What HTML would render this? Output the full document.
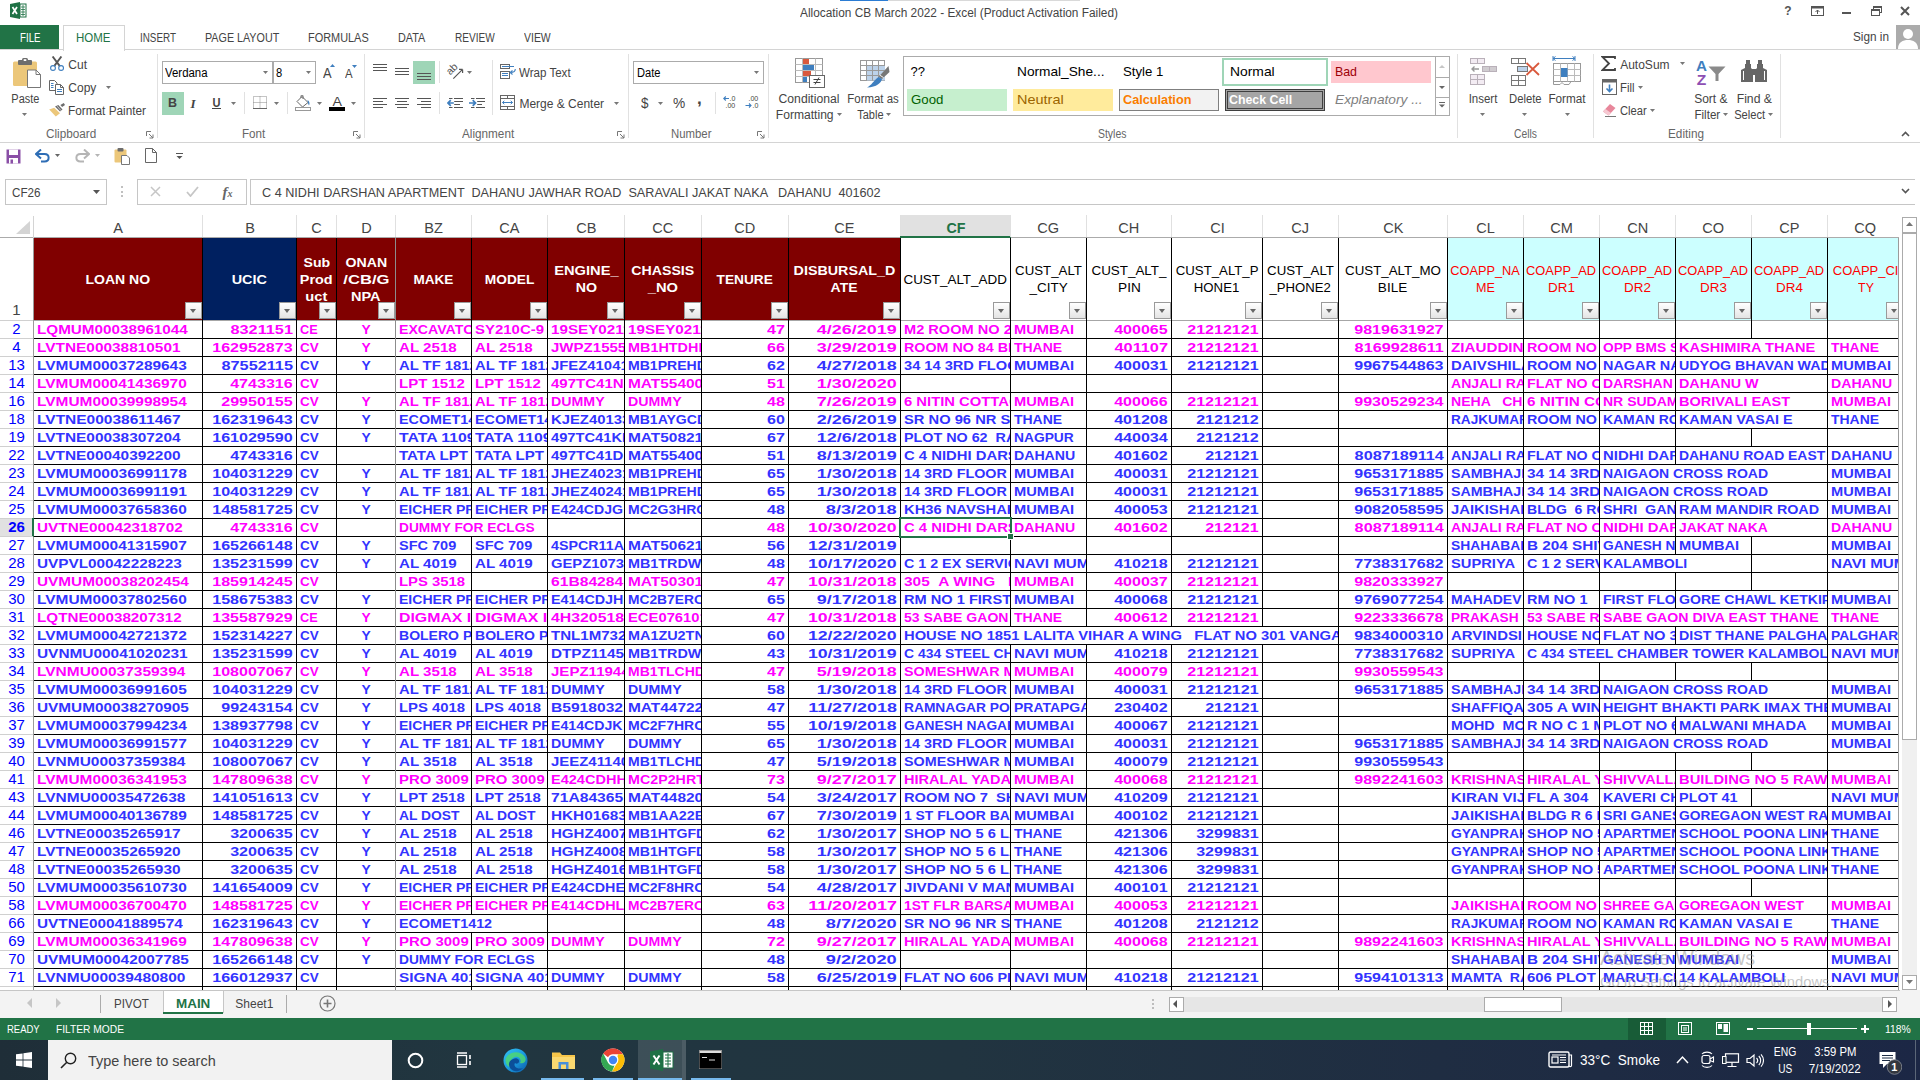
<!DOCTYPE html>
<html><head><meta charset="utf-8"><title>Allocation CB March 2022 - Excel</title>
<style>
html,body{margin:0;padding:0}
body{width:1920px;height:1080px;overflow:hidden;background:#fff;position:relative;font-family:"Liberation Sans",sans-serif}
.b{position:absolute;box-sizing:content-box}
.t{position:absolute;white-space:pre;display:inline-block}
.c{position:absolute;overflow:hidden;white-space:pre;font-size:12.5px;font-weight:bold;box-sizing:border-box}
.c.n{font-weight:normal}
.c span{display:inline-block}
.rn{position:absolute;left:0;width:33px;height:17px;text-align:center;font-size:15px;line-height:16px;color:#0000ff}
.rn.s{font-weight:bold;color:#0000ff}
.fb{position:absolute;width:15px;height:15px;border:1px solid #9a9a9a;background:linear-gradient(#ffffff,#e4e4e4)}
.fb i{position:absolute;left:4px;top:6px;width:0;height:0;border-left:3.5px solid transparent;border-right:3.5px solid transparent;border-top:4px solid #666}
</style></head>
<body>
<div class="b" style="left:840px;top:0px;width:48px;height:1px;background:#2b7cd3;"></div>
<div class="b" style="left:888px;top:0px;width:192px;height:1px;background:#d9d9d9;"></div>
<svg class="b" style="left:10px;top:2px;" width="17" height="17" viewBox="0 0 17 17"><path d="M0 2L10 0V17L0 15Z" fill="#1e7145"/><rect x="10" y="2" width="6" height="13" fill="#fff" stroke="#1e7145"/><path d="M11 5H15M11 7.5H15M11 10H15M11 12.5H15M13 3V14" stroke="#1e7145" stroke-width="0.8"/><path d="M2.5 5L7 12M7 5L2.5 12" stroke="#fff" stroke-width="1.7"/></svg>
<span class="t" style="top:4.9px;font-size:12px;line-height:17px;color:#444;left:800.0px;transform-origin:0 50%;transform:scaleX(0.987);">Allocation CB March 2022 - Excel (Product Activation Failed)</span>
<span class="t" style="top:2.5px;font-size:12px;line-height:17px;color:#555;font-weight:bold;left:1784.3px;transform-origin:50% 50%;">?</span>
<svg class="b" style="left:1811px;top:6px;" width="13" height="10" viewBox="0 0 13 10"><rect x="0.5" y="0.5" width="12" height="9" fill="none" stroke="#555"/><rect x="0.5" y="0.5" width="12" height="2" fill="#555"/><path d="M6.5 8V4M4.5 6L6.5 4L8.5 6" fill="none" stroke="#555"/></svg>
<div class="b" style="left:1842px;top:12px;width:9px;height:2px;background:#555;"></div>
<svg class="b" style="left:1871px;top:6px;" width="11" height="10" viewBox="0 0 11 10"><rect x="2.5" y="0.5" width="8" height="6" fill="none" stroke="#555"/><rect x="2.5" y="0.5" width="8" height="1.5" fill="#555"/><rect x="0.5" y="3.5" width="8" height="6" fill="#fff" stroke="#555"/><rect x="0.5" y="3.5" width="8" height="1.5" fill="#555"/></svg>
<svg class="b" style="left:1900px;top:6px;" width="10" height="10" viewBox="0 0 10 10"><path d="M1 1L9 9M9 1L1 9" stroke="#555" stroke-width="2"/></svg>
<div class="b" style="left:0px;top:25px;width:59px;height:25px;background:#217346;"></div>
<span class="t" style="top:29.8px;font-size:12px;line-height:17px;color:#fff;left:19.5px;transform-origin:0 50%;transform:scaleX(0.809);">FILE</span>
<div class="b" style="left:0px;top:49px;width:1920px;height:1px;background:#d4d4d4;"></div>
<div class="b" style="left:63px;top:25px;width:60px;height:25px;background:#fff;border:1px solid #d4d4d4;border-bottom:none"></div>
<span class="t" style="top:29.8px;font-size:12px;line-height:17px;color:#217346;left:76.3px;transform-origin:0 50%;transform:scaleX(0.958);">HOME</span>
<span class="t" style="top:29.8px;font-size:12px;line-height:17px;color:#444;left:140.3px;transform-origin:0 50%;transform:scaleX(0.822);">INSERT</span>
<span class="t" style="top:29.8px;font-size:12px;line-height:17px;color:#444;left:205.3px;transform-origin:0 50%;transform:scaleX(0.895);">PAGE LAYOUT</span>
<span class="t" style="top:29.8px;font-size:12px;line-height:17px;color:#444;left:308.3px;transform-origin:0 50%;transform:scaleX(0.910);">FORMULAS</span>
<span class="t" style="top:29.8px;font-size:12px;line-height:17px;color:#444;left:398.3px;transform-origin:0 50%;transform:scaleX(0.903);">DATA</span>
<span class="t" style="top:29.8px;font-size:12px;line-height:17px;color:#444;left:455.3px;transform-origin:0 50%;transform:scaleX(0.839);">REVIEW</span>
<span class="t" style="top:29.8px;font-size:12px;line-height:17px;color:#444;left:524.0px;transform-origin:0 50%;transform:scaleX(0.871);">VIEW</span>
<span class="t" style="top:29.1px;font-size:12px;line-height:17px;color:#444;left:1852.7px;transform-origin:0 50%;transform:scaleX(0.981);">Sign in</span>
<div class="b" style="left:1896px;top:25px;width:24px;height:24px;background:#ababab;"></div>
<svg class="b" style="left:1896px;top:25px;" width="24" height="24" viewBox="0 0 24 24"><circle cx="12" cy="9" r="5" fill="#fff"/><path d="M2 24C2 17 7 15 12 15C17 15 22 17 22 24Z" fill="#fff"/></svg>
<svg class="b" style="left:13px;top:58px;" width="28" height="30" viewBox="0 0 28 30"><rect x="0" y="3.5" width="24" height="24.5" rx="1.5" fill="#ecc77a"/><rect x="5" y="2" width="14" height="5" rx="1" fill="#6d6d6d"/><rect x="9" y="0" width="6" height="4" rx="1.5" fill="#6d6d6d"/><rect x="10.7" y="1.2" width="2.6" height="1.8" fill="#fff"/><path d="M14.5 12H23L27.5 16.5V29.5H14.5Z" fill="#fff" stroke="#777"/><path d="M23 12V16.5H27.5" fill="none" stroke="#777"/></svg>
<span class="t" style="top:90.5px;font-size:12px;line-height:17px;color:#444;left:9.9px;transform-origin:50% 50%;transform:scaleX(0.912);">Paste</span>
<svg class="b" style="left:22px;top:113px;" width="5" height="3" viewBox="0 0 5 3"><path d="M0 0H5L2.5 3Z" fill="#777"/></svg>
<svg class="b" style="left:50px;top:56px;" width="15" height="16" viewBox="0 0 15 16"><path d="M2.6 0.5L10.2 10.6M11.4 0.5L3.8 10.6" stroke="#555" stroke-width="1.9" fill="none"/><circle cx="3" cy="12" r="2.4" fill="#fff" stroke="#3f7fbf" stroke-width="1.1"/><circle cx="11.1" cy="12" r="2.4" fill="#fff" stroke="#3f7fbf" stroke-width="1.1"/></svg>
<span class="t" style="top:57.0px;font-size:12px;line-height:17px;color:#444;left:68.3px;transform-origin:0 50%;">Cut</span>
<svg class="b" style="left:49px;top:80px;" width="16" height="15" viewBox="0 0 16 15"><path d="M0.5 0.5H5.5L8 3V10.5H0.5Z" fill="#fff" stroke="#666"/><path d="M2 3.5H4.5M2 5.5H4.5M2 7.5H4.5" stroke="#3f7fbf"/><path d="M6.5 4.5H11.5L14.5 7.5V14.5H6.5Z" fill="#fff" stroke="#666"/><path d="M11.5 4.5V7.5H14.5" fill="none" stroke="#666"/><path d="M8 9.5H13M8 11.5H13" stroke="#3f7fbf"/></svg>
<span class="t" style="top:80.1px;font-size:12px;line-height:17px;color:#444;left:68.3px;transform-origin:0 50%;">Copy</span>
<svg class="b" style="left:106px;top:86px;" width="5" height="3" viewBox="0 0 5 3"><path d="M0 0H5L2.5 3Z" fill="#777"/></svg>
<svg class="b" style="left:49px;top:103px;" width="17" height="14" viewBox="0 0 17 14"><path d="M0.2 6.5L5.2 4.8L11 10.2L6.8 13.6Z" fill="#ecc77a"/><path d="M6 3.6L9.3 1.9L13.5 6.5L11 8.6Z" fill="#6d6d6d"/><path d="M11.4 1.9L14.7 0L16 1.9L13.1 4Z" fill="#6d6d6d"/><path d="M8.2 3.2L12 7.6" stroke="#fff" stroke-width="0.6"/></svg>
<span class="t" style="top:103.2px;font-size:12px;line-height:17px;color:#444;left:68.3px;transform-origin:0 50%;transform:scaleX(0.983);">Format Painter</span>
<span class="t" style="top:125.5px;font-size:12px;line-height:17px;color:#666;left:45.5px;transform-origin:0 50%;transform:scaleX(0.979);">Clipboard</span>
<svg class="b" style="left:146px;top:131px;" width="8" height="8" viewBox="0 0 8 8"><path d="M0.5 5V0.5H5" fill="none" stroke="#777"/><path d="M3 3L7 7M7 3.5V7H3.5" fill="none" stroke="#777"/></svg>
<div class="b" style="left:157px;top:54px;width:1px;height:84px;background:#e1e1e1"></div>
<div class="b" style="left:162px;top:61px;width:109px;height:21px;background:#fff;border:1px solid #ababab;"></div>
<div class="b" style="left:273px;top:61px;width:41px;height:21px;background:#fff;border:1px solid #ababab;"></div>
<span class="t" style="top:65.2px;font-size:12px;line-height:17px;color:#000;left:165.0px;transform-origin:0 50%;transform:scaleX(0.951);">Verdana</span>
<svg class="b" style="left:263px;top:71px;" width="5" height="3" viewBox="0 0 5 3"><path d="M0 0H5L2.5 3Z" fill="#777"/></svg>
<span class="t" style="top:65.2px;font-size:12px;line-height:17px;color:#000;left:275.8px;transform-origin:0 50%;transform:scaleX(0.929);">8</span>
<svg class="b" style="left:306px;top:71px;" width="5" height="3" viewBox="0 0 5 3"><path d="M0 0H5L2.5 3Z" fill="#777"/></svg>
<span class="t" style="top:63.3px;font-size:14.5px;line-height:20px;color:#444;left:322.7px;transform-origin:0 50%;transform:scaleX(0.889);">A</span>
<svg class="b" style="left:330px;top:64px;" width="5" height="3" viewBox="0 0 5 3"><path d="M0 3H5L2.5 0Z" fill="#3f7fbf"/></svg>
<span class="t" style="top:65.8px;font-size:12px;line-height:17px;color:#444;left:345.2px;transform-origin:0 50%;transform:scaleX(0.950);">A</span>
<svg class="b" style="left:352px;top:65px;" width="5" height="3" viewBox="0 0 5 3"><path d="M0 0H5L2.5 3Z" fill="#3f7fbf"/></svg>
<div class="b" style="left:162px;top:92px;width:22px;height:23px;background:#9fd5b7;"></div>
<span class="t" style="top:94.0px;font-size:12.5px;line-height:18px;color:#444;font-weight:bold;left:168.0px;transform-origin:50% 50%;">B</span>
<span class="t" style="left:190.5px;top:94.5px;font-size:13px;line-height:17px;color:#444;font-family:'Liberation Serif',serif;font-style:italic;font-weight:bold">I</span>
<span class="t" style="top:94.0px;font-size:12.5px;line-height:18px;color:#444;font-weight:bold;left:212.2px;transform-origin:50% 50%;transform:scaleX(0.886);">U</span>
<div class="b" style="left:212px;top:108px;width:9px;height:1px;background:#444;"></div>
<svg class="b" style="left:231px;top:102px;" width="5" height="3" viewBox="0 0 5 3"><path d="M0 0H5L2.5 3Z" fill="#777"/></svg>
<div class="b" style="left:244px;top:92px;width:1px;height:22px;background:#e1e1e1"></div>
<svg class="b" style="left:253px;top:96px;" width="14" height="13" viewBox="0 0 14 13"><path d="M0.5 0.5H13.5V12.5H0.5ZM7 0.5V12.5M0.5 6.5H13.5" fill="none" stroke="#8a8a8a" stroke-dasharray="1 1"/><path d="M0 12.5H14" stroke="#666"/></svg>
<svg class="b" style="left:274px;top:102px;" width="5" height="3" viewBox="0 0 5 3"><path d="M0 0H5L2.5 3Z" fill="#777"/></svg>
<div class="b" style="left:287px;top:92px;width:1px;height:22px;background:#e1e1e1"></div>
<svg class="b" style="left:295px;top:95px;" width="17" height="16" viewBox="0 0 17 16"><path d="M7 1.5L13 7.5L7.5 12L2 6.5Z" fill="#fff" stroke="#666"/><path d="M6 3V0.8C6 0 8 0 8 0.8V4" fill="none" stroke="#666"/><path d="M12.5 5C14.5 6 15 8.5 14 10.5C13 9 12.8 7 12.5 5Z" fill="#3f7fbf"/><rect x="0.5" y="12.5" width="15" height="3" fill="#fff" stroke="#999"/></svg>
<svg class="b" style="left:317px;top:102px;" width="5" height="3" viewBox="0 0 5 3"><path d="M0 0H5L2.5 3Z" fill="#777"/></svg>
<span class="t" style="top:92.5px;font-size:13px;line-height:18px;color:#444;left:332.9px;transform-origin:50% 50%;transform:scaleX(1.096);">A</span>
<div class="b" style="left:329px;top:107px;width:16px;height:4px;background:#000;"></div>
<svg class="b" style="left:351px;top:102px;" width="5" height="3" viewBox="0 0 5 3"><path d="M0 0H5L2.5 3Z" fill="#777"/></svg>
<span class="t" style="top:125.5px;font-size:12px;line-height:17px;color:#666;left:241.7px;transform-origin:0 50%;transform:scaleX(0.970);">Font</span>
<svg class="b" style="left:353px;top:131px;" width="8" height="8" viewBox="0 0 8 8"><path d="M0.5 5V0.5H5" fill="none" stroke="#777"/><path d="M3 3L7 7M7 3.5V7H3.5" fill="none" stroke="#777"/></svg>
<div class="b" style="left:364px;top:54px;width:1px;height:84px;background:#e1e1e1"></div>
<svg class="b" style="left:373px;top:63px;" width="14" height="18" viewBox="0 0 14 18"><rect x="0" y="1" width="14" height="1" fill="#555"/><rect x="0" y="4" width="14" height="1" fill="#555"/><rect x="0" y="7" width="14" height="1" fill="#555"/></svg>
<svg class="b" style="left:395px;top:63px;" width="14" height="18" viewBox="0 0 14 18"><rect x="0" y="5" width="14" height="1" fill="#555"/><rect x="0" y="8" width="14" height="1" fill="#555"/><rect x="0" y="11" width="14" height="1" fill="#555"/></svg>
<div class="b" style="left:413px;top:61px;width:22px;height:23px;background:#9fd5b7;"></div>
<svg class="b" style="left:417px;top:63px;" width="14" height="18" viewBox="0 0 14 18"><rect x="0" y="10" width="14" height="1" fill="#555"/><rect x="0" y="13" width="14" height="1" fill="#555"/><rect x="0" y="16" width="14" height="1" fill="#555"/></svg>
<div class="b" style="left:439px;top:61px;width:1px;height:22px;background:#e1e1e1"></div>
<svg class="b" style="left:446px;top:63px;" width="18" height="17" viewBox="0 0 18 17"><path d="M7.3 15.7L16.6 6.4M16.6 6.4H13M16.6 6.4V10" fill="none" stroke="#555" stroke-width="1.2"/><text x="0" y="0" transform="translate(4.2,12.6) rotate(-45)" font-size="10.5" fill="#555" font-family="Liberation Sans">ab</text></svg>
<svg class="b" style="left:467px;top:71px;" width="5" height="3" viewBox="0 0 5 3"><path d="M0 0H5L2.5 3Z" fill="#777"/></svg>
<div class="b" style="left:492px;top:60px;width:1px;height:55px;background:#e1e1e1"></div>
<svg class="b" style="left:500px;top:64px;" width="17" height="15" viewBox="0 0 17 15"><rect x="0.5" y="0.5" width="9" height="4" fill="#fff" stroke="#666"/><rect x="0.5" y="7.5" width="9" height="7" fill="#fff" stroke="#666"/><path d="M2 2.5H14M2 9.5H8M2 11.5H8" stroke="#3f7fbf"/><path d="M15.3 5C15.3 8 13 8.5 10.5 8.5M12.5 6.5L10.2 8.5L12.5 10.5" fill="none" stroke="#3f7fbf" stroke-width="1.1"/></svg>
<span class="t" style="top:65.2px;font-size:12px;line-height:17px;color:#444;left:519.4px;transform-origin:0 50%;transform:scaleX(0.963);">Wrap Text</span>
<svg class="b" style="left:373px;top:97px;" width="14" height="12" viewBox="0 0 14 12"><rect x="0" y="1" width="14" height="1" fill="#555"/><rect x="0" y="4" width="10" height="1" fill="#555"/><rect x="0" y="7" width="14" height="1" fill="#555"/><rect x="0" y="10" width="10" height="1" fill="#555"/></svg>
<svg class="b" style="left:395px;top:97px;" width="14" height="12" viewBox="0 0 14 12"><rect x="0.0" y="1" width="14" height="1" fill="#555"/><rect x="2.0" y="4" width="10" height="1" fill="#555"/><rect x="0.0" y="7" width="14" height="1" fill="#555"/><rect x="2.0" y="10" width="10" height="1" fill="#555"/></svg>
<svg class="b" style="left:417px;top:97px;" width="14" height="12" viewBox="0 0 14 12"><rect x="0" y="1" width="14" height="1" fill="#555"/><rect x="4" y="4" width="10" height="1" fill="#555"/><rect x="0" y="7" width="14" height="1" fill="#555"/><rect x="4" y="10" width="10" height="1" fill="#555"/></svg>
<div class="b" style="left:439px;top:92px;width:1px;height:22px;background:#e1e1e1"></div>
<svg class="b" style="left:447px;top:97px;" width="17" height="12" viewBox="0 0 17 12"><path d="M2 1.5H5.5M7 1.5H16M7.2 4.5H16M7.2 7.5H13M2 10.5H5.5M7 10.5H16" stroke="#555"/><path d="M6.8 6H1M3.8 3.2L1 6L3.8 8.8" fill="none" stroke="#3f7fbf" stroke-width="1.7"/></svg>
<svg class="b" style="left:469px;top:97px;" width="17" height="12" viewBox="0 0 17 12"><path d="M2 1.5H5.5M7 1.5H16M8.2 4.5H16M8.2 7.5H13M2 10.5H5.5M7 10.5H16" stroke="#555"/><path d="M0 6H6.5M3.7 3.2L6.5 6L3.7 8.8" fill="none" stroke="#3f7fbf" stroke-width="1.7"/></svg>
<svg class="b" style="left:500px;top:95px;" width="15" height="15" viewBox="0 0 15 15"><rect x="0.5" y="0.5" width="14" height="14" fill="#fff" stroke="#666"/><path d="M0.5 3.5H14.5M0.5 11.5H14.5M7.5 0.5V3.5M7.5 11.5V14.5" stroke="#666"/><path d="M2.5 7.5H12.5M4.3 5.8L2.5 7.5L4.3 9.2M10.7 5.8L12.5 7.5L10.7 9.2" fill="none" stroke="#3f7fbf"/></svg>
<span class="t" style="top:96.1px;font-size:12px;line-height:17px;color:#444;left:519.4px;transform-origin:0 50%;">Merge &amp; Center</span>
<svg class="b" style="left:614px;top:102px;" width="5" height="3" viewBox="0 0 5 3"><path d="M0 0H5L2.5 3Z" fill="#777"/></svg>
<span class="t" style="top:125.5px;font-size:12px;line-height:17px;color:#666;left:462.2px;transform-origin:0 50%;transform:scaleX(0.978);">Alignment</span>
<svg class="b" style="left:617px;top:131px;" width="8" height="8" viewBox="0 0 8 8"><path d="M0.5 5V0.5H5" fill="none" stroke="#777"/><path d="M3 3L7 7M7 3.5V7H3.5" fill="none" stroke="#777"/></svg>
<div class="b" style="left:628px;top:54px;width:1px;height:84px;background:#e1e1e1"></div>
<div class="b" style="left:633px;top:61px;width:129px;height:21px;background:#fff;border:1px solid #ababab;"></div>
<span class="t" style="top:65.2px;font-size:12px;line-height:17px;color:#000;left:636.5px;transform-origin:0 50%;transform:scaleX(0.927);">Date</span>
<svg class="b" style="left:754px;top:71px;" width="5" height="3" viewBox="0 0 5 3"><path d="M0 0H5L2.5 3Z" fill="#777"/></svg>
<span class="t" style="top:93.0px;font-size:14px;line-height:20px;color:#444;left:640.6px;transform-origin:0 50%;transform:scaleX(0.963);">$</span>
<svg class="b" style="left:658px;top:102px;" width="5" height="3" viewBox="0 0 5 3"><path d="M0 0H5L2.5 3Z" fill="#777"/></svg>
<span class="t" style="top:93.0px;font-size:14px;line-height:20px;color:#444;left:672.5px;transform-origin:0 50%;transform:scaleX(0.980);">%</span>
<span class="t" style="top:87.0px;font-size:17px;line-height:24px;color:#444;font-weight:bold;left:697.0px;transform-origin:0 50%;">,</span>
<div class="b" style="left:715px;top:92px;width:1px;height:22px;background:#e1e1e1"></div>
<svg class="b" style="left:723px;top:95px;" width="15" height="14" viewBox="0 0 15 14"><text x="6.5" y="6" font-size="7" fill="#444" font-family="Liberation Sans">.0</text><text x="2.5" y="13" font-size="7" fill="#444" font-family="Liberation Sans">.00</text><path d="M6 3.5H0.8M2.8 1.5L0.8 3.5L2.8 5.5" fill="none" stroke="#3f7fbf" stroke-width="1.1"/></svg>
<svg class="b" style="left:744.5px;top:95px;" width="15" height="14" viewBox="0 0 15 14"><text x="3.5" y="6" font-size="7" fill="#444" font-family="Liberation Sans">.00</text><text x="7.5" y="13" font-size="7" fill="#444" font-family="Liberation Sans">.0</text><path d="M0.5 10.5H6M4 8.5L6 10.5L4 12.5" fill="none" stroke="#3f7fbf" stroke-width="1.1"/></svg>
<span class="t" style="top:125.5px;font-size:12px;line-height:17px;color:#666;left:670.6px;transform-origin:0 50%;transform:scaleX(0.947);">Number</span>
<svg class="b" style="left:757px;top:131px;" width="8" height="8" viewBox="0 0 8 8"><path d="M0.5 5V0.5H5" fill="none" stroke="#777"/><path d="M3 3L7 7M7 3.5V7H3.5" fill="none" stroke="#777"/></svg>
<div class="b" style="left:768px;top:54px;width:1px;height:84px;background:#e1e1e1"></div>
<svg class="b" style="left:795px;top:58px;" width="30" height="30" viewBox="0 0 30 30"><rect x="0.5" y="0.5" width="27" height="24" fill="#fff" stroke="#999"/><path d="M0.5 6.5H27.5M0.5 12.5H27.5M0.5 18.5H27.5M7.5 0.5V24.5M20.5 0.5V24.5" stroke="#bbb"/><rect x="8" y="1" width="6" height="5" fill="#d9593d"/><rect x="8" y="7" width="11" height="5" fill="#3f7fbf"/><rect x="8" y="13" width="8" height="5" fill="#d9593d"/><rect x="8" y="19" width="4" height="5" fill="#3f7fbf"/><rect x="14.5" y="17.5" width="15" height="12" fill="#fff" stroke="#666"/><path d="M18.5 21.5H25.5M18.5 24.5H25.5M24 19.5L20 26.5" stroke="#444" fill="none"/></svg>
<span class="t" style="top:91.1px;font-size:12px;line-height:17px;color:#444;left:779.0px;transform-origin:50% 50%;transform:scaleX(1.016);">Conditional</span>
<span class="t" style="top:107.1px;font-size:12px;line-height:17px;color:#444;left:775.8px;transform-origin:50% 50%;transform:scaleX(1.008);">Formatting</span>
<svg class="b" style="left:837px;top:113px;" width="5" height="3" viewBox="0 0 5 3"><path d="M0 0H5L2.5 3Z" fill="#777"/></svg>
<svg class="b" style="left:860px;top:60px;" width="30" height="28" viewBox="0 0 30 28"><rect x="0.5" y="0.5" width="24" height="20" fill="#fff" stroke="#999"/><rect x="7" y="6" width="18" height="14.5" fill="#bcd2ea"/><path d="M0.5 5.5H24.5M0.5 10.5H24.5M0.5 15.5H24.5M6.5 0.5V20.5M12.5 0.5V20.5M18.5 0.5V20.5" stroke="#999"/><path d="M28.5 6L29.5 12L22 19L18.5 17Z" fill="#777"/><path d="M19.8 15.2L23.6 17.6" stroke="#fff" stroke-width="0.9"/><path d="M18.5 17L22 19C21 23 17 27 7 27.5C12 25 13 21 18.5 17Z" fill="#3f7fbf"/></svg>
<span class="t" style="top:91.1px;font-size:12px;line-height:17px;color:#444;left:846.0px;transform-origin:50% 50%;transform:scaleX(0.952);">Format as</span>
<span class="t" style="top:107.1px;font-size:12px;line-height:17px;color:#444;left:855.5px;transform-origin:50% 50%;transform:scaleX(0.917);">Table</span>
<svg class="b" style="left:886px;top:113px;" width="5" height="3" viewBox="0 0 5 3"><path d="M0 0H5L2.5 3Z" fill="#777"/></svg>
<div class="b" style="left:903px;top:56px;width:545px;height:58px;background:#fff;border:1px solid #ababab;"></div>
<span class="t" style="top:63.2px;font-size:13px;line-height:18px;color:#000;left:910.6px;transform-origin:0 50%;">??</span>
<span class="t" style="top:63.2px;font-size:13px;line-height:18px;color:#000;left:1017.3px;transform-origin:0 50%;transform:scaleX(1.053);">Normal_She...</span>
<span class="t" style="top:63.2px;font-size:13px;line-height:18px;color:#000;left:1123.4px;transform-origin:0 50%;transform:scaleX(1.014);">Style 1</span>
<div class="b" style="left:1222px;top:58px;width:102px;height:24px;background:#fff;border:2px solid #9fd5b7;"></div>
<span class="t" style="top:63.2px;font-size:13px;line-height:18px;color:#000;left:1229.7px;transform-origin:0 50%;transform:scaleX(1.067);">Normal</span>
<div class="b" style="left:1331px;top:61px;width:100px;height:22px;background:#ffc7ce;"></div>
<span class="t" style="top:63.2px;font-size:13px;line-height:18px;color:#9c0006;left:1335.3px;transform-origin:0 50%;transform:scaleX(0.951);">Bad</span>
<div class="b" style="left:907px;top:89px;width:100px;height:22px;background:#c6efce;"></div>
<span class="t" style="top:91.0px;font-size:13px;line-height:18px;color:#006100;left:911.0px;transform-origin:0 50%;transform:scaleX(1.019);">Good</span>
<div class="b" style="left:1013px;top:89px;width:100px;height:22px;background:#ffeb9c;"></div>
<span class="t" style="top:91.0px;font-size:13px;line-height:18px;color:#9c6500;left:1017.3px;transform-origin:0 50%;transform:scaleX(1.114);">Neutral</span>
<div class="b" style="left:1119px;top:89px;width:98px;height:20px;background:#f2f2f2;border:1px solid #7f7f7f;"></div>
<span class="t" style="top:91.0px;font-size:13px;line-height:18px;color:#fa7d00;font-weight:bold;left:1122.9px;transform-origin:0 50%;transform:scaleX(0.976);">Calculation</span>
<div class="b" style="left:1225px;top:89px;width:94px;height:16px;background:#a5a5a5;border:3px double #3f3f3f;"></div>
<span class="t" style="top:91.0px;font-size:13px;line-height:18px;color:#fff;font-weight:bold;left:1229.4px;transform-origin:0 50%;transform:scaleX(0.951);">Check Cell</span>
<span class="t" style="top:91.0px;font-size:13px;line-height:18px;color:#7f7f7f;font-style:italic;left:1335.3px;transform-origin:0 50%;transform:scaleX(1.054);">Explanatory ...</span>
<div class="b" style="left:1435px;top:56px;width:13px;height:20px;background:#fff;border:1px solid #ababab;"></div>
<div class="b" style="left:1435px;top:77px;width:13px;height:19px;background:#fff;border:1px solid #ababab;"></div>
<div class="b" style="left:1435px;top:97px;width:13px;height:17px;background:#fff;border:1px solid #ababab;"></div>
<svg class="b" style="left:1439px;top:65px;" width="6" height="3" viewBox="0 0 6 3"><path d="M0 3H6L3 0Z" fill="#c6c6c6"/></svg>
<svg class="b" style="left:1439px;top:86px;" width="6" height="3" viewBox="0 0 6 3"><path d="M0 0H6L3 3Z" fill="#666"/></svg>
<svg class="b" style="left:1439px;top:102px;" width="6" height="6" viewBox="0 0 6 6"><path d="M0 0.5H6" stroke="#666"/><path d="M0 2.5H6L3 5.5Z" fill="#666"/></svg>
<span class="t" style="top:125.5px;font-size:12px;line-height:17px;color:#666;left:1098.3px;transform-origin:0 50%;transform:scaleX(0.869);">Styles</span>
<div class="b" style="left:1457px;top:54px;width:1px;height:84px;background:#e1e1e1"></div>
<svg class="b" style="left:1469.5px;top:58px;" width="27" height="27" viewBox="0 0 27 27"><rect x="0.5" y="0.5" width="14" height="5" fill="#f3ecf3" stroke="#b9b0b9"/><path d="M7.5 0.5V5.5" stroke="#b9b0b9"/><rect x="12.5" y="8.5" width="14" height="5" fill="#d0ccd0" stroke="#b9b0b9"/><path d="M19.5 8.5V13.5" stroke="#b9b0b9"/><rect x="0.5" y="16.5" width="14" height="10" fill="#f3ecf3" stroke="#b9b0b9"/><path d="M7.5 16.5V26.5M0.5 21.5H14.5" stroke="#b9b0b9"/><path d="M9 11H2M4.5 8.5L2 11L4.5 13.5" fill="none" stroke="#999" stroke-width="1.4"/></svg>
<span class="t" style="top:91.1px;font-size:12px;line-height:17px;color:#444;left:1467.5px;transform-origin:50% 50%;transform:scaleX(0.956);">Insert</span>
<svg class="b" style="left:1480px;top:113px;" width="5" height="3" viewBox="0 0 5 3"><path d="M0 0H5L2.5 3Z" fill="#777"/></svg>
<svg class="b" style="left:1511px;top:58px;" width="30" height="28" viewBox="0 0 30 28"><rect x="0.5" y="0.5" width="14" height="5" fill="#fff" stroke="#777"/><path d="M7.5 0.5V5.5" stroke="#777"/><rect x="6.5" y="8.5" width="10" height="5" fill="#bcd2ea" stroke="#777"/><rect x="0.5" y="17.5" width="14" height="10" fill="#fff" stroke="#777"/><path d="M7.5 17.5V27.5M0.5 22.5H14.5" stroke="#777"/><path d="M15.5 5L28 17M28 5L15.5 17" stroke="#d9593d" stroke-width="1.8" fill="none"/></svg>
<span class="t" style="top:91.1px;font-size:12px;line-height:17px;color:#444;left:1507.7px;transform-origin:50% 50%;transform:scaleX(0.940);">Delete</span>
<svg class="b" style="left:1522px;top:113px;" width="5" height="3" viewBox="0 0 5 3"><path d="M0 0H5L2.5 3Z" fill="#777"/></svg>
<svg class="b" style="left:1552px;top:56px;" width="30" height="32" viewBox="0 0 30 32"><path d="M1 2.5H23M1 0V5M23 0V5M3.5 0.5L1 2.5L3.5 4.5M20.5 0.5L23 2.5L20.5 4.5" fill="none" stroke="#3f7fbf"/><rect x="1.5" y="7.5" width="27" height="18" fill="#fff" stroke="#999"/><path d="M1.5 13.5H28.5M1.5 19.5H28.5M8.5 7.5V25.5M15.5 7.5V25.5M22.5 7.5V25.5" stroke="#bbb"/><rect x="9" y="12" width="6.5" height="9" fill="#3f7fbf"/><path d="M1.5 25.5V28.5H8L10 26.5L12 28.5H17L19 25.5" fill="none" stroke="#999"/></svg>
<span class="t" style="top:91.1px;font-size:12px;line-height:17px;color:#444;left:1548.4px;transform-origin:50% 50%;transform:scaleX(0.979);">Format</span>
<svg class="b" style="left:1565px;top:113px;" width="5" height="3" viewBox="0 0 5 3"><path d="M0 0H5L2.5 3Z" fill="#777"/></svg>
<span class="t" style="top:125.5px;font-size:12px;line-height:17px;color:#666;left:1513.7px;transform-origin:0 50%;transform:scaleX(0.859);">Cells</span>
<div class="b" style="left:1593px;top:54px;width:1px;height:84px;background:#e1e1e1"></div>
<svg class="b" style="left:1601px;top:56px;" width="16" height="15" viewBox="0 0 16 15"><path d="M14 3V1H1.5L8 7.5L1.5 14H14V12" fill="none" stroke="#444" stroke-width="1.8"/></svg>
<span class="t" style="top:56.8px;font-size:12px;line-height:17px;color:#444;left:1620.2px;transform-origin:0 50%;">AutoSum</span>
<svg class="b" style="left:1680px;top:62px;" width="5" height="3" viewBox="0 0 5 3"><path d="M0 0H5L2.5 3Z" fill="#777"/></svg>
<svg class="b" style="left:1601.5px;top:79px;" width="15" height="16" viewBox="0 0 15 16"><rect x="0.5" y="0.5" width="14" height="15" fill="#fff" stroke="#666"/><rect x="0.5" y="0.5" width="14" height="3" fill="#666"/><path d="M7.5 5.5V12M4.5 9.5L7.5 12.5L10.5 9.5" fill="none" stroke="#3f7fbf" stroke-width="1.6"/></svg>
<span class="t" style="top:79.7px;font-size:12px;line-height:17px;color:#444;left:1620.2px;transform-origin:0 50%;transform:scaleX(0.946);">Fill</span>
<svg class="b" style="left:1638px;top:86px;" width="5" height="3" viewBox="0 0 5 3"><path d="M0 0H5L2.5 3Z" fill="#777"/></svg>
<svg class="b" style="left:1602px;top:103px;" width="15" height="14" viewBox="0 0 15 14"><path d="M1 8.5L8 1L13.5 5L6.5 12.5Z" fill="#e8879b"/><path d="M1 8.5L3.5 6L9 10L6.5 12.5Z" fill="#f6c9d2"/><path d="M3 13.5H14" stroke="#777"/></svg>
<span class="t" style="top:102.8px;font-size:12px;line-height:17px;color:#444;left:1620.2px;transform-origin:0 50%;transform:scaleX(0.931);">Clear</span>
<svg class="b" style="left:1650px;top:109px;" width="5" height="3" viewBox="0 0 5 3"><path d="M0 0H5L2.5 3Z" fill="#777"/></svg>
<span class="t" style="top:54.5px;font-size:15px;line-height:21px;color:#3f7fbf;font-weight:bold;left:1696.1px;transform-origin:50% 50%;transform:scaleX(1.015);">A</span>
<span class="t" style="top:69.0px;font-size:15px;line-height:21px;color:#8e4fb3;font-weight:bold;left:1696.9px;transform-origin:50% 50%;transform:scaleX(1.037);">Z</span>
<svg class="b" style="left:1708px;top:66px;" width="18" height="16" viewBox="0 0 18 16"><path d="M0.5 0.5H17.5L10.5 8V15H7.5V8Z" fill="#8a8a8a"/></svg>
<span class="t" style="top:91.1px;font-size:12px;line-height:17px;color:#444;left:1694.2px;transform-origin:50% 50%;">Sort &amp;</span>
<span class="t" style="top:107.1px;font-size:12px;line-height:17px;color:#444;left:1693.9px;transform-origin:50% 50%;transform:scaleX(0.964);">Filter</span>
<svg class="b" style="left:1723px;top:113px;" width="5" height="3" viewBox="0 0 5 3"><path d="M0 0H5L2.5 3Z" fill="#777"/></svg>
<svg class="b" style="left:1741px;top:60px;" width="26" height="23" viewBox="0 0 26 23"><path d="M4 4H10V8L12 10V22H0V10L4 8ZM16 4H22V8L26 10V22H14V10L16 8Z" fill="#666"/><rect x="5" y="0" width="4" height="4" fill="#666"/><rect x="17" y="0" width="4" height="4" fill="#666"/><rect x="11" y="9" width="4" height="6" fill="#666"/><path d="M2.5 11V20M23.5 11V20" stroke="#fff"/></svg>
<span class="t" style="top:91.1px;font-size:12px;line-height:17px;color:#444;left:1736.7px;transform-origin:50% 50%;transform:scaleX(1.018);">Find &amp;</span>
<span class="t" style="top:107.1px;font-size:12px;line-height:17px;color:#444;left:1732.8px;transform-origin:50% 50%;transform:scaleX(0.929);">Select</span>
<svg class="b" style="left:1768px;top:113px;" width="5" height="3" viewBox="0 0 5 3"><path d="M0 0H5L2.5 3Z" fill="#777"/></svg>
<span class="t" style="top:125.5px;font-size:12px;line-height:17px;color:#666;left:1668.4px;transform-origin:0 50%;transform:scaleX(0.981);">Editing</span>
<div class="b" style="left:1780px;top:54px;width:1px;height:84px;background:#e1e1e1"></div>
<svg class="b" style="left:1901px;top:131px;" width="9" height="6" viewBox="0 0 9 6"><path d="M1 5L4.5 1.5L8 5" fill="none" stroke="#555" stroke-width="1.6"/></svg>
<div class="b" style="left:0px;top:142px;width:1920px;height:1px;background:#d4d4d4;"></div>
<svg class="b" style="left:6px;top:149px;" width="15" height="15" viewBox="0 0 15 15"><path d="M0.5 0.5H14.5V14.5H0.5Z" fill="#8a4fa6"/><rect x="3" y="0.5" width="9" height="5.5" fill="#fff"/><rect x="3" y="9" width="9" height="5.5" fill="#fff"/><rect x="4.5" y="10.5" width="2.5" height="4" fill="#8a4fa6"/></svg>
<svg class="b" style="left:35px;top:149px;" width="16" height="14" viewBox="0 0 16 14"><path d="M2 5H9.5C15 5 15 12.5 9.5 12.5H6" fill="none" stroke="#2e6db5" stroke-width="2"/><path d="M6 0.5L1 5L6 9.5" fill="none" stroke="#2e6db5" stroke-width="2"/></svg>
<svg class="b" style="left:55px;top:154px;" width="5" height="3" viewBox="0 0 5 3"><path d="M0 0H5L2.5 3Z" fill="#666"/></svg>
<svg class="b" style="left:74px;top:149px;" width="16" height="14" viewBox="0 0 16 14"><path d="M14 5H6.5C1 5 1 12.5 6.5 12.5H10" fill="none" stroke="#b5b5b5" stroke-width="2"/><path d="M10 0.5L15 5L10 9.5" fill="none" stroke="#b5b5b5" stroke-width="2"/></svg>
<svg class="b" style="left:95px;top:154px;" width="5" height="3" viewBox="0 0 5 3"><path d="M0 0H5L2.5 3Z" fill="#b5b5b5"/></svg>
<svg class="b" style="left:114px;top:147px;" width="17" height="18" viewBox="0 0 17 18"><rect x="0.5" y="2.5" width="12" height="13" rx="1" fill="#ecc77a"/><rect x="3.5" y="1" width="6" height="3.5" rx="1" fill="#6d6d6d"/><path d="M7.5 8.5H13L15.5 11V17.5H7.5Z" fill="#fff" stroke="#777"/></svg>
<svg class="b" style="left:145px;top:148px;" width="12" height="15" viewBox="0 0 12 15"><path d="M0.5 0.5H7.5L11.5 4.5V14.5H0.5Z" fill="#fff" stroke="#666"/><path d="M7.5 0.5V4.5H11.5" fill="none" stroke="#666"/></svg>
<svg class="b" style="left:176px;top:153px;" width="7" height="7" viewBox="0 0 7 7"><path d="M0 0.5H7" stroke="#555"/><path d="M0.5 3H6.5L3.5 6Z" fill="#555"/></svg>
<div class="b" style="left:5px;top:179px;width:100px;height:24px;background:#fff;border:1px solid #c6c6c6;"></div>
<span class="t" style="top:184.0px;font-size:12.5px;line-height:18px;color:#444;left:12.0px;transform-origin:0 50%;transform:scaleX(0.932);">CF26</span>
<svg class="b" style="left:93px;top:190px;" width="7" height="4" viewBox="0 0 7 4"><path d="M0 0H7L3.5 4Z" fill="#555"/></svg>
<div class="b" style="left:121px;top:186px;width:2px;height:2px;background:#ababab;border-radius:1px"></div>
<div class="b" style="left:121px;top:190.5px;width:2px;height:2px;background:#ababab;border-radius:1px"></div>
<div class="b" style="left:121px;top:195px;width:2px;height:2px;background:#ababab;border-radius:1px"></div>
<div class="b" style="left:137px;top:179px;width:108px;height:24px;background:#fff;border:1px solid #c6c6c6;"></div>
<svg class="b" style="left:150px;top:186px;" width="11" height="11" viewBox="0 0 11 11"><path d="M1 1L10 10M10 1L1 10" stroke="#c6c6c6" stroke-width="1.5"/></svg>
<svg class="b" style="left:186px;top:186px;" width="13" height="11" viewBox="0 0 13 11"><path d="M1 6L4.5 10L12 1" fill="none" stroke="#c6c6c6" stroke-width="1.8"/></svg>
<span class="t" style="left:222.5px;top:182.5px;font-size:15px;line-height:18px;color:#666;font-weight:bold;font-family:'Liberation Serif',serif;font-style:italic">f<span style="font-size:10px">x</span></span>
<div class="b" style="left:250px;top:179px;width:1664px;height:24px;background:#fff;border:1px solid #c6c6c6;border-right:none"></div>
<span class="t" style="top:184.0px;font-size:12.5px;line-height:18px;color:#444;left:262.3px;transform-origin:0 50%;transform:scaleX(1.012);">C 4 NIDHI DARSHAN APARTMENT &nbsp;DAHANU JAWHAR ROAD &nbsp;SARAVALI JAKAT NAKA &nbsp; DAHANU &nbsp;401602</span>
<svg class="b" style="left:1901px;top:188px;" width="9" height="6" viewBox="0 0 9 6"><path d="M1 1L4.5 4.5L8 1" fill="none" stroke="#555" stroke-width="1.6"/></svg>
<div class="b" id="grid" style="left:0;top:215px;width:1899px;height:775px;overflow:hidden;background:#fff">
<div class="b" style="left:0;top:0px;width:1900px;height:22px;background:#fff"></div>
<div class="b" style="left:0;top:22px;width:1899px;height:1px;background:#ababab"></div>
<svg class="b" style="left:15px;top:6px" width="16" height="14"><path d="M15 0V13H1Z" fill="#d4d4d4"/></svg>
<div class="b" style="left:202px;top:0px;width:1px;height:22px;background:#e0e0e0"></div>
<div class="b" style="left:296px;top:0px;width:1px;height:22px;background:#e0e0e0"></div>
<div class="b" style="left:336px;top:0px;width:1px;height:22px;background:#e0e0e0"></div>
<div class="b" style="left:395px;top:0px;width:1px;height:22px;background:#e0e0e0"></div>
<div class="b" style="left:471px;top:0px;width:1px;height:22px;background:#e0e0e0"></div>
<div class="b" style="left:547px;top:0px;width:1px;height:22px;background:#e0e0e0"></div>
<div class="b" style="left:624px;top:0px;width:1px;height:22px;background:#e0e0e0"></div>
<div class="b" style="left:701px;top:0px;width:1px;height:22px;background:#e0e0e0"></div>
<div class="b" style="left:788px;top:0px;width:1px;height:22px;background:#e0e0e0"></div>
<div class="b" style="left:900px;top:0px;width:1px;height:22px;background:#e0e0e0"></div>
<div class="b" style="left:901px;top:0px;width:109px;height:22px;background:#e1e1e1"></div>
<div class="b" style="left:900px;top:21px;width:111px;height:2px;background:#217346"></div>
<div class="b" style="left:1010px;top:0px;width:1px;height:22px;background:#e0e0e0"></div>
<div class="b" style="left:1086px;top:0px;width:1px;height:22px;background:#e0e0e0"></div>
<div class="b" style="left:1171px;top:0px;width:1px;height:22px;background:#e0e0e0"></div>
<div class="b" style="left:1262px;top:0px;width:1px;height:22px;background:#e0e0e0"></div>
<div class="b" style="left:1338px;top:0px;width:1px;height:22px;background:#e0e0e0"></div>
<div class="b" style="left:1447px;top:0px;width:1px;height:22px;background:#e0e0e0"></div>
<div class="b" style="left:1523px;top:0px;width:1px;height:22px;background:#e0e0e0"></div>
<div class="b" style="left:1599px;top:0px;width:1px;height:22px;background:#e0e0e0"></div>
<div class="b" style="left:1675px;top:0px;width:1px;height:22px;background:#e0e0e0"></div>
<div class="b" style="left:1751px;top:0px;width:1px;height:22px;background:#e0e0e0"></div>
<div class="b" style="left:1827px;top:0px;width:1px;height:22px;background:#e0e0e0"></div>
<div class="b" style="left:1903px;top:0px;width:1px;height:22px;background:#e0e0e0"></div>
<div class="b" style="left:33px;top:23px;width:1px;height:760px;background:#9b9b9b"></div>
<div class="b" style="left:33px;top:1px;width:1px;height:22px;background:#d4d4d4"></div>
<div class="rn" style="top:87px;color:#444">1</div>
<div class="b" style="left:0;top:105px;width:33px;height:1px;background:#d0d0d0"></div>
<div class="b" style="left:34px;top:23px;width:168px;height:82px;background:#800000"></div>
<div class="c" style="left:34px;top:56px;width:168px;height:19px;line-height:19px;color:#fff;text-align:center;"><span style="transform:scaleX(1.121);transform-origin:50% 50%">LOAN NO</span></div>
<div class="fb" style="left:185px;top:87px"><i></i></div>
<div class="b" style="left:203px;top:23px;width:93px;height:82px;background:#002060"></div>
<div class="c" style="left:203px;top:56px;width:93px;height:19px;line-height:19px;color:#fff;text-align:center;"><span style="transform:scaleX(1.153);transform-origin:50% 50%">UCIC</span></div>
<div class="fb" style="left:279px;top:87px"><i></i></div>
<div class="b" style="left:297px;top:23px;width:39px;height:82px;background:#800000"></div>
<div class="c" style="left:297px;top:39px;width:39px;height:19px;line-height:19px;color:#fff;text-align:center;"><span style="transform:scaleX(1.127);transform-origin:50% 50%">Sub</span></div>
<div class="c" style="left:297px;top:56px;width:39px;height:19px;line-height:19px;color:#fff;text-align:center;"><span style="transform:scaleX(1.153);transform-origin:50% 50%">Prod</span></div>
<div class="c" style="left:297px;top:73px;width:39px;height:19px;line-height:19px;color:#fff;text-align:center;"><span style="transform:scaleX(1.175);transform-origin:50% 50%">uct</span></div>
<div class="fb" style="left:319px;top:87px"><i></i></div>
<div class="b" style="left:337px;top:23px;width:58px;height:82px;background:#800000"></div>
<div class="c" style="left:337px;top:39px;width:58px;height:19px;line-height:19px;color:#fff;text-align:center;"><span style="transform:scaleX(1.132);transform-origin:50% 50%">ONAN</span></div>
<div class="c" style="left:337px;top:56px;width:58px;height:19px;line-height:19px;color:#fff;text-align:center;"><span style="transform:scaleX(1.328);transform-origin:50% 50%">/CB/G</span></div>
<div class="c" style="left:337px;top:73px;width:58px;height:19px;line-height:19px;color:#fff;text-align:center;"><span style="transform:scaleX(1.161);transform-origin:50% 50%">NPA</span></div>
<div class="fb" style="left:378px;top:87px"><i></i></div>
<div class="b" style="left:396px;top:23px;width:75px;height:82px;background:#800000"></div>
<div class="c" style="left:396px;top:56px;width:75px;height:19px;line-height:19px;color:#fff;text-align:center;"><span style="transform:scaleX(1.084);transform-origin:50% 50%">MAKE</span></div>
<div class="fb" style="left:454px;top:87px"><i></i></div>
<div class="b" style="left:472px;top:23px;width:75px;height:82px;background:#800000"></div>
<div class="c" style="left:472px;top:56px;width:75px;height:19px;line-height:19px;color:#fff;text-align:center;"><span style="transform:scaleX(1.098);transform-origin:50% 50%">MODEL</span></div>
<div class="fb" style="left:530px;top:87px"><i></i></div>
<div class="b" style="left:548px;top:23px;width:76px;height:82px;background:#800000"></div>
<div class="c" style="left:548px;top:47px;width:76px;height:19px;line-height:19px;color:#fff;text-align:center;"><span style="transform:scaleX(1.173);transform-origin:50% 50%">ENGINE_</span></div>
<div class="c" style="left:548px;top:64px;width:76px;height:19px;line-height:19px;color:#fff;text-align:center;"><span style="transform:scaleX(1.136);transform-origin:50% 50%">NO</span></div>
<div class="fb" style="left:607px;top:87px"><i></i></div>
<div class="b" style="left:625px;top:23px;width:76px;height:82px;background:#800000"></div>
<div class="c" style="left:625px;top:47px;width:76px;height:19px;line-height:19px;color:#fff;text-align:center;"><span style="transform:scaleX(1.132);transform-origin:50% 50%">CHASSIS</span></div>
<div class="c" style="left:625px;top:64px;width:76px;height:19px;line-height:19px;color:#fff;text-align:center;"><span style="transform:scaleX(1.176);transform-origin:50% 50%">_NO</span></div>
<div class="fb" style="left:684px;top:87px"><i></i></div>
<div class="b" style="left:702px;top:23px;width:86px;height:82px;background:#800000"></div>
<div class="c" style="left:702px;top:56px;width:86px;height:19px;line-height:19px;color:#fff;text-align:center;"><span style="transform:scaleX(1.096);transform-origin:50% 50%">TENURE</span></div>
<div class="fb" style="left:771px;top:87px"><i></i></div>
<div class="b" style="left:789px;top:23px;width:111px;height:82px;background:#800000"></div>
<div class="c" style="left:789px;top:47px;width:111px;height:19px;line-height:19px;color:#fff;text-align:center;"><span style="transform:scaleX(1.144);transform-origin:50% 50%">DISBURSAL_D</span></div>
<div class="c" style="left:789px;top:64px;width:111px;height:19px;line-height:19px;color:#fff;text-align:center;"><span style="transform:scaleX(1.116);transform-origin:50% 50%">ATE</span></div>
<div class="fb" style="left:883px;top:87px"><i></i></div>
<div class="b" style="left:901px;top:23px;width:109px;height:82px;background:#fff"></div>
<div class="c n" style="left:901px;top:56px;width:109px;height:19px;line-height:19px;color:#000;text-align:center;"><span style="transform:scaleX(1.074);transform-origin:50% 50%">CUST_ALT_ADD</span></div>
<div class="fb" style="left:993px;top:87px"><i></i></div>
<div class="b" style="left:1011px;top:23px;width:75px;height:82px;background:#fff"></div>
<div class="c n" style="left:1011px;top:47px;width:75px;height:19px;line-height:19px;color:#000;text-align:center;"><span style="transform:scaleX(1.062);transform-origin:50% 50%">CUST_ALT</span></div>
<div class="c n" style="left:1011px;top:64px;width:75px;height:19px;line-height:19px;color:#000;text-align:center;"><span style="transform:scaleX(1.079);transform-origin:50% 50%">_CITY</span></div>
<div class="fb" style="left:1069px;top:87px"><i></i></div>
<div class="b" style="left:1087px;top:23px;width:84px;height:82px;background:#fff"></div>
<div class="c n" style="left:1087px;top:47px;width:84px;height:19px;line-height:19px;color:#000;text-align:center;"><span style="transform:scaleX(1.073);transform-origin:50% 50%">CUST_ALT_</span></div>
<div class="c n" style="left:1087px;top:64px;width:84px;height:19px;line-height:19px;color:#000;text-align:center;"><span style="transform:scaleX(1.089);transform-origin:50% 50%">PIN</span></div>
<div class="fb" style="left:1154px;top:87px"><i></i></div>
<div class="b" style="left:1172px;top:23px;width:90px;height:82px;background:#fff"></div>
<div class="c n" style="left:1172px;top:47px;width:90px;height:19px;line-height:19px;color:#000;text-align:center;"><span style="transform:scaleX(1.057);transform-origin:50% 50%">CUST_ALT_P</span></div>
<div class="c n" style="left:1172px;top:64px;width:90px;height:19px;line-height:19px;color:#000;text-align:center;"><span style="transform:scaleX(1.056);transform-origin:50% 50%">HONE1</span></div>
<div class="fb" style="left:1245px;top:87px"><i></i></div>
<div class="b" style="left:1263px;top:23px;width:75px;height:82px;background:#fff"></div>
<div class="c n" style="left:1263px;top:47px;width:75px;height:19px;line-height:19px;color:#000;text-align:center;"><span style="transform:scaleX(1.062);transform-origin:50% 50%">CUST_ALT</span></div>
<div class="c n" style="left:1263px;top:64px;width:75px;height:19px;line-height:19px;color:#000;text-align:center;"><span style="transform:scaleX(1.051);transform-origin:50% 50%">_PHONE2</span></div>
<div class="fb" style="left:1321px;top:87px"><i></i></div>
<div class="b" style="left:1339px;top:23px;width:108px;height:82px;background:#fff"></div>
<div class="c n" style="left:1339px;top:47px;width:108px;height:19px;line-height:19px;color:#000;text-align:center;"><span style="transform:scaleX(1.064);transform-origin:50% 50%">CUST_ALT_MO</span></div>
<div class="c n" style="left:1339px;top:64px;width:108px;height:19px;line-height:19px;color:#000;text-align:center;"><span style="transform:scaleX(1.085);transform-origin:50% 50%">BILE</span></div>
<div class="fb" style="left:1430px;top:87px"><i></i></div>
<div class="b" style="left:1448px;top:23px;width:75px;height:82px;background:#ccffff"></div>
<div class="c n" style="left:1448px;top:47px;width:75px;height:19px;line-height:19px;color:#ff0000;text-align:center;"><span style="transform:scaleX(1.023);transform-origin:50% 50%">COAPP_NA</span></div>
<div class="c n" style="left:1448px;top:64px;width:75px;height:19px;line-height:19px;color:#ff0000;text-align:center;"><span style="transform:scaleX(1.007);transform-origin:50% 50%">ME</span></div>
<div class="fb" style="left:1506px;top:87px"><i></i></div>
<div class="b" style="left:1524px;top:23px;width:75px;height:82px;background:#ccffff"></div>
<div class="c n" style="left:1524px;top:47px;width:75px;height:19px;line-height:19px;color:#ff0000;text-align:center;"><span style="transform:scaleX(1.028);transform-origin:50% 50%">COAPP_AD</span></div>
<div class="c n" style="left:1524px;top:64px;width:75px;height:19px;line-height:19px;color:#ff0000;text-align:center;"><span style="transform:scaleX(1.076);transform-origin:50% 50%">DR1</span></div>
<div class="fb" style="left:1582px;top:87px"><i></i></div>
<div class="b" style="left:1600px;top:23px;width:75px;height:82px;background:#ccffff"></div>
<div class="c n" style="left:1600px;top:47px;width:75px;height:19px;line-height:19px;color:#ff0000;text-align:center;"><span style="transform:scaleX(1.028);transform-origin:50% 50%">COAPP_AD</span></div>
<div class="c n" style="left:1600px;top:64px;width:75px;height:19px;line-height:19px;color:#ff0000;text-align:center;"><span style="transform:scaleX(1.076);transform-origin:50% 50%">DR2</span></div>
<div class="fb" style="left:1658px;top:87px"><i></i></div>
<div class="b" style="left:1676px;top:23px;width:75px;height:82px;background:#ccffff"></div>
<div class="c n" style="left:1676px;top:47px;width:75px;height:19px;line-height:19px;color:#ff0000;text-align:center;"><span style="transform:scaleX(1.028);transform-origin:50% 50%">COAPP_AD</span></div>
<div class="c n" style="left:1676px;top:64px;width:75px;height:19px;line-height:19px;color:#ff0000;text-align:center;"><span style="transform:scaleX(1.076);transform-origin:50% 50%">DR3</span></div>
<div class="fb" style="left:1734px;top:87px"><i></i></div>
<div class="b" style="left:1752px;top:23px;width:75px;height:82px;background:#ccffff"></div>
<div class="c n" style="left:1752px;top:47px;width:75px;height:19px;line-height:19px;color:#ff0000;text-align:center;"><span style="transform:scaleX(1.028);transform-origin:50% 50%">COAPP_AD</span></div>
<div class="c n" style="left:1752px;top:64px;width:75px;height:19px;line-height:19px;color:#ff0000;text-align:center;"><span style="transform:scaleX(1.076);transform-origin:50% 50%">DR4</span></div>
<div class="fb" style="left:1810px;top:87px"><i></i></div>
<div class="b" style="left:1828px;top:23px;width:75px;height:82px;background:#ccffff"></div>
<div class="c n" style="left:1828px;top:47px;width:75px;height:19px;line-height:19px;color:#ff0000;text-align:center;"><span style="transform:scaleX(1.039);transform-origin:50% 50%">COAPP_CI</span></div>
<div class="c n" style="left:1828px;top:64px;width:75px;height:19px;line-height:19px;color:#ff0000;text-align:center;"><span style="transform:scaleX(0.987);transform-origin:50% 50%">TY</span></div>
<div class="fb" style="left:1886px;top:87px"><i></i></div>
<div class="b" style="left:202px;top:23px;width:1px;height:82px;background:#000"></div>
<div class="b" style="left:296px;top:23px;width:1px;height:82px;background:#000"></div>
<div class="b" style="left:336px;top:23px;width:1px;height:82px;background:#000"></div>
<div class="b" style="left:395px;top:23px;width:1px;height:82px;background:#8c8c8c"></div>
<div class="b" style="left:471px;top:23px;width:1px;height:82px;background:#000"></div>
<div class="b" style="left:547px;top:23px;width:1px;height:82px;background:#000"></div>
<div class="b" style="left:624px;top:23px;width:1px;height:82px;background:#000"></div>
<div class="b" style="left:701px;top:23px;width:1px;height:82px;background:#000"></div>
<div class="b" style="left:788px;top:23px;width:1px;height:82px;background:#000"></div>
<div class="b" style="left:900px;top:23px;width:1px;height:82px;background:#000"></div>
<div class="b" style="left:1010px;top:23px;width:1px;height:82px;background:#000"></div>
<div class="b" style="left:1086px;top:23px;width:1px;height:82px;background:#000"></div>
<div class="b" style="left:1171px;top:23px;width:1px;height:82px;background:#000"></div>
<div class="b" style="left:1262px;top:23px;width:1px;height:82px;background:#000"></div>
<div class="b" style="left:1338px;top:23px;width:1px;height:82px;background:#000"></div>
<div class="b" style="left:1447px;top:23px;width:1px;height:82px;background:#000"></div>
<div class="b" style="left:1523px;top:23px;width:1px;height:82px;background:#000"></div>
<div class="b" style="left:1599px;top:23px;width:1px;height:82px;background:#000"></div>
<div class="b" style="left:1675px;top:23px;width:1px;height:82px;background:#000"></div>
<div class="b" style="left:1751px;top:23px;width:1px;height:82px;background:#000"></div>
<div class="b" style="left:1827px;top:23px;width:1px;height:82px;background:#000"></div>
<div class="rn" style="top:106px">2</div>
<div class="b" style="left:0;top:123px;width:33px;height:1px;background:#d0d0d0"></div>
<div class="c" style="left:34px;top:106px;width:168px;height:17px;line-height:19px;color:#ff00ff;text-align:left;padding-left:3px;"><span style="transform:scaleX(1.219);transform-origin:0 50%">LQMUM00038961044</span></div>
<div class="c" style="left:203px;top:106px;width:93px;height:17px;line-height:19px;color:#ff00ff;text-align:right;padding-right:3px;"><span style="transform:scaleX(1.302);transform-origin:100% 50%">8321151</span></div>
<div class="c" style="left:297px;top:106px;width:39px;height:17px;line-height:19px;color:#ff00ff;text-align:left;padding-left:3px;"><span style="transform:scaleX(1.017);transform-origin:0 50%">CE</span></div>
<div class="c" style="left:337px;top:106px;width:58px;height:17px;line-height:19px;color:#ff00ff;text-align:center;"><span style="transform:scaleX(1.109);transform-origin:50% 50%">Y</span></div>
<div class="c" style="left:396px;top:106px;width:75px;height:17px;line-height:19px;color:#ff00ff;text-align:left;padding-left:3px;"><span style="transform:scaleX(1.131);transform-origin:0 50%">EXCAVATOR</span></div>
<div class="c" style="left:472px;top:106px;width:75px;height:17px;line-height:19px;color:#ff00ff;text-align:left;padding-left:3px;"><span style="transform:scaleX(1.196);transform-origin:0 50%">SY210C-9</span></div>
<div class="c" style="left:548px;top:106px;width:76px;height:17px;line-height:19px;color:#ff00ff;text-align:left;padding-left:3px;"><span style="transform:scaleX(1.216);transform-origin:0 50%">19SEY0211</span></div>
<div class="c" style="left:625px;top:106px;width:76px;height:17px;line-height:19px;color:#ff00ff;text-align:left;padding-left:3px;"><span style="transform:scaleX(1.216);transform-origin:0 50%">19SEY0211</span></div>
<div class="c" style="left:702px;top:106px;width:86px;height:17px;line-height:19px;color:#ff00ff;text-align:right;padding-right:3px;"><span style="transform:scaleX(1.284);transform-origin:100% 50%">47</span></div>
<div class="c" style="left:789px;top:106px;width:111px;height:17px;line-height:19px;color:#ff00ff;text-align:right;padding-right:3px;"><span style="transform:scaleX(1.434);transform-origin:100% 50%">4/26/2019</span></div>
<div class="c" style="left:901px;top:106px;width:109px;height:17px;line-height:19px;color:#ff00ff;text-align:left;padding-left:3px;"><span style="transform:scaleX(1.167);transform-origin:0 50%">M2 ROOM NO 20</span></div>
<div class="c" style="left:1011px;top:106px;width:75px;height:17px;line-height:19px;color:#ff00ff;text-align:left;padding-left:3px;"><span style="transform:scaleX(1.170);transform-origin:0 50%">MUMBAI</span></div>
<div class="c" style="left:1087px;top:106px;width:84px;height:17px;line-height:19px;color:#ff00ff;text-align:right;padding-right:3px;"><span style="transform:scaleX(1.284);transform-origin:100% 50%">400065</span></div>
<div class="c" style="left:1172px;top:106px;width:90px;height:17px;line-height:19px;color:#ff00ff;text-align:right;padding-right:3px;"><span style="transform:scaleX(1.284);transform-origin:100% 50%">21212121</span></div>
<div class="c" style="left:1339px;top:106px;width:108px;height:17px;line-height:19px;color:#ff00ff;text-align:right;padding-right:3px;"><span style="transform:scaleX(1.284);transform-origin:100% 50%">9819631927</span></div>
<div class="rn" style="top:124px">4</div>
<div class="b" style="left:0;top:141px;width:33px;height:1px;background:#d0d0d0"></div>
<div class="c" style="left:34px;top:124px;width:168px;height:17px;line-height:19px;color:#ff00ff;text-align:left;padding-left:3px;"><span style="transform:scaleX(1.232);transform-origin:0 50%">LVTNE00038810501</span></div>
<div class="c" style="left:203px;top:124px;width:93px;height:17px;line-height:19px;color:#ff00ff;text-align:right;padding-right:3px;"><span style="transform:scaleX(1.284);transform-origin:100% 50%">162952873</span></div>
<div class="c" style="left:297px;top:124px;width:39px;height:17px;line-height:19px;color:#ff00ff;text-align:left;padding-left:3px;"><span style="transform:scaleX(1.075);transform-origin:0 50%">CV</span></div>
<div class="c" style="left:337px;top:124px;width:58px;height:17px;line-height:19px;color:#ff00ff;text-align:center;"><span style="transform:scaleX(1.109);transform-origin:50% 50%">Y</span></div>
<div class="c" style="left:396px;top:124px;width:75px;height:17px;line-height:19px;color:#ff00ff;text-align:left;padding-left:3px;"><span style="transform:scaleX(1.210);transform-origin:0 50%">AL 2518</span></div>
<div class="c" style="left:472px;top:124px;width:75px;height:17px;line-height:19px;color:#ff00ff;text-align:left;padding-left:3px;"><span style="transform:scaleX(1.210);transform-origin:0 50%">AL 2518</span></div>
<div class="c" style="left:548px;top:124px;width:76px;height:17px;line-height:19px;color:#ff00ff;text-align:left;padding-left:3px;"><span style="transform:scaleX(1.203);transform-origin:0 50%">JWPZ15557</span></div>
<div class="c" style="left:625px;top:124px;width:76px;height:17px;line-height:19px;color:#ff00ff;text-align:left;padding-left:3px;"><span style="transform:scaleX(1.152);transform-origin:0 50%">MB1HTDHD</span></div>
<div class="c" style="left:702px;top:124px;width:86px;height:17px;line-height:19px;color:#ff00ff;text-align:right;padding-right:3px;"><span style="transform:scaleX(1.284);transform-origin:100% 50%">66</span></div>
<div class="c" style="left:789px;top:124px;width:111px;height:17px;line-height:19px;color:#ff00ff;text-align:right;padding-right:3px;"><span style="transform:scaleX(1.434);transform-origin:100% 50%">3/29/2019</span></div>
<div class="c" style="left:901px;top:124px;width:109px;height:17px;line-height:19px;color:#ff00ff;text-align:left;padding-left:3px;"><span style="transform:scaleX(1.143);transform-origin:0 50%">ROOM NO 84 BHARAT</span></div>
<div class="c" style="left:1011px;top:124px;width:75px;height:17px;line-height:19px;color:#ff00ff;text-align:left;padding-left:3px;"><span style="transform:scaleX(1.115);transform-origin:0 50%">THANE</span></div>
<div class="c" style="left:1087px;top:124px;width:84px;height:17px;line-height:19px;color:#ff00ff;text-align:right;padding-right:3px;"><span style="transform:scaleX(1.305);transform-origin:100% 50%">401107</span></div>
<div class="c" style="left:1172px;top:124px;width:90px;height:17px;line-height:19px;color:#ff00ff;text-align:right;padding-right:3px;"><span style="transform:scaleX(1.284);transform-origin:100% 50%">21212121</span></div>
<div class="c" style="left:1339px;top:124px;width:108px;height:17px;line-height:19px;color:#ff00ff;text-align:right;padding-right:3px;"><span style="transform:scaleX(1.296);transform-origin:100% 50%">8169928611</span></div>
<div class="c" style="left:1448px;top:124px;width:75px;height:17px;line-height:19px;color:#ff00ff;text-align:left;padding-left:3px;"><span style="transform:scaleX(1.215);transform-origin:0 50%">ZIAUDDIN K</span></div>
<div class="c" style="left:1524px;top:124px;width:75px;height:17px;line-height:19px;color:#ff00ff;text-align:left;padding-left:3px;"><span style="transform:scaleX(1.144);transform-origin:0 50%">ROOM NO 8</span></div>
<div class="c" style="left:1600px;top:124px;width:75px;height:17px;line-height:19px;color:#ff00ff;text-align:left;padding-left:3px;"><span style="transform:scaleX(1.099);transform-origin:0 50%">OPP BMS SC</span></div>
<div class="c" style="left:1676px;top:124px;width:151px;height:17px;line-height:19px;color:#ff00ff;text-align:left;padding-left:3px;"><span style="transform:scaleX(1.166);transform-origin:0 50%">KASHIMIRA THANE</span></div>
<div class="c" style="left:1828px;top:124px;width:75px;height:17px;line-height:19px;color:#ff00ff;text-align:left;padding-left:3px;"><span style="transform:scaleX(1.115);transform-origin:0 50%">THANE</span></div>
<div class="rn" style="top:142px">13</div>
<div class="b" style="left:0;top:159px;width:33px;height:1px;background:#d0d0d0"></div>
<div class="c" style="left:34px;top:142px;width:168px;height:17px;line-height:19px;color:#3333ff;text-align:left;padding-left:3px;"><span style="transform:scaleX(1.234);transform-origin:0 50%">LVMUM00037289643</span></div>
<div class="c" style="left:203px;top:142px;width:93px;height:17px;line-height:19px;color:#3333ff;text-align:right;padding-right:3px;"><span style="transform:scaleX(1.300);transform-origin:100% 50%">87552115</span></div>
<div class="c" style="left:297px;top:142px;width:39px;height:17px;line-height:19px;color:#3333ff;text-align:left;padding-left:3px;"><span style="transform:scaleX(1.075);transform-origin:0 50%">CV</span></div>
<div class="c" style="left:337px;top:142px;width:58px;height:17px;line-height:19px;color:#3333ff;text-align:center;"><span style="transform:scaleX(1.109);transform-origin:50% 50%">Y</span></div>
<div class="c" style="left:396px;top:142px;width:75px;height:17px;line-height:19px;color:#3333ff;text-align:left;padding-left:3px;"><span style="transform:scaleX(1.185);transform-origin:0 50%">AL TF 1812</span></div>
<div class="c" style="left:472px;top:142px;width:75px;height:17px;line-height:19px;color:#3333ff;text-align:left;padding-left:3px;"><span style="transform:scaleX(1.185);transform-origin:0 50%">AL TF 1812</span></div>
<div class="c" style="left:548px;top:142px;width:76px;height:17px;line-height:19px;color:#3333ff;text-align:left;padding-left:3px;"><span style="transform:scaleX(1.189);transform-origin:0 50%">JFEZ410412</span></div>
<div class="c" style="left:625px;top:142px;width:76px;height:17px;line-height:19px;color:#3333ff;text-align:left;padding-left:3px;"><span style="transform:scaleX(1.125);transform-origin:0 50%">MB1PREHD</span></div>
<div class="c" style="left:702px;top:142px;width:86px;height:17px;line-height:19px;color:#3333ff;text-align:right;padding-right:3px;"><span style="transform:scaleX(1.284);transform-origin:100% 50%">62</span></div>
<div class="c" style="left:789px;top:142px;width:111px;height:17px;line-height:19px;color:#3333ff;text-align:right;padding-right:3px;"><span style="transform:scaleX(1.434);transform-origin:100% 50%">4/27/2018</span></div>
<div class="c" style="left:901px;top:142px;width:109px;height:17px;line-height:19px;color:#3333ff;text-align:left;padding-left:3px;"><span style="transform:scaleX(1.169);transform-origin:0 50%">34 14 3RD FLOOR</span></div>
<div class="c" style="left:1011px;top:142px;width:75px;height:17px;line-height:19px;color:#3333ff;text-align:left;padding-left:3px;"><span style="transform:scaleX(1.170);transform-origin:0 50%">MUMBAI</span></div>
<div class="c" style="left:1087px;top:142px;width:84px;height:17px;line-height:19px;color:#3333ff;text-align:right;padding-right:3px;"><span style="transform:scaleX(1.284);transform-origin:100% 50%">400031</span></div>
<div class="c" style="left:1172px;top:142px;width:90px;height:17px;line-height:19px;color:#3333ff;text-align:right;padding-right:3px;"><span style="transform:scaleX(1.284);transform-origin:100% 50%">21212121</span></div>
<div class="c" style="left:1339px;top:142px;width:108px;height:17px;line-height:19px;color:#3333ff;text-align:right;padding-right:3px;"><span style="transform:scaleX(1.284);transform-origin:100% 50%">9967544863</span></div>
<div class="c" style="left:1448px;top:142px;width:75px;height:17px;line-height:19px;color:#3333ff;text-align:left;padding-left:3px;"><span style="transform:scaleX(1.196);transform-origin:0 50%">DAIVSHILA</span></div>
<div class="c" style="left:1524px;top:142px;width:75px;height:17px;line-height:19px;color:#3333ff;text-align:left;padding-left:3px;"><span style="transform:scaleX(1.144);transform-origin:0 50%">ROOM NO 3</span></div>
<div class="c" style="left:1600px;top:142px;width:75px;height:17px;line-height:19px;color:#3333ff;text-align:left;padding-left:3px;"><span style="transform:scaleX(1.152);transform-origin:0 50%">NAGAR NAI</span></div>
<div class="c" style="left:1676px;top:142px;width:151px;height:17px;line-height:19px;color:#3333ff;text-align:left;padding-left:3px;"><span style="transform:scaleX(1.136);transform-origin:0 50%">UDYOG BHAVAN WADALA</span></div>
<div class="c" style="left:1828px;top:142px;width:75px;height:17px;line-height:19px;color:#3333ff;text-align:left;padding-left:3px;"><span style="transform:scaleX(1.170);transform-origin:0 50%">MUMBAI</span></div>
<div class="rn" style="top:160px">14</div>
<div class="b" style="left:0;top:177px;width:33px;height:1px;background:#d0d0d0"></div>
<div class="c" style="left:34px;top:160px;width:168px;height:17px;line-height:19px;color:#ff00ff;text-align:left;padding-left:3px;"><span style="transform:scaleX(1.234);transform-origin:0 50%">LVMUM00041436970</span></div>
<div class="c" style="left:203px;top:160px;width:93px;height:17px;line-height:19px;color:#ff00ff;text-align:right;padding-right:3px;"><span style="transform:scaleX(1.284);transform-origin:100% 50%">4743316</span></div>
<div class="c" style="left:297px;top:160px;width:39px;height:17px;line-height:19px;color:#ff00ff;text-align:left;padding-left:3px;"><span style="transform:scaleX(1.075);transform-origin:0 50%">CV</span></div>
<div class="c" style="left:396px;top:160px;width:75px;height:17px;line-height:19px;color:#ff00ff;text-align:left;padding-left:3px;"><span style="transform:scaleX(1.198);transform-origin:0 50%">LPT 1512</span></div>
<div class="c" style="left:472px;top:160px;width:75px;height:17px;line-height:19px;color:#ff00ff;text-align:left;padding-left:3px;"><span style="transform:scaleX(1.198);transform-origin:0 50%">LPT 1512</span></div>
<div class="c" style="left:548px;top:160px;width:76px;height:17px;line-height:19px;color:#ff00ff;text-align:left;padding-left:3px;"><span style="transform:scaleX(1.202);transform-origin:0 50%">497TC41NN</span></div>
<div class="c" style="left:625px;top:160px;width:76px;height:17px;line-height:19px;color:#ff00ff;text-align:left;padding-left:3px;"><span style="transform:scaleX(1.234);transform-origin:0 50%">MAT554009</span></div>
<div class="c" style="left:702px;top:160px;width:86px;height:17px;line-height:19px;color:#ff00ff;text-align:right;padding-right:3px;"><span style="transform:scaleX(1.284);transform-origin:100% 50%">51</span></div>
<div class="c" style="left:789px;top:160px;width:111px;height:17px;line-height:19px;color:#ff00ff;text-align:right;padding-right:3px;"><span style="transform:scaleX(1.434);transform-origin:100% 50%">1/30/2020</span></div>
<div class="c" style="left:1448px;top:160px;width:75px;height:17px;line-height:19px;color:#ff00ff;text-align:left;padding-left:3px;"><span style="transform:scaleX(1.124);transform-origin:0 50%">ANJALI RAJ</span></div>
<div class="c" style="left:1524px;top:160px;width:75px;height:17px;line-height:19px;color:#ff00ff;text-align:left;padding-left:3px;"><span style="transform:scaleX(1.138);transform-origin:0 50%">FLAT NO C 4</span></div>
<div class="c" style="left:1600px;top:160px;width:75px;height:17px;line-height:19px;color:#ff00ff;text-align:left;padding-left:3px;"><span style="transform:scaleX(1.116);transform-origin:0 50%">DARSHAN</span></div>
<div class="c" style="left:1676px;top:160px;width:151px;height:17px;line-height:19px;color:#ff00ff;text-align:left;padding-left:3px;"><span style="transform:scaleX(1.147);transform-origin:0 50%">DAHANU W</span></div>
<div class="c" style="left:1828px;top:160px;width:75px;height:17px;line-height:19px;color:#ff00ff;text-align:left;padding-left:3px;"><span style="transform:scaleX(1.130);transform-origin:0 50%">DAHANU</span></div>
<div class="rn" style="top:178px">16</div>
<div class="b" style="left:0;top:195px;width:33px;height:1px;background:#d0d0d0"></div>
<div class="c" style="left:34px;top:178px;width:168px;height:17px;line-height:19px;color:#ff00ff;text-align:left;padding-left:3px;"><span style="transform:scaleX(1.234);transform-origin:0 50%">LVMUM00039998954</span></div>
<div class="c" style="left:203px;top:178px;width:93px;height:17px;line-height:19px;color:#ff00ff;text-align:right;padding-right:3px;"><span style="transform:scaleX(1.284);transform-origin:100% 50%">29950155</span></div>
<div class="c" style="left:297px;top:178px;width:39px;height:17px;line-height:19px;color:#ff00ff;text-align:left;padding-left:3px;"><span style="transform:scaleX(1.075);transform-origin:0 50%">CV</span></div>
<div class="c" style="left:337px;top:178px;width:58px;height:17px;line-height:19px;color:#ff00ff;text-align:center;"><span style="transform:scaleX(1.109);transform-origin:50% 50%">Y</span></div>
<div class="c" style="left:396px;top:178px;width:75px;height:17px;line-height:19px;color:#ff00ff;text-align:left;padding-left:3px;"><span style="transform:scaleX(1.185);transform-origin:0 50%">AL TF 1812</span></div>
<div class="c" style="left:472px;top:178px;width:75px;height:17px;line-height:19px;color:#ff00ff;text-align:left;padding-left:3px;"><span style="transform:scaleX(1.185);transform-origin:0 50%">AL TF 1812</span></div>
<div class="c" style="left:548px;top:178px;width:76px;height:17px;line-height:19px;color:#ff00ff;text-align:left;padding-left:3px;"><span style="transform:scaleX(1.136);transform-origin:0 50%">DUMMY</span></div>
<div class="c" style="left:625px;top:178px;width:76px;height:17px;line-height:19px;color:#ff00ff;text-align:left;padding-left:3px;"><span style="transform:scaleX(1.136);transform-origin:0 50%">DUMMY</span></div>
<div class="c" style="left:702px;top:178px;width:86px;height:17px;line-height:19px;color:#ff00ff;text-align:right;padding-right:3px;"><span style="transform:scaleX(1.284);transform-origin:100% 50%">48</span></div>
<div class="c" style="left:789px;top:178px;width:111px;height:17px;line-height:19px;color:#ff00ff;text-align:right;padding-right:3px;"><span style="transform:scaleX(1.434);transform-origin:100% 50%">7/26/2019</span></div>
<div class="c" style="left:901px;top:178px;width:109px;height:17px;line-height:19px;color:#ff00ff;text-align:left;padding-left:3px;"><span style="transform:scaleX(1.184);transform-origin:0 50%">6 NITIN COTTAGE</span></div>
<div class="c" style="left:1011px;top:178px;width:75px;height:17px;line-height:19px;color:#ff00ff;text-align:left;padding-left:3px;"><span style="transform:scaleX(1.170);transform-origin:0 50%">MUMBAI</span></div>
<div class="c" style="left:1087px;top:178px;width:84px;height:17px;line-height:19px;color:#ff00ff;text-align:right;padding-right:3px;"><span style="transform:scaleX(1.284);transform-origin:100% 50%">400066</span></div>
<div class="c" style="left:1172px;top:178px;width:90px;height:17px;line-height:19px;color:#ff00ff;text-align:right;padding-right:3px;"><span style="transform:scaleX(1.284);transform-origin:100% 50%">21212121</span></div>
<div class="c" style="left:1339px;top:178px;width:108px;height:17px;line-height:19px;color:#ff00ff;text-align:right;padding-right:3px;"><span style="transform:scaleX(1.284);transform-origin:100% 50%">9930529234</span></div>
<div class="c" style="left:1448px;top:178px;width:75px;height:17px;line-height:19px;color:#ff00ff;text-align:left;padding-left:3px;"><span style="transform:scaleX(1.127);transform-origin:0 50%">NEHA &nbsp; CHA</span></div>
<div class="c" style="left:1524px;top:178px;width:75px;height:17px;line-height:19px;color:#ff00ff;text-align:left;padding-left:3px;"><span style="transform:scaleX(1.225);transform-origin:0 50%">6 NITIN COT</span></div>
<div class="c" style="left:1600px;top:178px;width:75px;height:17px;line-height:19px;color:#ff00ff;text-align:left;padding-left:3px;"><span style="transform:scaleX(1.121);transform-origin:0 50%">NR SUDAMA</span></div>
<div class="c" style="left:1676px;top:178px;width:151px;height:17px;line-height:19px;color:#ff00ff;text-align:left;padding-left:3px;"><span style="transform:scaleX(1.163);transform-origin:0 50%">BORIVALI EAST</span></div>
<div class="c" style="left:1828px;top:178px;width:75px;height:17px;line-height:19px;color:#ff00ff;text-align:left;padding-left:3px;"><span style="transform:scaleX(1.170);transform-origin:0 50%">MUMBAI</span></div>
<div class="rn" style="top:196px">18</div>
<div class="b" style="left:0;top:213px;width:33px;height:1px;background:#d0d0d0"></div>
<div class="c" style="left:34px;top:196px;width:168px;height:17px;line-height:19px;color:#3333ff;text-align:left;padding-left:3px;"><span style="transform:scaleX(1.239);transform-origin:0 50%">LVTNE00038611467</span></div>
<div class="c" style="left:203px;top:196px;width:93px;height:17px;line-height:19px;color:#3333ff;text-align:right;padding-right:3px;"><span style="transform:scaleX(1.284);transform-origin:100% 50%">162319643</span></div>
<div class="c" style="left:297px;top:196px;width:39px;height:17px;line-height:19px;color:#3333ff;text-align:left;padding-left:3px;"><span style="transform:scaleX(1.075);transform-origin:0 50%">CV</span></div>
<div class="c" style="left:337px;top:196px;width:58px;height:17px;line-height:19px;color:#3333ff;text-align:center;"><span style="transform:scaleX(1.109);transform-origin:50% 50%">Y</span></div>
<div class="c" style="left:396px;top:196px;width:75px;height:17px;line-height:19px;color:#3333ff;text-align:left;padding-left:3px;"><span style="transform:scaleX(1.145);transform-origin:0 50%">ECOMET1412</span></div>
<div class="c" style="left:472px;top:196px;width:75px;height:17px;line-height:19px;color:#3333ff;text-align:left;padding-left:3px;"><span style="transform:scaleX(1.145);transform-origin:0 50%">ECOMET1412</span></div>
<div class="c" style="left:548px;top:196px;width:76px;height:17px;line-height:19px;color:#3333ff;text-align:left;padding-left:3px;"><span style="transform:scaleX(1.187);transform-origin:0 50%">KJEZ401332</span></div>
<div class="c" style="left:625px;top:196px;width:76px;height:17px;line-height:19px;color:#3333ff;text-align:left;padding-left:3px;"><span style="transform:scaleX(1.123);transform-origin:0 50%">MB1AYGCD</span></div>
<div class="c" style="left:702px;top:196px;width:86px;height:17px;line-height:19px;color:#3333ff;text-align:right;padding-right:3px;"><span style="transform:scaleX(1.284);transform-origin:100% 50%">60</span></div>
<div class="c" style="left:789px;top:196px;width:111px;height:17px;line-height:19px;color:#3333ff;text-align:right;padding-right:3px;"><span style="transform:scaleX(1.434);transform-origin:100% 50%">2/26/2019</span></div>
<div class="c" style="left:901px;top:196px;width:109px;height:17px;line-height:19px;color:#3333ff;text-align:left;padding-left:3px;"><span style="transform:scaleX(1.177);transform-origin:0 50%">SR NO 96 NR SAI</span></div>
<div class="c" style="left:1011px;top:196px;width:75px;height:17px;line-height:19px;color:#3333ff;text-align:left;padding-left:3px;"><span style="transform:scaleX(1.115);transform-origin:0 50%">THANE</span></div>
<div class="c" style="left:1087px;top:196px;width:84px;height:17px;line-height:19px;color:#3333ff;text-align:right;padding-right:3px;"><span style="transform:scaleX(1.284);transform-origin:100% 50%">401208</span></div>
<div class="c" style="left:1172px;top:196px;width:90px;height:17px;line-height:19px;color:#3333ff;text-align:right;padding-right:3px;"><span style="transform:scaleX(1.284);transform-origin:100% 50%">2121212</span></div>
<div class="c" style="left:1448px;top:196px;width:75px;height:17px;line-height:19px;color:#3333ff;text-align:left;padding-left:3px;"><span style="transform:scaleX(1.088);transform-origin:0 50%">RAJKUMAR</span></div>
<div class="c" style="left:1524px;top:196px;width:75px;height:17px;line-height:19px;color:#3333ff;text-align:left;padding-left:3px;"><span style="transform:scaleX(1.144);transform-origin:0 50%">ROOM NO 1</span></div>
<div class="c" style="left:1600px;top:196px;width:75px;height:17px;line-height:19px;color:#3333ff;text-align:left;padding-left:3px;"><span style="transform:scaleX(1.113);transform-origin:0 50%">KAMAN ROAD</span></div>
<div class="c" style="left:1676px;top:196px;width:151px;height:17px;line-height:19px;color:#3333ff;text-align:left;padding-left:3px;"><span style="transform:scaleX(1.147);transform-origin:0 50%">KAMAN VASAI E</span></div>
<div class="c" style="left:1828px;top:196px;width:75px;height:17px;line-height:19px;color:#3333ff;text-align:left;padding-left:3px;"><span style="transform:scaleX(1.115);transform-origin:0 50%">THANE</span></div>
<div class="rn" style="top:214px">19</div>
<div class="b" style="left:0;top:231px;width:33px;height:1px;background:#d0d0d0"></div>
<div class="c" style="left:34px;top:214px;width:168px;height:17px;line-height:19px;color:#3333ff;text-align:left;padding-left:3px;"><span style="transform:scaleX(1.232);transform-origin:0 50%">LVTNE00038307204</span></div>
<div class="c" style="left:203px;top:214px;width:93px;height:17px;line-height:19px;color:#3333ff;text-align:right;padding-right:3px;"><span style="transform:scaleX(1.284);transform-origin:100% 50%">161029590</span></div>
<div class="c" style="left:297px;top:214px;width:39px;height:17px;line-height:19px;color:#3333ff;text-align:left;padding-left:3px;"><span style="transform:scaleX(1.075);transform-origin:0 50%">CV</span></div>
<div class="c" style="left:337px;top:214px;width:58px;height:17px;line-height:19px;color:#3333ff;text-align:center;"><span style="transform:scaleX(1.109);transform-origin:50% 50%">Y</span></div>
<div class="c" style="left:396px;top:214px;width:75px;height:17px;line-height:19px;color:#3333ff;text-align:left;padding-left:3px;"><span style="transform:scaleX(1.262);transform-origin:0 50%">TATA 1109</span></div>
<div class="c" style="left:472px;top:214px;width:75px;height:17px;line-height:19px;color:#3333ff;text-align:left;padding-left:3px;"><span style="transform:scaleX(1.262);transform-origin:0 50%">TATA 1109</span></div>
<div class="c" style="left:548px;top:214px;width:76px;height:17px;line-height:19px;color:#3333ff;text-align:left;padding-left:3px;"><span style="transform:scaleX(1.175);transform-origin:0 50%">497TC41KK</span></div>
<div class="c" style="left:625px;top:214px;width:76px;height:17px;line-height:19px;color:#3333ff;text-align:left;padding-left:3px;"><span style="transform:scaleX(1.234);transform-origin:0 50%">MAT508212</span></div>
<div class="c" style="left:702px;top:214px;width:86px;height:17px;line-height:19px;color:#3333ff;text-align:right;padding-right:3px;"><span style="transform:scaleX(1.284);transform-origin:100% 50%">67</span></div>
<div class="c" style="left:789px;top:214px;width:111px;height:17px;line-height:19px;color:#3333ff;text-align:right;padding-right:3px;"><span style="transform:scaleX(1.434);transform-origin:100% 50%">12/6/2018</span></div>
<div class="c" style="left:901px;top:214px;width:109px;height:17px;line-height:19px;color:#3333ff;text-align:left;padding-left:3px;"><span style="transform:scaleX(1.146);transform-origin:0 50%">PLOT NO 62 &nbsp;RAM</span></div>
<div class="c" style="left:1011px;top:214px;width:75px;height:17px;line-height:19px;color:#3333ff;text-align:left;padding-left:3px;"><span style="transform:scaleX(1.103);transform-origin:0 50%">NAGPUR</span></div>
<div class="c" style="left:1087px;top:214px;width:84px;height:17px;line-height:19px;color:#3333ff;text-align:right;padding-right:3px;"><span style="transform:scaleX(1.284);transform-origin:100% 50%">440034</span></div>
<div class="c" style="left:1172px;top:214px;width:90px;height:17px;line-height:19px;color:#3333ff;text-align:right;padding-right:3px;"><span style="transform:scaleX(1.284);transform-origin:100% 50%">2121212</span></div>
<div class="rn" style="top:232px">22</div>
<div class="b" style="left:0;top:249px;width:33px;height:1px;background:#d0d0d0"></div>
<div class="c" style="left:34px;top:232px;width:168px;height:17px;line-height:19px;color:#3333ff;text-align:left;padding-left:3px;"><span style="transform:scaleX(1.232);transform-origin:0 50%">LVTNE00040392200</span></div>
<div class="c" style="left:203px;top:232px;width:93px;height:17px;line-height:19px;color:#3333ff;text-align:right;padding-right:3px;"><span style="transform:scaleX(1.284);transform-origin:100% 50%">4743316</span></div>
<div class="c" style="left:297px;top:232px;width:39px;height:17px;line-height:19px;color:#3333ff;text-align:left;padding-left:3px;"><span style="transform:scaleX(1.075);transform-origin:0 50%">CV</span></div>
<div class="c" style="left:396px;top:232px;width:75px;height:17px;line-height:19px;color:#3333ff;text-align:left;padding-left:3px;"><span style="transform:scaleX(1.206);transform-origin:0 50%">TATA LPT 1512</span></div>
<div class="c" style="left:472px;top:232px;width:75px;height:17px;line-height:19px;color:#3333ff;text-align:left;padding-left:3px;"><span style="transform:scaleX(1.206);transform-origin:0 50%">TATA LPT 1512</span></div>
<div class="c" style="left:548px;top:232px;width:76px;height:17px;line-height:19px;color:#3333ff;text-align:left;padding-left:3px;"><span style="transform:scaleX(1.196);transform-origin:0 50%">497TC41DD</span></div>
<div class="c" style="left:625px;top:232px;width:76px;height:17px;line-height:19px;color:#3333ff;text-align:left;padding-left:3px;"><span style="transform:scaleX(1.234);transform-origin:0 50%">MAT554009</span></div>
<div class="c" style="left:702px;top:232px;width:86px;height:17px;line-height:19px;color:#3333ff;text-align:right;padding-right:3px;"><span style="transform:scaleX(1.284);transform-origin:100% 50%">51</span></div>
<div class="c" style="left:789px;top:232px;width:111px;height:17px;line-height:19px;color:#3333ff;text-align:right;padding-right:3px;"><span style="transform:scaleX(1.434);transform-origin:100% 50%">8/13/2019</span></div>
<div class="c" style="left:901px;top:232px;width:109px;height:17px;line-height:19px;color:#3333ff;text-align:left;padding-left:3px;"><span style="transform:scaleX(1.187);transform-origin:0 50%">C 4 NIDHI DARSHAN</span></div>
<div class="c" style="left:1011px;top:232px;width:75px;height:17px;line-height:19px;color:#3333ff;text-align:left;padding-left:3px;"><span style="transform:scaleX(1.130);transform-origin:0 50%">DAHANU</span></div>
<div class="c" style="left:1087px;top:232px;width:84px;height:17px;line-height:19px;color:#3333ff;text-align:right;padding-right:3px;"><span style="transform:scaleX(1.284);transform-origin:100% 50%">401602</span></div>
<div class="c" style="left:1172px;top:232px;width:90px;height:17px;line-height:19px;color:#3333ff;text-align:right;padding-right:3px;"><span style="transform:scaleX(1.284);transform-origin:100% 50%">212121</span></div>
<div class="c" style="left:1339px;top:232px;width:108px;height:17px;line-height:19px;color:#3333ff;text-align:right;padding-right:3px;"><span style="transform:scaleX(1.296);transform-origin:100% 50%">8087189114</span></div>
<div class="c" style="left:1448px;top:232px;width:75px;height:17px;line-height:19px;color:#3333ff;text-align:left;padding-left:3px;"><span style="transform:scaleX(1.124);transform-origin:0 50%">ANJALI RAJ</span></div>
<div class="c" style="left:1524px;top:232px;width:75px;height:17px;line-height:19px;color:#3333ff;text-align:left;padding-left:3px;"><span style="transform:scaleX(1.138);transform-origin:0 50%">FLAT NO C 4</span></div>
<div class="c" style="left:1600px;top:232px;width:75px;height:17px;line-height:19px;color:#3333ff;text-align:left;padding-left:3px;"><span style="transform:scaleX(1.193);transform-origin:0 50%">NIDHI DARSHAN</span></div>
<div class="c" style="left:1676px;top:232px;width:151px;height:17px;line-height:19px;color:#3333ff;text-align:left;padding-left:3px;"><span style="transform:scaleX(1.114);transform-origin:0 50%">DAHANU ROAD EAST</span></div>
<div class="c" style="left:1828px;top:232px;width:75px;height:17px;line-height:19px;color:#3333ff;text-align:left;padding-left:3px;"><span style="transform:scaleX(1.130);transform-origin:0 50%">DAHANU</span></div>
<div class="rn" style="top:250px">23</div>
<div class="b" style="left:0;top:267px;width:33px;height:1px;background:#d0d0d0"></div>
<div class="c" style="left:34px;top:250px;width:168px;height:17px;line-height:19px;color:#3333ff;text-align:left;padding-left:3px;"><span style="transform:scaleX(1.241);transform-origin:0 50%">LVMUM00036991178</span></div>
<div class="c" style="left:203px;top:250px;width:93px;height:17px;line-height:19px;color:#3333ff;text-align:right;padding-right:3px;"><span style="transform:scaleX(1.284);transform-origin:100% 50%">104031229</span></div>
<div class="c" style="left:297px;top:250px;width:39px;height:17px;line-height:19px;color:#3333ff;text-align:left;padding-left:3px;"><span style="transform:scaleX(1.075);transform-origin:0 50%">CV</span></div>
<div class="c" style="left:337px;top:250px;width:58px;height:17px;line-height:19px;color:#3333ff;text-align:center;"><span style="transform:scaleX(1.109);transform-origin:50% 50%">Y</span></div>
<div class="c" style="left:396px;top:250px;width:75px;height:17px;line-height:19px;color:#3333ff;text-align:left;padding-left:3px;"><span style="transform:scaleX(1.185);transform-origin:0 50%">AL TF 1812</span></div>
<div class="c" style="left:472px;top:250px;width:75px;height:17px;line-height:19px;color:#3333ff;text-align:left;padding-left:3px;"><span style="transform:scaleX(1.185);transform-origin:0 50%">AL TF 1812</span></div>
<div class="c" style="left:548px;top:250px;width:76px;height:17px;line-height:19px;color:#3333ff;text-align:left;padding-left:3px;"><span style="transform:scaleX(1.189);transform-origin:0 50%">JHEZ40231</span></div>
<div class="c" style="left:625px;top:250px;width:76px;height:17px;line-height:19px;color:#3333ff;text-align:left;padding-left:3px;"><span style="transform:scaleX(1.125);transform-origin:0 50%">MB1PREHD</span></div>
<div class="c" style="left:702px;top:250px;width:86px;height:17px;line-height:19px;color:#3333ff;text-align:right;padding-right:3px;"><span style="transform:scaleX(1.284);transform-origin:100% 50%">65</span></div>
<div class="c" style="left:789px;top:250px;width:111px;height:17px;line-height:19px;color:#3333ff;text-align:right;padding-right:3px;"><span style="transform:scaleX(1.434);transform-origin:100% 50%">1/30/2018</span></div>
<div class="c" style="left:901px;top:250px;width:109px;height:17px;line-height:19px;color:#3333ff;text-align:left;padding-left:3px;"><span style="transform:scaleX(1.148);transform-origin:0 50%">14 3RD FLOOR</span></div>
<div class="c" style="left:1011px;top:250px;width:75px;height:17px;line-height:19px;color:#3333ff;text-align:left;padding-left:3px;"><span style="transform:scaleX(1.170);transform-origin:0 50%">MUMBAI</span></div>
<div class="c" style="left:1087px;top:250px;width:84px;height:17px;line-height:19px;color:#3333ff;text-align:right;padding-right:3px;"><span style="transform:scaleX(1.284);transform-origin:100% 50%">400031</span></div>
<div class="c" style="left:1172px;top:250px;width:90px;height:17px;line-height:19px;color:#3333ff;text-align:right;padding-right:3px;"><span style="transform:scaleX(1.284);transform-origin:100% 50%">21212121</span></div>
<div class="c" style="left:1339px;top:250px;width:108px;height:17px;line-height:19px;color:#3333ff;text-align:right;padding-right:3px;"><span style="transform:scaleX(1.284);transform-origin:100% 50%">9653171885</span></div>
<div class="c" style="left:1448px;top:250px;width:75px;height:17px;line-height:19px;color:#3333ff;text-align:left;padding-left:3px;"><span style="transform:scaleX(1.136);transform-origin:0 50%">SAMBHAJI</span></div>
<div class="c" style="left:1524px;top:250px;width:75px;height:17px;line-height:19px;color:#3333ff;text-align:left;padding-left:3px;"><span style="transform:scaleX(1.229);transform-origin:0 50%">34 14 3RD</span></div>
<div class="c" style="left:1600px;top:250px;width:227px;height:17px;line-height:19px;color:#3333ff;text-align:left;padding-left:3px;"><span style="transform:scaleX(1.121);transform-origin:0 50%">NAIGAON CROSS ROAD</span></div>
<div class="c" style="left:1828px;top:250px;width:75px;height:17px;line-height:19px;color:#3333ff;text-align:left;padding-left:3px;"><span style="transform:scaleX(1.170);transform-origin:0 50%">MUMBAI</span></div>
<div class="rn" style="top:268px">24</div>
<div class="b" style="left:0;top:285px;width:33px;height:1px;background:#d0d0d0"></div>
<div class="c" style="left:34px;top:268px;width:168px;height:17px;line-height:19px;color:#3333ff;text-align:left;padding-left:3px;"><span style="transform:scaleX(1.241);transform-origin:0 50%">LVMUM00036991191</span></div>
<div class="c" style="left:203px;top:268px;width:93px;height:17px;line-height:19px;color:#3333ff;text-align:right;padding-right:3px;"><span style="transform:scaleX(1.284);transform-origin:100% 50%">104031229</span></div>
<div class="c" style="left:297px;top:268px;width:39px;height:17px;line-height:19px;color:#3333ff;text-align:left;padding-left:3px;"><span style="transform:scaleX(1.075);transform-origin:0 50%">CV</span></div>
<div class="c" style="left:337px;top:268px;width:58px;height:17px;line-height:19px;color:#3333ff;text-align:center;"><span style="transform:scaleX(1.109);transform-origin:50% 50%">Y</span></div>
<div class="c" style="left:396px;top:268px;width:75px;height:17px;line-height:19px;color:#3333ff;text-align:left;padding-left:3px;"><span style="transform:scaleX(1.185);transform-origin:0 50%">AL TF 1812</span></div>
<div class="c" style="left:472px;top:268px;width:75px;height:17px;line-height:19px;color:#3333ff;text-align:left;padding-left:3px;"><span style="transform:scaleX(1.185);transform-origin:0 50%">AL TF 1812</span></div>
<div class="c" style="left:548px;top:268px;width:76px;height:17px;line-height:19px;color:#3333ff;text-align:left;padding-left:3px;"><span style="transform:scaleX(1.189);transform-origin:0 50%">JHEZ40241</span></div>
<div class="c" style="left:625px;top:268px;width:76px;height:17px;line-height:19px;color:#3333ff;text-align:left;padding-left:3px;"><span style="transform:scaleX(1.125);transform-origin:0 50%">MB1PREHD</span></div>
<div class="c" style="left:702px;top:268px;width:86px;height:17px;line-height:19px;color:#3333ff;text-align:right;padding-right:3px;"><span style="transform:scaleX(1.284);transform-origin:100% 50%">65</span></div>
<div class="c" style="left:789px;top:268px;width:111px;height:17px;line-height:19px;color:#3333ff;text-align:right;padding-right:3px;"><span style="transform:scaleX(1.434);transform-origin:100% 50%">1/30/2018</span></div>
<div class="c" style="left:901px;top:268px;width:109px;height:17px;line-height:19px;color:#3333ff;text-align:left;padding-left:3px;"><span style="transform:scaleX(1.148);transform-origin:0 50%">14 3RD FLOOR</span></div>
<div class="c" style="left:1011px;top:268px;width:75px;height:17px;line-height:19px;color:#3333ff;text-align:left;padding-left:3px;"><span style="transform:scaleX(1.170);transform-origin:0 50%">MUMBAI</span></div>
<div class="c" style="left:1087px;top:268px;width:84px;height:17px;line-height:19px;color:#3333ff;text-align:right;padding-right:3px;"><span style="transform:scaleX(1.284);transform-origin:100% 50%">400031</span></div>
<div class="c" style="left:1172px;top:268px;width:90px;height:17px;line-height:19px;color:#3333ff;text-align:right;padding-right:3px;"><span style="transform:scaleX(1.284);transform-origin:100% 50%">21212121</span></div>
<div class="c" style="left:1339px;top:268px;width:108px;height:17px;line-height:19px;color:#3333ff;text-align:right;padding-right:3px;"><span style="transform:scaleX(1.284);transform-origin:100% 50%">9653171885</span></div>
<div class="c" style="left:1448px;top:268px;width:75px;height:17px;line-height:19px;color:#3333ff;text-align:left;padding-left:3px;"><span style="transform:scaleX(1.136);transform-origin:0 50%">SAMBHAJI</span></div>
<div class="c" style="left:1524px;top:268px;width:75px;height:17px;line-height:19px;color:#3333ff;text-align:left;padding-left:3px;"><span style="transform:scaleX(1.229);transform-origin:0 50%">34 14 3RD</span></div>
<div class="c" style="left:1600px;top:268px;width:227px;height:17px;line-height:19px;color:#3333ff;text-align:left;padding-left:3px;"><span style="transform:scaleX(1.121);transform-origin:0 50%">NAIGAON CROSS ROAD</span></div>
<div class="c" style="left:1828px;top:268px;width:75px;height:17px;line-height:19px;color:#3333ff;text-align:left;padding-left:3px;"><span style="transform:scaleX(1.170);transform-origin:0 50%">MUMBAI</span></div>
<div class="rn" style="top:286px">25</div>
<div class="b" style="left:0;top:303px;width:33px;height:1px;background:#d0d0d0"></div>
<div class="c" style="left:34px;top:286px;width:168px;height:17px;line-height:19px;color:#3333ff;text-align:left;padding-left:3px;"><span style="transform:scaleX(1.234);transform-origin:0 50%">LVMUM00037658360</span></div>
<div class="c" style="left:203px;top:286px;width:93px;height:17px;line-height:19px;color:#3333ff;text-align:right;padding-right:3px;"><span style="transform:scaleX(1.284);transform-origin:100% 50%">148581725</span></div>
<div class="c" style="left:297px;top:286px;width:39px;height:17px;line-height:19px;color:#3333ff;text-align:left;padding-left:3px;"><span style="transform:scaleX(1.075);transform-origin:0 50%">CV</span></div>
<div class="c" style="left:337px;top:286px;width:58px;height:17px;line-height:19px;color:#3333ff;text-align:center;"><span style="transform:scaleX(1.109);transform-origin:50% 50%">Y</span></div>
<div class="c" style="left:396px;top:286px;width:75px;height:17px;line-height:19px;color:#3333ff;text-align:left;padding-left:3px;"><span style="transform:scaleX(1.123);transform-origin:0 50%">EICHER PRO</span></div>
<div class="c" style="left:472px;top:286px;width:75px;height:17px;line-height:19px;color:#3333ff;text-align:left;padding-left:3px;"><span style="transform:scaleX(1.123);transform-origin:0 50%">EICHER PRO</span></div>
<div class="c" style="left:548px;top:286px;width:76px;height:17px;line-height:19px;color:#3333ff;text-align:left;padding-left:3px;"><span style="transform:scaleX(1.126);transform-origin:0 50%">E424CDJG</span></div>
<div class="c" style="left:625px;top:286px;width:76px;height:17px;line-height:19px;color:#3333ff;text-align:left;padding-left:3px;"><span style="transform:scaleX(1.118);transform-origin:0 50%">MC2G3HRC</span></div>
<div class="c" style="left:702px;top:286px;width:86px;height:17px;line-height:19px;color:#3333ff;text-align:right;padding-right:3px;"><span style="transform:scaleX(1.284);transform-origin:100% 50%">48</span></div>
<div class="c" style="left:789px;top:286px;width:111px;height:17px;line-height:19px;color:#3333ff;text-align:right;padding-right:3px;"><span style="transform:scaleX(1.456);transform-origin:100% 50%">8/3/2018</span></div>
<div class="c" style="left:901px;top:286px;width:109px;height:17px;line-height:19px;color:#3333ff;text-align:left;padding-left:3px;"><span style="transform:scaleX(1.178);transform-origin:0 50%">KH36 NAVSHAKTI</span></div>
<div class="c" style="left:1011px;top:286px;width:75px;height:17px;line-height:19px;color:#3333ff;text-align:left;padding-left:3px;"><span style="transform:scaleX(1.170);transform-origin:0 50%">MUMBAI</span></div>
<div class="c" style="left:1087px;top:286px;width:84px;height:17px;line-height:19px;color:#3333ff;text-align:right;padding-right:3px;"><span style="transform:scaleX(1.284);transform-origin:100% 50%">400053</span></div>
<div class="c" style="left:1172px;top:286px;width:90px;height:17px;line-height:19px;color:#3333ff;text-align:right;padding-right:3px;"><span style="transform:scaleX(1.284);transform-origin:100% 50%">21212121</span></div>
<div class="c" style="left:1339px;top:286px;width:108px;height:17px;line-height:19px;color:#3333ff;text-align:right;padding-right:3px;"><span style="transform:scaleX(1.284);transform-origin:100% 50%">9082058595</span></div>
<div class="c" style="left:1448px;top:286px;width:75px;height:17px;line-height:19px;color:#3333ff;text-align:left;padding-left:3px;"><span style="transform:scaleX(1.185);transform-origin:0 50%">JAIKISHAN</span></div>
<div class="c" style="left:1524px;top:286px;width:75px;height:17px;line-height:19px;color:#3333ff;text-align:left;padding-left:3px;"><span style="transform:scaleX(1.124);transform-origin:0 50%">BLDG &nbsp;6 ROOM</span></div>
<div class="c" style="left:1600px;top:286px;width:75px;height:17px;line-height:19px;color:#3333ff;text-align:left;padding-left:3px;"><span style="transform:scaleX(1.143);transform-origin:0 50%">SHRI &nbsp;GANESH</span></div>
<div class="c" style="left:1676px;top:286px;width:151px;height:17px;line-height:19px;color:#3333ff;text-align:left;padding-left:3px;"><span style="transform:scaleX(1.146);transform-origin:0 50%">RAM MANDIR ROAD</span></div>
<div class="c" style="left:1828px;top:286px;width:75px;height:17px;line-height:19px;color:#3333ff;text-align:left;padding-left:3px;"><span style="transform:scaleX(1.170);transform-origin:0 50%">MUMBAI</span></div>
<div class="b" style="left:0;top:304px;width:32px;height:17px;background:#e1e1e1"></div>
<div class="b" style="left:32px;top:303px;width:2px;height:19px;background:#217346"></div>
<div class="rn s" style="top:304px">26</div>
<div class="b" style="left:0;top:321px;width:33px;height:1px;background:#d0d0d0"></div>
<div class="c" style="left:34px;top:304px;width:168px;height:17px;line-height:19px;color:#ff00ff;text-align:left;padding-left:3px;"><span style="transform:scaleX(1.226);transform-origin:0 50%">UVTNE00042318702</span></div>
<div class="c" style="left:203px;top:304px;width:93px;height:17px;line-height:19px;color:#ff00ff;text-align:right;padding-right:3px;"><span style="transform:scaleX(1.284);transform-origin:100% 50%">4743316</span></div>
<div class="c" style="left:297px;top:304px;width:39px;height:17px;line-height:19px;color:#ff00ff;text-align:left;padding-left:3px;"><span style="transform:scaleX(1.075);transform-origin:0 50%">CV</span></div>
<div class="c" style="left:396px;top:304px;width:151px;height:17px;line-height:19px;color:#ff00ff;text-align:left;padding-left:3px;"><span style="transform:scaleX(1.099);transform-origin:0 50%">DUMMY FOR ECLGS</span></div>
<div class="c" style="left:702px;top:304px;width:86px;height:17px;line-height:19px;color:#ff00ff;text-align:right;padding-right:3px;"><span style="transform:scaleX(1.284);transform-origin:100% 50%">48</span></div>
<div class="c" style="left:789px;top:304px;width:111px;height:17px;line-height:19px;color:#ff00ff;text-align:right;padding-right:3px;"><span style="transform:scaleX(1.417);transform-origin:100% 50%">10/30/2020</span></div>
<div class="c" style="left:901px;top:304px;width:109px;height:17px;line-height:19px;color:#ff00ff;text-align:left;padding-left:3px;"><span style="transform:scaleX(1.187);transform-origin:0 50%">C 4 NIDHI DARSHAN</span></div>
<div class="c" style="left:1011px;top:304px;width:75px;height:17px;line-height:19px;color:#ff00ff;text-align:left;padding-left:3px;"><span style="transform:scaleX(1.130);transform-origin:0 50%">DAHANU</span></div>
<div class="c" style="left:1087px;top:304px;width:84px;height:17px;line-height:19px;color:#ff00ff;text-align:right;padding-right:3px;"><span style="transform:scaleX(1.284);transform-origin:100% 50%">401602</span></div>
<div class="c" style="left:1172px;top:304px;width:90px;height:17px;line-height:19px;color:#ff00ff;text-align:right;padding-right:3px;"><span style="transform:scaleX(1.284);transform-origin:100% 50%">212121</span></div>
<div class="c" style="left:1339px;top:304px;width:108px;height:17px;line-height:19px;color:#ff00ff;text-align:right;padding-right:3px;"><span style="transform:scaleX(1.296);transform-origin:100% 50%">8087189114</span></div>
<div class="c" style="left:1448px;top:304px;width:75px;height:17px;line-height:19px;color:#ff00ff;text-align:left;padding-left:3px;"><span style="transform:scaleX(1.124);transform-origin:0 50%">ANJALI RAJ</span></div>
<div class="c" style="left:1524px;top:304px;width:75px;height:17px;line-height:19px;color:#ff00ff;text-align:left;padding-left:3px;"><span style="transform:scaleX(1.138);transform-origin:0 50%">FLAT NO C 4</span></div>
<div class="c" style="left:1600px;top:304px;width:75px;height:17px;line-height:19px;color:#ff00ff;text-align:left;padding-left:3px;"><span style="transform:scaleX(1.193);transform-origin:0 50%">NIDHI DARSHAN</span></div>
<div class="c" style="left:1676px;top:304px;width:151px;height:17px;line-height:19px;color:#ff00ff;text-align:left;padding-left:3px;"><span style="transform:scaleX(1.105);transform-origin:0 50%">JAKAT NAKA</span></div>
<div class="c" style="left:1828px;top:304px;width:75px;height:17px;line-height:19px;color:#ff00ff;text-align:left;padding-left:3px;"><span style="transform:scaleX(1.130);transform-origin:0 50%">DAHANU</span></div>
<div class="rn" style="top:322px">27</div>
<div class="b" style="left:0;top:339px;width:33px;height:1px;background:#d0d0d0"></div>
<div class="c" style="left:34px;top:322px;width:168px;height:17px;line-height:19px;color:#3333ff;text-align:left;padding-left:3px;"><span style="transform:scaleX(1.234);transform-origin:0 50%">LVMUM00041315907</span></div>
<div class="c" style="left:203px;top:322px;width:93px;height:17px;line-height:19px;color:#3333ff;text-align:right;padding-right:3px;"><span style="transform:scaleX(1.284);transform-origin:100% 50%">165266148</span></div>
<div class="c" style="left:297px;top:322px;width:39px;height:17px;line-height:19px;color:#3333ff;text-align:left;padding-left:3px;"><span style="transform:scaleX(1.075);transform-origin:0 50%">CV</span></div>
<div class="c" style="left:337px;top:322px;width:58px;height:17px;line-height:19px;color:#3333ff;text-align:center;"><span style="transform:scaleX(1.109);transform-origin:50% 50%">Y</span></div>
<div class="c" style="left:396px;top:322px;width:75px;height:17px;line-height:19px;color:#3333ff;text-align:left;padding-left:3px;"><span style="transform:scaleX(1.160);transform-origin:0 50%">SFC 709</span></div>
<div class="c" style="left:472px;top:322px;width:75px;height:17px;line-height:19px;color:#3333ff;text-align:left;padding-left:3px;"><span style="transform:scaleX(1.160);transform-origin:0 50%">SFC 709</span></div>
<div class="c" style="left:548px;top:322px;width:76px;height:17px;line-height:19px;color:#3333ff;text-align:left;padding-left:3px;"><span style="transform:scaleX(1.141);transform-origin:0 50%">4SPCR11AA</span></div>
<div class="c" style="left:625px;top:322px;width:76px;height:17px;line-height:19px;color:#3333ff;text-align:left;padding-left:3px;"><span style="transform:scaleX(1.234);transform-origin:0 50%">MAT506212</span></div>
<div class="c" style="left:702px;top:322px;width:86px;height:17px;line-height:19px;color:#3333ff;text-align:right;padding-right:3px;"><span style="transform:scaleX(1.284);transform-origin:100% 50%">56</span></div>
<div class="c" style="left:789px;top:322px;width:111px;height:17px;line-height:19px;color:#3333ff;text-align:right;padding-right:3px;"><span style="transform:scaleX(1.417);transform-origin:100% 50%">12/31/2019</span></div>
<div class="c" style="left:1448px;top:322px;width:75px;height:17px;line-height:19px;color:#3333ff;text-align:left;padding-left:3px;"><span style="transform:scaleX(1.106);transform-origin:0 50%">SHAHABAD</span></div>
<div class="c" style="left:1524px;top:322px;width:75px;height:17px;line-height:19px;color:#3333ff;text-align:left;padding-left:3px;"><span style="transform:scaleX(1.224);transform-origin:0 50%">B 204 SHIV</span></div>
<div class="c" style="left:1600px;top:322px;width:75px;height:17px;line-height:19px;color:#3333ff;text-align:left;padding-left:3px;"><span style="transform:scaleX(1.099);transform-origin:0 50%">GANESH NAGAR</span></div>
<div class="c" style="left:1676px;top:322px;width:75px;height:17px;line-height:19px;color:#3333ff;text-align:left;padding-left:3px;"><span style="transform:scaleX(1.170);transform-origin:0 50%">MUMBAI</span></div>
<div class="c" style="left:1828px;top:322px;width:75px;height:17px;line-height:19px;color:#3333ff;text-align:left;padding-left:3px;"><span style="transform:scaleX(1.170);transform-origin:0 50%">MUMBAI</span></div>
<div class="rn" style="top:340px">28</div>
<div class="b" style="left:0;top:357px;width:33px;height:1px;background:#d0d0d0"></div>
<div class="c" style="left:34px;top:340px;width:168px;height:17px;line-height:19px;color:#3333ff;text-align:left;padding-left:3px;"><span style="transform:scaleX(1.225);transform-origin:0 50%">UVPVL00042228223</span></div>
<div class="c" style="left:203px;top:340px;width:93px;height:17px;line-height:19px;color:#3333ff;text-align:right;padding-right:3px;"><span style="transform:scaleX(1.284);transform-origin:100% 50%">135231599</span></div>
<div class="c" style="left:297px;top:340px;width:39px;height:17px;line-height:19px;color:#3333ff;text-align:left;padding-left:3px;"><span style="transform:scaleX(1.075);transform-origin:0 50%">CV</span></div>
<div class="c" style="left:337px;top:340px;width:58px;height:17px;line-height:19px;color:#3333ff;text-align:center;"><span style="transform:scaleX(1.109);transform-origin:50% 50%">Y</span></div>
<div class="c" style="left:396px;top:340px;width:75px;height:17px;line-height:19px;color:#3333ff;text-align:left;padding-left:3px;"><span style="transform:scaleX(1.210);transform-origin:0 50%">AL 4019</span></div>
<div class="c" style="left:472px;top:340px;width:75px;height:17px;line-height:19px;color:#3333ff;text-align:left;padding-left:3px;"><span style="transform:scaleX(1.210);transform-origin:0 50%">AL 4019</span></div>
<div class="c" style="left:548px;top:340px;width:76px;height:17px;line-height:19px;color:#3333ff;text-align:left;padding-left:3px;"><span style="transform:scaleX(1.181);transform-origin:0 50%">GEPZ10731</span></div>
<div class="c" style="left:625px;top:340px;width:76px;height:17px;line-height:19px;color:#3333ff;text-align:left;padding-left:3px;"><span style="transform:scaleX(1.149);transform-origin:0 50%">MB1TRDWD</span></div>
<div class="c" style="left:702px;top:340px;width:86px;height:17px;line-height:19px;color:#3333ff;text-align:right;padding-right:3px;"><span style="transform:scaleX(1.284);transform-origin:100% 50%">48</span></div>
<div class="c" style="left:789px;top:340px;width:111px;height:17px;line-height:19px;color:#3333ff;text-align:right;padding-right:3px;"><span style="transform:scaleX(1.417);transform-origin:100% 50%">10/17/2020</span></div>
<div class="c" style="left:901px;top:340px;width:109px;height:17px;line-height:19px;color:#3333ff;text-align:left;padding-left:3px;"><span style="transform:scaleX(1.143);transform-origin:0 50%">C 1 2 EX SERVICE</span></div>
<div class="c" style="left:1011px;top:340px;width:75px;height:17px;line-height:19px;color:#3333ff;text-align:left;padding-left:3px;"><span style="transform:scaleX(1.208);transform-origin:0 50%">NAVI MUMBAI</span></div>
<div class="c" style="left:1087px;top:340px;width:84px;height:17px;line-height:19px;color:#3333ff;text-align:right;padding-right:3px;"><span style="transform:scaleX(1.284);transform-origin:100% 50%">410218</span></div>
<div class="c" style="left:1172px;top:340px;width:90px;height:17px;line-height:19px;color:#3333ff;text-align:right;padding-right:3px;"><span style="transform:scaleX(1.284);transform-origin:100% 50%">21212121</span></div>
<div class="c" style="left:1339px;top:340px;width:108px;height:17px;line-height:19px;color:#3333ff;text-align:right;padding-right:3px;"><span style="transform:scaleX(1.284);transform-origin:100% 50%">7738317682</span></div>
<div class="c" style="left:1448px;top:340px;width:75px;height:17px;line-height:19px;color:#3333ff;text-align:left;padding-left:3px;"><span style="transform:scaleX(1.176);transform-origin:0 50%">SUPRIYA &nbsp;S</span></div>
<div class="c" style="left:1524px;top:340px;width:75px;height:17px;line-height:19px;color:#3333ff;text-align:left;padding-left:3px;"><span style="transform:scaleX(1.150);transform-origin:0 50%">C 1 2 SERVICE</span></div>
<div class="c" style="left:1600px;top:340px;width:151px;height:17px;line-height:19px;color:#3333ff;text-align:left;padding-left:3px;"><span style="transform:scaleX(1.122);transform-origin:0 50%">KALAMBOLI</span></div>
<div class="c" style="left:1828px;top:340px;width:75px;height:17px;line-height:19px;color:#3333ff;text-align:left;padding-left:3px;"><span style="transform:scaleX(1.208);transform-origin:0 50%">NAVI MUMBAI</span></div>
<div class="rn" style="top:358px">29</div>
<div class="b" style="left:0;top:375px;width:33px;height:1px;background:#d0d0d0"></div>
<div class="c" style="left:34px;top:358px;width:168px;height:17px;line-height:19px;color:#ff00ff;text-align:left;padding-left:3px;"><span style="transform:scaleX(1.228);transform-origin:0 50%">UVMUM00038202454</span></div>
<div class="c" style="left:203px;top:358px;width:93px;height:17px;line-height:19px;color:#ff00ff;text-align:right;padding-right:3px;"><span style="transform:scaleX(1.284);transform-origin:100% 50%">185914245</span></div>
<div class="c" style="left:297px;top:358px;width:39px;height:17px;line-height:19px;color:#ff00ff;text-align:left;padding-left:3px;"><span style="transform:scaleX(1.075);transform-origin:0 50%">CV</span></div>
<div class="c" style="left:396px;top:358px;width:75px;height:17px;line-height:19px;color:#ff00ff;text-align:left;padding-left:3px;"><span style="transform:scaleX(1.189);transform-origin:0 50%">LPS 3518</span></div>
<div class="c" style="left:548px;top:358px;width:76px;height:17px;line-height:19px;color:#ff00ff;text-align:left;padding-left:3px;"><span style="transform:scaleX(1.252);transform-origin:0 50%">61B842841</span></div>
<div class="c" style="left:625px;top:358px;width:76px;height:17px;line-height:19px;color:#ff00ff;text-align:left;padding-left:3px;"><span style="transform:scaleX(1.234);transform-origin:0 50%">MAT503012</span></div>
<div class="c" style="left:702px;top:358px;width:86px;height:17px;line-height:19px;color:#ff00ff;text-align:right;padding-right:3px;"><span style="transform:scaleX(1.284);transform-origin:100% 50%">47</span></div>
<div class="c" style="left:789px;top:358px;width:111px;height:17px;line-height:19px;color:#ff00ff;text-align:right;padding-right:3px;"><span style="transform:scaleX(1.417);transform-origin:100% 50%">10/31/2018</span></div>
<div class="c" style="left:901px;top:358px;width:109px;height:17px;line-height:19px;color:#ff00ff;text-align:left;padding-left:3px;"><span style="transform:scaleX(1.234);transform-origin:0 50%">305 &nbsp;A WING &nbsp; H</span></div>
<div class="c" style="left:1011px;top:358px;width:75px;height:17px;line-height:19px;color:#ff00ff;text-align:left;padding-left:3px;"><span style="transform:scaleX(1.170);transform-origin:0 50%">MUMBAI</span></div>
<div class="c" style="left:1087px;top:358px;width:84px;height:17px;line-height:19px;color:#ff00ff;text-align:right;padding-right:3px;"><span style="transform:scaleX(1.284);transform-origin:100% 50%">400037</span></div>
<div class="c" style="left:1172px;top:358px;width:90px;height:17px;line-height:19px;color:#ff00ff;text-align:right;padding-right:3px;"><span style="transform:scaleX(1.284);transform-origin:100% 50%">21212121</span></div>
<div class="c" style="left:1339px;top:358px;width:108px;height:17px;line-height:19px;color:#ff00ff;text-align:right;padding-right:3px;"><span style="transform:scaleX(1.284);transform-origin:100% 50%">9820333927</span></div>
<div class="rn" style="top:376px">30</div>
<div class="b" style="left:0;top:393px;width:33px;height:1px;background:#d0d0d0"></div>
<div class="c" style="left:34px;top:376px;width:168px;height:17px;line-height:19px;color:#3333ff;text-align:left;padding-left:3px;"><span style="transform:scaleX(1.234);transform-origin:0 50%">LVMUM00037802560</span></div>
<div class="c" style="left:203px;top:376px;width:93px;height:17px;line-height:19px;color:#3333ff;text-align:right;padding-right:3px;"><span style="transform:scaleX(1.284);transform-origin:100% 50%">158675383</span></div>
<div class="c" style="left:297px;top:376px;width:39px;height:17px;line-height:19px;color:#3333ff;text-align:left;padding-left:3px;"><span style="transform:scaleX(1.075);transform-origin:0 50%">CV</span></div>
<div class="c" style="left:337px;top:376px;width:58px;height:17px;line-height:19px;color:#3333ff;text-align:center;"><span style="transform:scaleX(1.109);transform-origin:50% 50%">Y</span></div>
<div class="c" style="left:396px;top:376px;width:75px;height:17px;line-height:19px;color:#3333ff;text-align:left;padding-left:3px;"><span style="transform:scaleX(1.123);transform-origin:0 50%">EICHER PRO</span></div>
<div class="c" style="left:472px;top:376px;width:75px;height:17px;line-height:19px;color:#3333ff;text-align:left;padding-left:3px;"><span style="transform:scaleX(1.123);transform-origin:0 50%">EICHER PRO</span></div>
<div class="c" style="left:548px;top:376px;width:76px;height:17px;line-height:19px;color:#3333ff;text-align:left;padding-left:3px;"><span style="transform:scaleX(1.144);transform-origin:0 50%">E414CDJH</span></div>
<div class="c" style="left:625px;top:376px;width:76px;height:17px;line-height:19px;color:#3333ff;text-align:left;padding-left:3px;"><span style="transform:scaleX(1.103);transform-origin:0 50%">MC2B7ERC</span></div>
<div class="c" style="left:702px;top:376px;width:86px;height:17px;line-height:19px;color:#3333ff;text-align:right;padding-right:3px;"><span style="transform:scaleX(1.284);transform-origin:100% 50%">65</span></div>
<div class="c" style="left:789px;top:376px;width:111px;height:17px;line-height:19px;color:#3333ff;text-align:right;padding-right:3px;"><span style="transform:scaleX(1.434);transform-origin:100% 50%">9/17/2018</span></div>
<div class="c" style="left:901px;top:376px;width:109px;height:17px;line-height:19px;color:#3333ff;text-align:left;padding-left:3px;"><span style="transform:scaleX(1.168);transform-origin:0 50%">RM NO 1 FIRST</span></div>
<div class="c" style="left:1011px;top:376px;width:75px;height:17px;line-height:19px;color:#3333ff;text-align:left;padding-left:3px;"><span style="transform:scaleX(1.170);transform-origin:0 50%">MUMBAI</span></div>
<div class="c" style="left:1087px;top:376px;width:84px;height:17px;line-height:19px;color:#3333ff;text-align:right;padding-right:3px;"><span style="transform:scaleX(1.284);transform-origin:100% 50%">400068</span></div>
<div class="c" style="left:1172px;top:376px;width:90px;height:17px;line-height:19px;color:#3333ff;text-align:right;padding-right:3px;"><span style="transform:scaleX(1.284);transform-origin:100% 50%">21212121</span></div>
<div class="c" style="left:1339px;top:376px;width:108px;height:17px;line-height:19px;color:#3333ff;text-align:right;padding-right:3px;"><span style="transform:scaleX(1.284);transform-origin:100% 50%">9769077254</span></div>
<div class="c" style="left:1448px;top:376px;width:75px;height:17px;line-height:19px;color:#3333ff;text-align:left;padding-left:3px;"><span style="transform:scaleX(1.115);transform-origin:0 50%">MAHADEV</span></div>
<div class="c" style="left:1524px;top:376px;width:75px;height:17px;line-height:19px;color:#3333ff;text-align:left;padding-left:3px;"><span style="transform:scaleX(1.162);transform-origin:0 50%">RM NO 1</span></div>
<div class="c" style="left:1600px;top:376px;width:75px;height:17px;line-height:19px;color:#3333ff;text-align:left;padding-left:3px;"><span style="transform:scaleX(1.127);transform-origin:0 50%">FIRST FLOOR</span></div>
<div class="c" style="left:1676px;top:376px;width:151px;height:17px;line-height:19px;color:#3333ff;text-align:left;padding-left:3px;"><span style="transform:scaleX(1.126);transform-origin:0 50%">GORE CHAWL KETKIPADA</span></div>
<div class="c" style="left:1828px;top:376px;width:75px;height:17px;line-height:19px;color:#3333ff;text-align:left;padding-left:3px;"><span style="transform:scaleX(1.170);transform-origin:0 50%">MUMBAI</span></div>
<div class="rn" style="top:394px">31</div>
<div class="b" style="left:0;top:411px;width:33px;height:1px;background:#d0d0d0"></div>
<div class="c" style="left:34px;top:394px;width:168px;height:17px;line-height:19px;color:#ff00ff;text-align:left;padding-left:3px;"><span style="transform:scaleX(1.217);transform-origin:0 50%">LQTNE00038207312</span></div>
<div class="c" style="left:203px;top:394px;width:93px;height:17px;line-height:19px;color:#ff00ff;text-align:right;padding-right:3px;"><span style="transform:scaleX(1.284);transform-origin:100% 50%">135587929</span></div>
<div class="c" style="left:297px;top:394px;width:39px;height:17px;line-height:19px;color:#ff00ff;text-align:left;padding-left:3px;"><span style="transform:scaleX(1.017);transform-origin:0 50%">CE</span></div>
<div class="c" style="left:337px;top:394px;width:58px;height:17px;line-height:19px;color:#ff00ff;text-align:center;"><span style="transform:scaleX(1.109);transform-origin:50% 50%">Y</span></div>
<div class="c" style="left:396px;top:394px;width:75px;height:17px;line-height:19px;color:#ff00ff;text-align:left;padding-left:3px;"><span style="transform:scaleX(1.269);transform-origin:0 50%">DIGMAX II</span></div>
<div class="c" style="left:472px;top:394px;width:75px;height:17px;line-height:19px;color:#ff00ff;text-align:left;padding-left:3px;"><span style="transform:scaleX(1.269);transform-origin:0 50%">DIGMAX II</span></div>
<div class="c" style="left:548px;top:394px;width:76px;height:17px;line-height:19px;color:#ff00ff;text-align:left;padding-left:3px;"><span style="transform:scaleX(1.267);transform-origin:0 50%">4H3205181</span></div>
<div class="c" style="left:625px;top:394px;width:76px;height:17px;line-height:19px;color:#ff00ff;text-align:left;padding-left:3px;"><span style="transform:scaleX(1.183);transform-origin:0 50%">ECE076101</span></div>
<div class="c" style="left:702px;top:394px;width:86px;height:17px;line-height:19px;color:#ff00ff;text-align:right;padding-right:3px;"><span style="transform:scaleX(1.284);transform-origin:100% 50%">47</span></div>
<div class="c" style="left:789px;top:394px;width:111px;height:17px;line-height:19px;color:#ff00ff;text-align:right;padding-right:3px;"><span style="transform:scaleX(1.417);transform-origin:100% 50%">10/31/2018</span></div>
<div class="c" style="left:901px;top:394px;width:109px;height:17px;line-height:19px;color:#ff00ff;text-align:left;padding-left:3px;"><span style="transform:scaleX(1.122);transform-origin:0 50%">53 SABE GAON</span></div>
<div class="c" style="left:1011px;top:394px;width:75px;height:17px;line-height:19px;color:#ff00ff;text-align:left;padding-left:3px;"><span style="transform:scaleX(1.115);transform-origin:0 50%">THANE</span></div>
<div class="c" style="left:1087px;top:394px;width:84px;height:17px;line-height:19px;color:#ff00ff;text-align:right;padding-right:3px;"><span style="transform:scaleX(1.284);transform-origin:100% 50%">400612</span></div>
<div class="c" style="left:1172px;top:394px;width:90px;height:17px;line-height:19px;color:#ff00ff;text-align:right;padding-right:3px;"><span style="transform:scaleX(1.284);transform-origin:100% 50%">21212121</span></div>
<div class="c" style="left:1339px;top:394px;width:108px;height:17px;line-height:19px;color:#ff00ff;text-align:right;padding-right:3px;"><span style="transform:scaleX(1.284);transform-origin:100% 50%">9223336678</span></div>
<div class="c" style="left:1448px;top:394px;width:75px;height:17px;line-height:19px;color:#ff00ff;text-align:left;padding-left:3px;"><span style="transform:scaleX(1.093);transform-origin:0 50%">PRAKASH</span></div>
<div class="c" style="left:1524px;top:394px;width:75px;height:17px;line-height:19px;color:#ff00ff;text-align:left;padding-left:3px;"><span style="transform:scaleX(1.124);transform-origin:0 50%">53 SABE ROAD</span></div>
<div class="c" style="left:1600px;top:394px;width:227px;height:17px;line-height:19px;color:#ff00ff;text-align:left;padding-left:3px;"><span style="transform:scaleX(1.129);transform-origin:0 50%">SABE GAON DIVA EAST THANE</span></div>
<div class="c" style="left:1828px;top:394px;width:75px;height:17px;line-height:19px;color:#ff00ff;text-align:left;padding-left:3px;"><span style="transform:scaleX(1.115);transform-origin:0 50%">THANE</span></div>
<div class="rn" style="top:412px">32</div>
<div class="b" style="left:0;top:429px;width:33px;height:1px;background:#d0d0d0"></div>
<div class="c" style="left:34px;top:412px;width:168px;height:17px;line-height:19px;color:#3333ff;text-align:left;padding-left:3px;"><span style="transform:scaleX(1.234);transform-origin:0 50%">LVMUM00042721372</span></div>
<div class="c" style="left:203px;top:412px;width:93px;height:17px;line-height:19px;color:#3333ff;text-align:right;padding-right:3px;"><span style="transform:scaleX(1.284);transform-origin:100% 50%">152314227</span></div>
<div class="c" style="left:297px;top:412px;width:39px;height:17px;line-height:19px;color:#3333ff;text-align:left;padding-left:3px;"><span style="transform:scaleX(1.075);transform-origin:0 50%">CV</span></div>
<div class="c" style="left:337px;top:412px;width:58px;height:17px;line-height:19px;color:#3333ff;text-align:center;"><span style="transform:scaleX(1.109);transform-origin:50% 50%">Y</span></div>
<div class="c" style="left:396px;top:412px;width:75px;height:17px;line-height:19px;color:#3333ff;text-align:left;padding-left:3px;"><span style="transform:scaleX(1.122);transform-origin:0 50%">BOLERO PIK</span></div>
<div class="c" style="left:472px;top:412px;width:75px;height:17px;line-height:19px;color:#3333ff;text-align:left;padding-left:3px;"><span style="transform:scaleX(1.122);transform-origin:0 50%">BOLERO PIK</span></div>
<div class="c" style="left:548px;top:412px;width:76px;height:17px;line-height:19px;color:#3333ff;text-align:left;padding-left:3px;"><span style="transform:scaleX(1.205);transform-origin:0 50%">TNL1M7321</span></div>
<div class="c" style="left:625px;top:412px;width:76px;height:17px;line-height:19px;color:#3333ff;text-align:left;padding-left:3px;"><span style="transform:scaleX(1.152);transform-origin:0 50%">MA1ZU2TNK</span></div>
<div class="c" style="left:702px;top:412px;width:86px;height:17px;line-height:19px;color:#3333ff;text-align:right;padding-right:3px;"><span style="transform:scaleX(1.284);transform-origin:100% 50%">60</span></div>
<div class="c" style="left:789px;top:412px;width:111px;height:17px;line-height:19px;color:#3333ff;text-align:right;padding-right:3px;"><span style="transform:scaleX(1.417);transform-origin:100% 50%">12/22/2020</span></div>
<div class="c" style="left:901px;top:412px;width:437px;height:17px;line-height:19px;color:#3333ff;text-align:left;padding-left:3px;"><span style="transform:scaleX(1.178);transform-origin:0 50%">HOUSE NO 1851 LALITA VIHAR A WING &nbsp; FLAT NO 301 VANGAON</span></div>
<div class="c" style="left:1339px;top:412px;width:108px;height:17px;line-height:19px;color:#3333ff;text-align:right;padding-right:3px;"><span style="transform:scaleX(1.284);transform-origin:100% 50%">9834000310</span></div>
<div class="c" style="left:1448px;top:412px;width:75px;height:17px;line-height:19px;color:#3333ff;text-align:left;padding-left:3px;"><span style="transform:scaleX(1.193);transform-origin:0 50%">ARVINDSINGH</span></div>
<div class="c" style="left:1524px;top:412px;width:75px;height:17px;line-height:19px;color:#3333ff;text-align:left;padding-left:3px;"><span style="transform:scaleX(1.137);transform-origin:0 50%">HOUSE NO 1</span></div>
<div class="c" style="left:1600px;top:412px;width:75px;height:17px;line-height:19px;color:#3333ff;text-align:left;padding-left:3px;"><span style="transform:scaleX(1.175);transform-origin:0 50%">FLAT NO 301</span></div>
<div class="c" style="left:1676px;top:412px;width:151px;height:17px;line-height:19px;color:#3333ff;text-align:left;padding-left:3px;"><span style="transform:scaleX(1.137);transform-origin:0 50%">DIST THANE PALGHAR</span></div>
<div class="c" style="left:1828px;top:412px;width:75px;height:17px;line-height:19px;color:#3333ff;text-align:left;padding-left:3px;"><span style="transform:scaleX(1.103);transform-origin:0 50%">PALGHAR</span></div>
<div class="rn" style="top:430px">33</div>
<div class="b" style="left:0;top:447px;width:33px;height:1px;background:#d0d0d0"></div>
<div class="c" style="left:34px;top:430px;width:168px;height:17px;line-height:19px;color:#3333ff;text-align:left;padding-left:3px;"><span style="transform:scaleX(1.232);transform-origin:0 50%">UVNMU00041020231</span></div>
<div class="c" style="left:203px;top:430px;width:93px;height:17px;line-height:19px;color:#3333ff;text-align:right;padding-right:3px;"><span style="transform:scaleX(1.284);transform-origin:100% 50%">135231599</span></div>
<div class="c" style="left:297px;top:430px;width:39px;height:17px;line-height:19px;color:#3333ff;text-align:left;padding-left:3px;"><span style="transform:scaleX(1.075);transform-origin:0 50%">CV</span></div>
<div class="c" style="left:337px;top:430px;width:58px;height:17px;line-height:19px;color:#3333ff;text-align:center;"><span style="transform:scaleX(1.109);transform-origin:50% 50%">Y</span></div>
<div class="c" style="left:396px;top:430px;width:75px;height:17px;line-height:19px;color:#3333ff;text-align:left;padding-left:3px;"><span style="transform:scaleX(1.210);transform-origin:0 50%">AL 4019</span></div>
<div class="c" style="left:472px;top:430px;width:75px;height:17px;line-height:19px;color:#3333ff;text-align:left;padding-left:3px;"><span style="transform:scaleX(1.210);transform-origin:0 50%">AL 4019</span></div>
<div class="c" style="left:548px;top:430px;width:76px;height:17px;line-height:19px;color:#3333ff;text-align:left;padding-left:3px;"><span style="transform:scaleX(1.221);transform-origin:0 50%">DTPZ11451</span></div>
<div class="c" style="left:625px;top:430px;width:76px;height:17px;line-height:19px;color:#3333ff;text-align:left;padding-left:3px;"><span style="transform:scaleX(1.149);transform-origin:0 50%">MB1TRDWD</span></div>
<div class="c" style="left:702px;top:430px;width:86px;height:17px;line-height:19px;color:#3333ff;text-align:right;padding-right:3px;"><span style="transform:scaleX(1.284);transform-origin:100% 50%">43</span></div>
<div class="c" style="left:789px;top:430px;width:111px;height:17px;line-height:19px;color:#3333ff;text-align:right;padding-right:3px;"><span style="transform:scaleX(1.417);transform-origin:100% 50%">10/31/2019</span></div>
<div class="c" style="left:901px;top:430px;width:109px;height:17px;line-height:19px;color:#3333ff;text-align:left;padding-left:3px;"><span style="transform:scaleX(1.113);transform-origin:0 50%">C 434 STEEL CHAMBER</span></div>
<div class="c" style="left:1011px;top:430px;width:75px;height:17px;line-height:19px;color:#3333ff;text-align:left;padding-left:3px;"><span style="transform:scaleX(1.208);transform-origin:0 50%">NAVI MUMBAI</span></div>
<div class="c" style="left:1087px;top:430px;width:84px;height:17px;line-height:19px;color:#3333ff;text-align:right;padding-right:3px;"><span style="transform:scaleX(1.284);transform-origin:100% 50%">410218</span></div>
<div class="c" style="left:1172px;top:430px;width:90px;height:17px;line-height:19px;color:#3333ff;text-align:right;padding-right:3px;"><span style="transform:scaleX(1.284);transform-origin:100% 50%">21212121</span></div>
<div class="c" style="left:1339px;top:430px;width:108px;height:17px;line-height:19px;color:#3333ff;text-align:right;padding-right:3px;"><span style="transform:scaleX(1.284);transform-origin:100% 50%">7738317682</span></div>
<div class="c" style="left:1448px;top:430px;width:75px;height:17px;line-height:19px;color:#3333ff;text-align:left;padding-left:3px;"><span style="transform:scaleX(1.176);transform-origin:0 50%">SUPRIYA &nbsp;S</span></div>
<div class="c" style="left:1524px;top:430px;width:303px;height:17px;line-height:19px;color:#3333ff;text-align:left;padding-left:3px;"><span style="transform:scaleX(1.119);transform-origin:0 50%">C 434 STEEL CHAMBER TOWER KALAMBOLI</span></div>
<div class="c" style="left:1828px;top:430px;width:75px;height:17px;line-height:19px;color:#3333ff;text-align:left;padding-left:3px;"><span style="transform:scaleX(1.208);transform-origin:0 50%">NAVI MUMBAI</span></div>
<div class="rn" style="top:448px">34</div>
<div class="b" style="left:0;top:465px;width:33px;height:1px;background:#d0d0d0"></div>
<div class="c" style="left:34px;top:448px;width:168px;height:17px;line-height:19px;color:#ff00ff;text-align:left;padding-left:3px;"><span style="transform:scaleX(1.237);transform-origin:0 50%">LVNMU00037359394</span></div>
<div class="c" style="left:203px;top:448px;width:93px;height:17px;line-height:19px;color:#ff00ff;text-align:right;padding-right:3px;"><span style="transform:scaleX(1.284);transform-origin:100% 50%">108007067</span></div>
<div class="c" style="left:297px;top:448px;width:39px;height:17px;line-height:19px;color:#ff00ff;text-align:left;padding-left:3px;"><span style="transform:scaleX(1.075);transform-origin:0 50%">CV</span></div>
<div class="c" style="left:337px;top:448px;width:58px;height:17px;line-height:19px;color:#ff00ff;text-align:center;"><span style="transform:scaleX(1.109);transform-origin:50% 50%">Y</span></div>
<div class="c" style="left:396px;top:448px;width:75px;height:17px;line-height:19px;color:#ff00ff;text-align:left;padding-left:3px;"><span style="transform:scaleX(1.210);transform-origin:0 50%">AL 3518</span></div>
<div class="c" style="left:472px;top:448px;width:75px;height:17px;line-height:19px;color:#ff00ff;text-align:left;padding-left:3px;"><span style="transform:scaleX(1.210);transform-origin:0 50%">AL 3518</span></div>
<div class="c" style="left:548px;top:448px;width:76px;height:17px;line-height:19px;color:#ff00ff;text-align:left;padding-left:3px;"><span style="transform:scaleX(1.203);transform-origin:0 50%">JEPZ119441</span></div>
<div class="c" style="left:625px;top:448px;width:76px;height:17px;line-height:19px;color:#ff00ff;text-align:left;padding-left:3px;"><span style="transform:scaleX(1.119);transform-origin:0 50%">MB1TLCHD</span></div>
<div class="c" style="left:702px;top:448px;width:86px;height:17px;line-height:19px;color:#ff00ff;text-align:right;padding-right:3px;"><span style="transform:scaleX(1.284);transform-origin:100% 50%">47</span></div>
<div class="c" style="left:789px;top:448px;width:111px;height:17px;line-height:19px;color:#ff00ff;text-align:right;padding-right:3px;"><span style="transform:scaleX(1.434);transform-origin:100% 50%">5/19/2018</span></div>
<div class="c" style="left:901px;top:448px;width:109px;height:17px;line-height:19px;color:#ff00ff;text-align:left;padding-left:3px;"><span style="transform:scaleX(1.146);transform-origin:0 50%">SOMESHWAR MANDIR</span></div>
<div class="c" style="left:1011px;top:448px;width:75px;height:17px;line-height:19px;color:#ff00ff;text-align:left;padding-left:3px;"><span style="transform:scaleX(1.170);transform-origin:0 50%">MUMBAI</span></div>
<div class="c" style="left:1087px;top:448px;width:84px;height:17px;line-height:19px;color:#ff00ff;text-align:right;padding-right:3px;"><span style="transform:scaleX(1.284);transform-origin:100% 50%">400079</span></div>
<div class="c" style="left:1172px;top:448px;width:90px;height:17px;line-height:19px;color:#ff00ff;text-align:right;padding-right:3px;"><span style="transform:scaleX(1.284);transform-origin:100% 50%">21212121</span></div>
<div class="c" style="left:1339px;top:448px;width:108px;height:17px;line-height:19px;color:#ff00ff;text-align:right;padding-right:3px;"><span style="transform:scaleX(1.284);transform-origin:100% 50%">9930559543</span></div>
<div class="rn" style="top:466px">35</div>
<div class="b" style="left:0;top:483px;width:33px;height:1px;background:#d0d0d0"></div>
<div class="c" style="left:34px;top:466px;width:168px;height:17px;line-height:19px;color:#3333ff;text-align:left;padding-left:3px;"><span style="transform:scaleX(1.234);transform-origin:0 50%">LVMUM00036991605</span></div>
<div class="c" style="left:203px;top:466px;width:93px;height:17px;line-height:19px;color:#3333ff;text-align:right;padding-right:3px;"><span style="transform:scaleX(1.284);transform-origin:100% 50%">104031229</span></div>
<div class="c" style="left:297px;top:466px;width:39px;height:17px;line-height:19px;color:#3333ff;text-align:left;padding-left:3px;"><span style="transform:scaleX(1.075);transform-origin:0 50%">CV</span></div>
<div class="c" style="left:337px;top:466px;width:58px;height:17px;line-height:19px;color:#3333ff;text-align:center;"><span style="transform:scaleX(1.109);transform-origin:50% 50%">Y</span></div>
<div class="c" style="left:396px;top:466px;width:75px;height:17px;line-height:19px;color:#3333ff;text-align:left;padding-left:3px;"><span style="transform:scaleX(1.185);transform-origin:0 50%">AL TF 1812</span></div>
<div class="c" style="left:472px;top:466px;width:75px;height:17px;line-height:19px;color:#3333ff;text-align:left;padding-left:3px;"><span style="transform:scaleX(1.185);transform-origin:0 50%">AL TF 1812</span></div>
<div class="c" style="left:548px;top:466px;width:76px;height:17px;line-height:19px;color:#3333ff;text-align:left;padding-left:3px;"><span style="transform:scaleX(1.136);transform-origin:0 50%">DUMMY</span></div>
<div class="c" style="left:625px;top:466px;width:76px;height:17px;line-height:19px;color:#3333ff;text-align:left;padding-left:3px;"><span style="transform:scaleX(1.136);transform-origin:0 50%">DUMMY</span></div>
<div class="c" style="left:702px;top:466px;width:86px;height:17px;line-height:19px;color:#3333ff;text-align:right;padding-right:3px;"><span style="transform:scaleX(1.284);transform-origin:100% 50%">58</span></div>
<div class="c" style="left:789px;top:466px;width:111px;height:17px;line-height:19px;color:#3333ff;text-align:right;padding-right:3px;"><span style="transform:scaleX(1.434);transform-origin:100% 50%">1/30/2018</span></div>
<div class="c" style="left:901px;top:466px;width:109px;height:17px;line-height:19px;color:#3333ff;text-align:left;padding-left:3px;"><span style="transform:scaleX(1.148);transform-origin:0 50%">14 3RD FLOOR</span></div>
<div class="c" style="left:1011px;top:466px;width:75px;height:17px;line-height:19px;color:#3333ff;text-align:left;padding-left:3px;"><span style="transform:scaleX(1.170);transform-origin:0 50%">MUMBAI</span></div>
<div class="c" style="left:1087px;top:466px;width:84px;height:17px;line-height:19px;color:#3333ff;text-align:right;padding-right:3px;"><span style="transform:scaleX(1.284);transform-origin:100% 50%">400031</span></div>
<div class="c" style="left:1172px;top:466px;width:90px;height:17px;line-height:19px;color:#3333ff;text-align:right;padding-right:3px;"><span style="transform:scaleX(1.284);transform-origin:100% 50%">21212121</span></div>
<div class="c" style="left:1339px;top:466px;width:108px;height:17px;line-height:19px;color:#3333ff;text-align:right;padding-right:3px;"><span style="transform:scaleX(1.284);transform-origin:100% 50%">9653171885</span></div>
<div class="c" style="left:1448px;top:466px;width:75px;height:17px;line-height:19px;color:#3333ff;text-align:left;padding-left:3px;"><span style="transform:scaleX(1.136);transform-origin:0 50%">SAMBHAJI</span></div>
<div class="c" style="left:1524px;top:466px;width:75px;height:17px;line-height:19px;color:#3333ff;text-align:left;padding-left:3px;"><span style="transform:scaleX(1.229);transform-origin:0 50%">34 14 3RD</span></div>
<div class="c" style="left:1600px;top:466px;width:227px;height:17px;line-height:19px;color:#3333ff;text-align:left;padding-left:3px;"><span style="transform:scaleX(1.121);transform-origin:0 50%">NAIGAON CROSS ROAD</span></div>
<div class="c" style="left:1828px;top:466px;width:75px;height:17px;line-height:19px;color:#3333ff;text-align:left;padding-left:3px;"><span style="transform:scaleX(1.170);transform-origin:0 50%">MUMBAI</span></div>
<div class="rn" style="top:484px">36</div>
<div class="b" style="left:0;top:501px;width:33px;height:1px;background:#d0d0d0"></div>
<div class="c" style="left:34px;top:484px;width:168px;height:17px;line-height:19px;color:#3333ff;text-align:left;padding-left:3px;"><span style="transform:scaleX(1.228);transform-origin:0 50%">UVMUM00038270905</span></div>
<div class="c" style="left:203px;top:484px;width:93px;height:17px;line-height:19px;color:#3333ff;text-align:right;padding-right:3px;"><span style="transform:scaleX(1.284);transform-origin:100% 50%">99243154</span></div>
<div class="c" style="left:297px;top:484px;width:39px;height:17px;line-height:19px;color:#3333ff;text-align:left;padding-left:3px;"><span style="transform:scaleX(1.075);transform-origin:0 50%">CV</span></div>
<div class="c" style="left:337px;top:484px;width:58px;height:17px;line-height:19px;color:#3333ff;text-align:center;"><span style="transform:scaleX(1.109);transform-origin:50% 50%">Y</span></div>
<div class="c" style="left:396px;top:484px;width:75px;height:17px;line-height:19px;color:#3333ff;text-align:left;padding-left:3px;"><span style="transform:scaleX(1.189);transform-origin:0 50%">LPS 4018</span></div>
<div class="c" style="left:472px;top:484px;width:75px;height:17px;line-height:19px;color:#3333ff;text-align:left;padding-left:3px;"><span style="transform:scaleX(1.189);transform-origin:0 50%">LPS 4018</span></div>
<div class="c" style="left:548px;top:484px;width:76px;height:17px;line-height:19px;color:#3333ff;text-align:left;padding-left:3px;"><span style="transform:scaleX(1.248);transform-origin:0 50%">B5918032</span></div>
<div class="c" style="left:625px;top:484px;width:76px;height:17px;line-height:19px;color:#3333ff;text-align:left;padding-left:3px;"><span style="transform:scaleX(1.234);transform-origin:0 50%">MAT447221</span></div>
<div class="c" style="left:702px;top:484px;width:86px;height:17px;line-height:19px;color:#3333ff;text-align:right;padding-right:3px;"><span style="transform:scaleX(1.284);transform-origin:100% 50%">47</span></div>
<div class="c" style="left:789px;top:484px;width:111px;height:17px;line-height:19px;color:#3333ff;text-align:right;padding-right:3px;"><span style="transform:scaleX(1.433);transform-origin:100% 50%">11/27/2018</span></div>
<div class="c" style="left:901px;top:484px;width:109px;height:17px;line-height:19px;color:#3333ff;text-align:left;padding-left:3px;"><span style="transform:scaleX(1.102);transform-origin:0 50%">RAMNAGAR POST</span></div>
<div class="c" style="left:1011px;top:484px;width:75px;height:17px;line-height:19px;color:#3333ff;text-align:left;padding-left:3px;"><span style="transform:scaleX(1.117);transform-origin:0 50%">PRATAPGARH</span></div>
<div class="c" style="left:1087px;top:484px;width:84px;height:17px;line-height:19px;color:#3333ff;text-align:right;padding-right:3px;"><span style="transform:scaleX(1.284);transform-origin:100% 50%">230402</span></div>
<div class="c" style="left:1172px;top:484px;width:90px;height:17px;line-height:19px;color:#3333ff;text-align:right;padding-right:3px;"><span style="transform:scaleX(1.284);transform-origin:100% 50%">212121</span></div>
<div class="c" style="left:1448px;top:484px;width:75px;height:17px;line-height:19px;color:#3333ff;text-align:left;padding-left:3px;"><span style="transform:scaleX(1.138);transform-origin:0 50%">SHAFFIQA</span></div>
<div class="c" style="left:1524px;top:484px;width:75px;height:17px;line-height:19px;color:#3333ff;text-align:left;padding-left:3px;"><span style="transform:scaleX(1.243);transform-origin:0 50%">305 A WING</span></div>
<div class="c" style="left:1600px;top:484px;width:227px;height:17px;line-height:19px;color:#3333ff;text-align:left;padding-left:3px;"><span style="transform:scaleX(1.155);transform-origin:0 50%">HEIGHT BHAKTI PARK IMAX THEATRE</span></div>
<div class="c" style="left:1828px;top:484px;width:75px;height:17px;line-height:19px;color:#3333ff;text-align:left;padding-left:3px;"><span style="transform:scaleX(1.170);transform-origin:0 50%">MUMBAI</span></div>
<div class="rn" style="top:502px">37</div>
<div class="b" style="left:0;top:519px;width:33px;height:1px;background:#d0d0d0"></div>
<div class="c" style="left:34px;top:502px;width:168px;height:17px;line-height:19px;color:#3333ff;text-align:left;padding-left:3px;"><span style="transform:scaleX(1.234);transform-origin:0 50%">LVMUM00037994234</span></div>
<div class="c" style="left:203px;top:502px;width:93px;height:17px;line-height:19px;color:#3333ff;text-align:right;padding-right:3px;"><span style="transform:scaleX(1.284);transform-origin:100% 50%">138937798</span></div>
<div class="c" style="left:297px;top:502px;width:39px;height:17px;line-height:19px;color:#3333ff;text-align:left;padding-left:3px;"><span style="transform:scaleX(1.075);transform-origin:0 50%">CV</span></div>
<div class="c" style="left:337px;top:502px;width:58px;height:17px;line-height:19px;color:#3333ff;text-align:center;"><span style="transform:scaleX(1.109);transform-origin:50% 50%">Y</span></div>
<div class="c" style="left:396px;top:502px;width:75px;height:17px;line-height:19px;color:#3333ff;text-align:left;padding-left:3px;"><span style="transform:scaleX(1.123);transform-origin:0 50%">EICHER PRO</span></div>
<div class="c" style="left:472px;top:502px;width:75px;height:17px;line-height:19px;color:#3333ff;text-align:left;padding-left:3px;"><span style="transform:scaleX(1.123);transform-origin:0 50%">EICHER PRO</span></div>
<div class="c" style="left:548px;top:502px;width:76px;height:17px;line-height:19px;color:#3333ff;text-align:left;padding-left:3px;"><span style="transform:scaleX(1.131);transform-origin:0 50%">E414CDJK</span></div>
<div class="c" style="left:625px;top:502px;width:76px;height:17px;line-height:19px;color:#3333ff;text-align:left;padding-left:3px;"><span style="transform:scaleX(1.122);transform-origin:0 50%">MC2F7HRC</span></div>
<div class="c" style="left:702px;top:502px;width:86px;height:17px;line-height:19px;color:#3333ff;text-align:right;padding-right:3px;"><span style="transform:scaleX(1.284);transform-origin:100% 50%">55</span></div>
<div class="c" style="left:789px;top:502px;width:111px;height:17px;line-height:19px;color:#3333ff;text-align:right;padding-right:3px;"><span style="transform:scaleX(1.417);transform-origin:100% 50%">10/19/2018</span></div>
<div class="c" style="left:901px;top:502px;width:109px;height:17px;line-height:19px;color:#3333ff;text-align:left;padding-left:3px;"><span style="transform:scaleX(1.099);transform-origin:0 50%">GANESH NAGAR</span></div>
<div class="c" style="left:1011px;top:502px;width:75px;height:17px;line-height:19px;color:#3333ff;text-align:left;padding-left:3px;"><span style="transform:scaleX(1.170);transform-origin:0 50%">MUMBAI</span></div>
<div class="c" style="left:1087px;top:502px;width:84px;height:17px;line-height:19px;color:#3333ff;text-align:right;padding-right:3px;"><span style="transform:scaleX(1.284);transform-origin:100% 50%">400067</span></div>
<div class="c" style="left:1172px;top:502px;width:90px;height:17px;line-height:19px;color:#3333ff;text-align:right;padding-right:3px;"><span style="transform:scaleX(1.284);transform-origin:100% 50%">21212121</span></div>
<div class="c" style="left:1448px;top:502px;width:75px;height:17px;line-height:19px;color:#3333ff;text-align:left;padding-left:3px;"><span style="transform:scaleX(1.143);transform-origin:0 50%">MOHD &nbsp;MO</span></div>
<div class="c" style="left:1524px;top:502px;width:75px;height:17px;line-height:19px;color:#3333ff;text-align:left;padding-left:3px;"><span style="transform:scaleX(1.149);transform-origin:0 50%">R NO C 1 M</span></div>
<div class="c" style="left:1600px;top:502px;width:75px;height:17px;line-height:19px;color:#3333ff;text-align:left;padding-left:3px;"><span style="transform:scaleX(1.154);transform-origin:0 50%">PLOT NO 61</span></div>
<div class="c" style="left:1676px;top:502px;width:151px;height:17px;line-height:19px;color:#3333ff;text-align:left;padding-left:3px;"><span style="transform:scaleX(1.170);transform-origin:0 50%">MALWANI MHADA</span></div>
<div class="c" style="left:1828px;top:502px;width:75px;height:17px;line-height:19px;color:#3333ff;text-align:left;padding-left:3px;"><span style="transform:scaleX(1.170);transform-origin:0 50%">MUMBAI</span></div>
<div class="rn" style="top:520px">39</div>
<div class="b" style="left:0;top:537px;width:33px;height:1px;background:#d0d0d0"></div>
<div class="c" style="left:34px;top:520px;width:168px;height:17px;line-height:19px;color:#3333ff;text-align:left;padding-left:3px;"><span style="transform:scaleX(1.234);transform-origin:0 50%">LVMUM00036991577</span></div>
<div class="c" style="left:203px;top:520px;width:93px;height:17px;line-height:19px;color:#3333ff;text-align:right;padding-right:3px;"><span style="transform:scaleX(1.284);transform-origin:100% 50%">104031229</span></div>
<div class="c" style="left:297px;top:520px;width:39px;height:17px;line-height:19px;color:#3333ff;text-align:left;padding-left:3px;"><span style="transform:scaleX(1.075);transform-origin:0 50%">CV</span></div>
<div class="c" style="left:337px;top:520px;width:58px;height:17px;line-height:19px;color:#3333ff;text-align:center;"><span style="transform:scaleX(1.109);transform-origin:50% 50%">Y</span></div>
<div class="c" style="left:396px;top:520px;width:75px;height:17px;line-height:19px;color:#3333ff;text-align:left;padding-left:3px;"><span style="transform:scaleX(1.185);transform-origin:0 50%">AL TF 1812</span></div>
<div class="c" style="left:472px;top:520px;width:75px;height:17px;line-height:19px;color:#3333ff;text-align:left;padding-left:3px;"><span style="transform:scaleX(1.185);transform-origin:0 50%">AL TF 1812</span></div>
<div class="c" style="left:548px;top:520px;width:76px;height:17px;line-height:19px;color:#3333ff;text-align:left;padding-left:3px;"><span style="transform:scaleX(1.136);transform-origin:0 50%">DUMMY</span></div>
<div class="c" style="left:625px;top:520px;width:76px;height:17px;line-height:19px;color:#3333ff;text-align:left;padding-left:3px;"><span style="transform:scaleX(1.136);transform-origin:0 50%">DUMMY</span></div>
<div class="c" style="left:702px;top:520px;width:86px;height:17px;line-height:19px;color:#3333ff;text-align:right;padding-right:3px;"><span style="transform:scaleX(1.284);transform-origin:100% 50%">65</span></div>
<div class="c" style="left:789px;top:520px;width:111px;height:17px;line-height:19px;color:#3333ff;text-align:right;padding-right:3px;"><span style="transform:scaleX(1.434);transform-origin:100% 50%">1/30/2018</span></div>
<div class="c" style="left:901px;top:520px;width:109px;height:17px;line-height:19px;color:#3333ff;text-align:left;padding-left:3px;"><span style="transform:scaleX(1.148);transform-origin:0 50%">14 3RD FLOOR</span></div>
<div class="c" style="left:1011px;top:520px;width:75px;height:17px;line-height:19px;color:#3333ff;text-align:left;padding-left:3px;"><span style="transform:scaleX(1.170);transform-origin:0 50%">MUMBAI</span></div>
<div class="c" style="left:1087px;top:520px;width:84px;height:17px;line-height:19px;color:#3333ff;text-align:right;padding-right:3px;"><span style="transform:scaleX(1.284);transform-origin:100% 50%">400031</span></div>
<div class="c" style="left:1172px;top:520px;width:90px;height:17px;line-height:19px;color:#3333ff;text-align:right;padding-right:3px;"><span style="transform:scaleX(1.284);transform-origin:100% 50%">21212121</span></div>
<div class="c" style="left:1339px;top:520px;width:108px;height:17px;line-height:19px;color:#3333ff;text-align:right;padding-right:3px;"><span style="transform:scaleX(1.284);transform-origin:100% 50%">9653171885</span></div>
<div class="c" style="left:1448px;top:520px;width:75px;height:17px;line-height:19px;color:#3333ff;text-align:left;padding-left:3px;"><span style="transform:scaleX(1.136);transform-origin:0 50%">SAMBHAJI</span></div>
<div class="c" style="left:1524px;top:520px;width:75px;height:17px;line-height:19px;color:#3333ff;text-align:left;padding-left:3px;"><span style="transform:scaleX(1.229);transform-origin:0 50%">34 14 3RD</span></div>
<div class="c" style="left:1600px;top:520px;width:227px;height:17px;line-height:19px;color:#3333ff;text-align:left;padding-left:3px;"><span style="transform:scaleX(1.121);transform-origin:0 50%">NAIGAON CROSS ROAD</span></div>
<div class="c" style="left:1828px;top:520px;width:75px;height:17px;line-height:19px;color:#3333ff;text-align:left;padding-left:3px;"><span style="transform:scaleX(1.170);transform-origin:0 50%">MUMBAI</span></div>
<div class="rn" style="top:538px">40</div>
<div class="b" style="left:0;top:555px;width:33px;height:1px;background:#d0d0d0"></div>
<div class="c" style="left:34px;top:538px;width:168px;height:17px;line-height:19px;color:#3333ff;text-align:left;padding-left:3px;"><span style="transform:scaleX(1.237);transform-origin:0 50%">LVNMU00037359384</span></div>
<div class="c" style="left:203px;top:538px;width:93px;height:17px;line-height:19px;color:#3333ff;text-align:right;padding-right:3px;"><span style="transform:scaleX(1.284);transform-origin:100% 50%">108007067</span></div>
<div class="c" style="left:297px;top:538px;width:39px;height:17px;line-height:19px;color:#3333ff;text-align:left;padding-left:3px;"><span style="transform:scaleX(1.075);transform-origin:0 50%">CV</span></div>
<div class="c" style="left:337px;top:538px;width:58px;height:17px;line-height:19px;color:#3333ff;text-align:center;"><span style="transform:scaleX(1.109);transform-origin:50% 50%">Y</span></div>
<div class="c" style="left:396px;top:538px;width:75px;height:17px;line-height:19px;color:#3333ff;text-align:left;padding-left:3px;"><span style="transform:scaleX(1.210);transform-origin:0 50%">AL 3518</span></div>
<div class="c" style="left:472px;top:538px;width:75px;height:17px;line-height:19px;color:#3333ff;text-align:left;padding-left:3px;"><span style="transform:scaleX(1.210);transform-origin:0 50%">AL 3518</span></div>
<div class="c" style="left:548px;top:538px;width:76px;height:17px;line-height:19px;color:#3333ff;text-align:left;padding-left:3px;"><span style="transform:scaleX(1.194);transform-origin:0 50%">JEEZ411401</span></div>
<div class="c" style="left:625px;top:538px;width:76px;height:17px;line-height:19px;color:#3333ff;text-align:left;padding-left:3px;"><span style="transform:scaleX(1.119);transform-origin:0 50%">MB1TLCHD</span></div>
<div class="c" style="left:702px;top:538px;width:86px;height:17px;line-height:19px;color:#3333ff;text-align:right;padding-right:3px;"><span style="transform:scaleX(1.284);transform-origin:100% 50%">47</span></div>
<div class="c" style="left:789px;top:538px;width:111px;height:17px;line-height:19px;color:#3333ff;text-align:right;padding-right:3px;"><span style="transform:scaleX(1.434);transform-origin:100% 50%">5/19/2018</span></div>
<div class="c" style="left:901px;top:538px;width:109px;height:17px;line-height:19px;color:#3333ff;text-align:left;padding-left:3px;"><span style="transform:scaleX(1.146);transform-origin:0 50%">SOMESHWAR MANDIR</span></div>
<div class="c" style="left:1011px;top:538px;width:75px;height:17px;line-height:19px;color:#3333ff;text-align:left;padding-left:3px;"><span style="transform:scaleX(1.170);transform-origin:0 50%">MUMBAI</span></div>
<div class="c" style="left:1087px;top:538px;width:84px;height:17px;line-height:19px;color:#3333ff;text-align:right;padding-right:3px;"><span style="transform:scaleX(1.284);transform-origin:100% 50%">400079</span></div>
<div class="c" style="left:1172px;top:538px;width:90px;height:17px;line-height:19px;color:#3333ff;text-align:right;padding-right:3px;"><span style="transform:scaleX(1.284);transform-origin:100% 50%">21212121</span></div>
<div class="c" style="left:1339px;top:538px;width:108px;height:17px;line-height:19px;color:#3333ff;text-align:right;padding-right:3px;"><span style="transform:scaleX(1.284);transform-origin:100% 50%">9930559543</span></div>
<div class="rn" style="top:556px">41</div>
<div class="b" style="left:0;top:573px;width:33px;height:1px;background:#d0d0d0"></div>
<div class="c" style="left:34px;top:556px;width:168px;height:17px;line-height:19px;color:#ff00ff;text-align:left;padding-left:3px;"><span style="transform:scaleX(1.234);transform-origin:0 50%">LVMUM00036341953</span></div>
<div class="c" style="left:203px;top:556px;width:93px;height:17px;line-height:19px;color:#ff00ff;text-align:right;padding-right:3px;"><span style="transform:scaleX(1.284);transform-origin:100% 50%">147809638</span></div>
<div class="c" style="left:297px;top:556px;width:39px;height:17px;line-height:19px;color:#ff00ff;text-align:left;padding-left:3px;"><span style="transform:scaleX(1.075);transform-origin:0 50%">CV</span></div>
<div class="c" style="left:337px;top:556px;width:58px;height:17px;line-height:19px;color:#ff00ff;text-align:center;"><span style="transform:scaleX(1.109);transform-origin:50% 50%">Y</span></div>
<div class="c" style="left:396px;top:556px;width:75px;height:17px;line-height:19px;color:#ff00ff;text-align:left;padding-left:3px;"><span style="transform:scaleX(1.194);transform-origin:0 50%">PRO 3009</span></div>
<div class="c" style="left:472px;top:556px;width:75px;height:17px;line-height:19px;color:#ff00ff;text-align:left;padding-left:3px;"><span style="transform:scaleX(1.194);transform-origin:0 50%">PRO 3009</span></div>
<div class="c" style="left:548px;top:556px;width:76px;height:17px;line-height:19px;color:#ff00ff;text-align:left;padding-left:3px;"><span style="transform:scaleX(1.162);transform-origin:0 50%">E424CDHH</span></div>
<div class="c" style="left:625px;top:556px;width:76px;height:17px;line-height:19px;color:#ff00ff;text-align:left;padding-left:3px;"><span style="transform:scaleX(1.142);transform-origin:0 50%">MC2P2HRT</span></div>
<div class="c" style="left:702px;top:556px;width:86px;height:17px;line-height:19px;color:#ff00ff;text-align:right;padding-right:3px;"><span style="transform:scaleX(1.284);transform-origin:100% 50%">73</span></div>
<div class="c" style="left:789px;top:556px;width:111px;height:17px;line-height:19px;color:#ff00ff;text-align:right;padding-right:3px;"><span style="transform:scaleX(1.434);transform-origin:100% 50%">9/27/2017</span></div>
<div class="c" style="left:901px;top:556px;width:109px;height:17px;line-height:19px;color:#ff00ff;text-align:left;padding-left:3px;"><span style="transform:scaleX(1.162);transform-origin:0 50%">HIRALAL YADAV</span></div>
<div class="c" style="left:1011px;top:556px;width:75px;height:17px;line-height:19px;color:#ff00ff;text-align:left;padding-left:3px;"><span style="transform:scaleX(1.170);transform-origin:0 50%">MUMBAI</span></div>
<div class="c" style="left:1087px;top:556px;width:84px;height:17px;line-height:19px;color:#ff00ff;text-align:right;padding-right:3px;"><span style="transform:scaleX(1.284);transform-origin:100% 50%">400068</span></div>
<div class="c" style="left:1172px;top:556px;width:90px;height:17px;line-height:19px;color:#ff00ff;text-align:right;padding-right:3px;"><span style="transform:scaleX(1.284);transform-origin:100% 50%">21212121</span></div>
<div class="c" style="left:1339px;top:556px;width:108px;height:17px;line-height:19px;color:#ff00ff;text-align:right;padding-right:3px;"><span style="transform:scaleX(1.284);transform-origin:100% 50%">9892241603</span></div>
<div class="c" style="left:1448px;top:556px;width:75px;height:17px;line-height:19px;color:#ff00ff;text-align:left;padding-left:3px;"><span style="transform:scaleX(1.151);transform-origin:0 50%">KRISHNASH</span></div>
<div class="c" style="left:1524px;top:556px;width:75px;height:17px;line-height:19px;color:#ff00ff;text-align:left;padding-left:3px;"><span style="transform:scaleX(1.160);transform-origin:0 50%">HIRALAL YA</span></div>
<div class="c" style="left:1600px;top:556px;width:75px;height:17px;line-height:19px;color:#ff00ff;text-align:left;padding-left:3px;"><span style="transform:scaleX(1.157);transform-origin:0 50%">SHIVVALLA</span></div>
<div class="c" style="left:1676px;top:556px;width:151px;height:17px;line-height:19px;color:#ff00ff;text-align:left;padding-left:3px;"><span style="transform:scaleX(1.180);transform-origin:0 50%">BUILDING NO 5 RAWAL</span></div>
<div class="c" style="left:1828px;top:556px;width:75px;height:17px;line-height:19px;color:#ff00ff;text-align:left;padding-left:3px;"><span style="transform:scaleX(1.170);transform-origin:0 50%">MUMBAI</span></div>
<div class="rn" style="top:574px">43</div>
<div class="b" style="left:0;top:591px;width:33px;height:1px;background:#d0d0d0"></div>
<div class="c" style="left:34px;top:574px;width:168px;height:17px;line-height:19px;color:#3333ff;text-align:left;padding-left:3px;"><span style="transform:scaleX(1.237);transform-origin:0 50%">LVNMU00035472638</span></div>
<div class="c" style="left:203px;top:574px;width:93px;height:17px;line-height:19px;color:#3333ff;text-align:right;padding-right:3px;"><span style="transform:scaleX(1.284);transform-origin:100% 50%">141051613</span></div>
<div class="c" style="left:297px;top:574px;width:39px;height:17px;line-height:19px;color:#3333ff;text-align:left;padding-left:3px;"><span style="transform:scaleX(1.075);transform-origin:0 50%">CV</span></div>
<div class="c" style="left:337px;top:574px;width:58px;height:17px;line-height:19px;color:#3333ff;text-align:center;"><span style="transform:scaleX(1.109);transform-origin:50% 50%">Y</span></div>
<div class="c" style="left:396px;top:574px;width:75px;height:17px;line-height:19px;color:#3333ff;text-align:left;padding-left:3px;"><span style="transform:scaleX(1.198);transform-origin:0 50%">LPT 2518</span></div>
<div class="c" style="left:472px;top:574px;width:75px;height:17px;line-height:19px;color:#3333ff;text-align:left;padding-left:3px;"><span style="transform:scaleX(1.198);transform-origin:0 50%">LPT 2518</span></div>
<div class="c" style="left:548px;top:574px;width:76px;height:17px;line-height:19px;color:#3333ff;text-align:left;padding-left:3px;"><span style="transform:scaleX(1.252);transform-origin:0 50%">71A84365</span></div>
<div class="c" style="left:625px;top:574px;width:76px;height:17px;line-height:19px;color:#3333ff;text-align:left;padding-left:3px;"><span style="transform:scaleX(1.234);transform-origin:0 50%">MAT448201</span></div>
<div class="c" style="left:702px;top:574px;width:86px;height:17px;line-height:19px;color:#3333ff;text-align:right;padding-right:3px;"><span style="transform:scaleX(1.284);transform-origin:100% 50%">54</span></div>
<div class="c" style="left:789px;top:574px;width:111px;height:17px;line-height:19px;color:#3333ff;text-align:right;padding-right:3px;"><span style="transform:scaleX(1.434);transform-origin:100% 50%">3/24/2017</span></div>
<div class="c" style="left:901px;top:574px;width:109px;height:17px;line-height:19px;color:#3333ff;text-align:left;padding-left:3px;"><span style="transform:scaleX(1.173);transform-origin:0 50%">ROOM NO 7 &nbsp;SHIV</span></div>
<div class="c" style="left:1011px;top:574px;width:75px;height:17px;line-height:19px;color:#3333ff;text-align:left;padding-left:3px;"><span style="transform:scaleX(1.208);transform-origin:0 50%">NAVI MUMBAI</span></div>
<div class="c" style="left:1087px;top:574px;width:84px;height:17px;line-height:19px;color:#3333ff;text-align:right;padding-right:3px;"><span style="transform:scaleX(1.284);transform-origin:100% 50%">410209</span></div>
<div class="c" style="left:1172px;top:574px;width:90px;height:17px;line-height:19px;color:#3333ff;text-align:right;padding-right:3px;"><span style="transform:scaleX(1.284);transform-origin:100% 50%">21212121</span></div>
<div class="c" style="left:1448px;top:574px;width:75px;height:17px;line-height:19px;color:#3333ff;text-align:left;padding-left:3px;"><span style="transform:scaleX(1.197);transform-origin:0 50%">KIRAN VIJAY</span></div>
<div class="c" style="left:1524px;top:574px;width:75px;height:17px;line-height:19px;color:#3333ff;text-align:left;padding-left:3px;"><span style="transform:scaleX(1.202);transform-origin:0 50%">FL A 304</span></div>
<div class="c" style="left:1600px;top:574px;width:75px;height:17px;line-height:19px;color:#3333ff;text-align:left;padding-left:3px;"><span style="transform:scaleX(1.143);transform-origin:0 50%">KAVERI CHS</span></div>
<div class="c" style="left:1676px;top:574px;width:75px;height:17px;line-height:19px;color:#3333ff;text-align:left;padding-left:3px;"><span style="transform:scaleX(1.155);transform-origin:0 50%">PLOT 41</span></div>
<div class="c" style="left:1828px;top:574px;width:75px;height:17px;line-height:19px;color:#3333ff;text-align:left;padding-left:3px;"><span style="transform:scaleX(1.208);transform-origin:0 50%">NAVI MUMBAI</span></div>
<div class="rn" style="top:592px">44</div>
<div class="b" style="left:0;top:609px;width:33px;height:1px;background:#d0d0d0"></div>
<div class="c" style="left:34px;top:592px;width:168px;height:17px;line-height:19px;color:#3333ff;text-align:left;padding-left:3px;"><span style="transform:scaleX(1.234);transform-origin:0 50%">LVMUM00040136789</span></div>
<div class="c" style="left:203px;top:592px;width:93px;height:17px;line-height:19px;color:#3333ff;text-align:right;padding-right:3px;"><span style="transform:scaleX(1.284);transform-origin:100% 50%">148581725</span></div>
<div class="c" style="left:297px;top:592px;width:39px;height:17px;line-height:19px;color:#3333ff;text-align:left;padding-left:3px;"><span style="transform:scaleX(1.075);transform-origin:0 50%">CV</span></div>
<div class="c" style="left:337px;top:592px;width:58px;height:17px;line-height:19px;color:#3333ff;text-align:center;"><span style="transform:scaleX(1.109);transform-origin:50% 50%">Y</span></div>
<div class="c" style="left:396px;top:592px;width:75px;height:17px;line-height:19px;color:#3333ff;text-align:left;padding-left:3px;"><span style="transform:scaleX(1.109);transform-origin:0 50%">AL DOST</span></div>
<div class="c" style="left:472px;top:592px;width:75px;height:17px;line-height:19px;color:#3333ff;text-align:left;padding-left:3px;"><span style="transform:scaleX(1.109);transform-origin:0 50%">AL DOST</span></div>
<div class="c" style="left:548px;top:592px;width:76px;height:17px;line-height:19px;color:#3333ff;text-align:left;padding-left:3px;"><span style="transform:scaleX(1.224);transform-origin:0 50%">HKH016831</span></div>
<div class="c" style="left:625px;top:592px;width:76px;height:17px;line-height:19px;color:#3333ff;text-align:left;padding-left:3px;"><span style="transform:scaleX(1.144);transform-origin:0 50%">MB1AA22E</span></div>
<div class="c" style="left:702px;top:592px;width:86px;height:17px;line-height:19px;color:#3333ff;text-align:right;padding-right:3px;"><span style="transform:scaleX(1.284);transform-origin:100% 50%">67</span></div>
<div class="c" style="left:789px;top:592px;width:111px;height:17px;line-height:19px;color:#3333ff;text-align:right;padding-right:3px;"><span style="transform:scaleX(1.434);transform-origin:100% 50%">7/30/2019</span></div>
<div class="c" style="left:901px;top:592px;width:109px;height:17px;line-height:19px;color:#3333ff;text-align:left;padding-left:3px;"><span style="transform:scaleX(1.111);transform-origin:0 50%">1 ST FLOOR BAR</span></div>
<div class="c" style="left:1011px;top:592px;width:75px;height:17px;line-height:19px;color:#3333ff;text-align:left;padding-left:3px;"><span style="transform:scaleX(1.170);transform-origin:0 50%">MUMBAI</span></div>
<div class="c" style="left:1087px;top:592px;width:84px;height:17px;line-height:19px;color:#3333ff;text-align:right;padding-right:3px;"><span style="transform:scaleX(1.284);transform-origin:100% 50%">400102</span></div>
<div class="c" style="left:1172px;top:592px;width:90px;height:17px;line-height:19px;color:#3333ff;text-align:right;padding-right:3px;"><span style="transform:scaleX(1.284);transform-origin:100% 50%">21212121</span></div>
<div class="c" style="left:1448px;top:592px;width:75px;height:17px;line-height:19px;color:#3333ff;text-align:left;padding-left:3px;"><span style="transform:scaleX(1.185);transform-origin:0 50%">JAIKISHAN</span></div>
<div class="c" style="left:1524px;top:592px;width:75px;height:17px;line-height:19px;color:#3333ff;text-align:left;padding-left:3px;"><span style="transform:scaleX(1.123);transform-origin:0 50%">BLDG R 6 R</span></div>
<div class="c" style="left:1600px;top:592px;width:75px;height:17px;line-height:19px;color:#3333ff;text-align:left;padding-left:3px;"><span style="transform:scaleX(1.136);transform-origin:0 50%">SRI GANESH</span></div>
<div class="c" style="left:1676px;top:592px;width:151px;height:17px;line-height:19px;color:#3333ff;text-align:left;padding-left:3px;"><span style="transform:scaleX(1.102);transform-origin:0 50%">GOREGAON WEST RAM</span></div>
<div class="c" style="left:1828px;top:592px;width:75px;height:17px;line-height:19px;color:#3333ff;text-align:left;padding-left:3px;"><span style="transform:scaleX(1.170);transform-origin:0 50%">MUMBAI</span></div>
<div class="rn" style="top:610px">46</div>
<div class="b" style="left:0;top:627px;width:33px;height:1px;background:#d0d0d0"></div>
<div class="c" style="left:34px;top:610px;width:168px;height:17px;line-height:19px;color:#3333ff;text-align:left;padding-left:3px;"><span style="transform:scaleX(1.232);transform-origin:0 50%">LVTNE00035265917</span></div>
<div class="c" style="left:203px;top:610px;width:93px;height:17px;line-height:19px;color:#3333ff;text-align:right;padding-right:3px;"><span style="transform:scaleX(1.284);transform-origin:100% 50%">3200635</span></div>
<div class="c" style="left:297px;top:610px;width:39px;height:17px;line-height:19px;color:#3333ff;text-align:left;padding-left:3px;"><span style="transform:scaleX(1.075);transform-origin:0 50%">CV</span></div>
<div class="c" style="left:337px;top:610px;width:58px;height:17px;line-height:19px;color:#3333ff;text-align:center;"><span style="transform:scaleX(1.109);transform-origin:50% 50%">Y</span></div>
<div class="c" style="left:396px;top:610px;width:75px;height:17px;line-height:19px;color:#3333ff;text-align:left;padding-left:3px;"><span style="transform:scaleX(1.210);transform-origin:0 50%">AL 2518</span></div>
<div class="c" style="left:472px;top:610px;width:75px;height:17px;line-height:19px;color:#3333ff;text-align:left;padding-left:3px;"><span style="transform:scaleX(1.210);transform-origin:0 50%">AL 2518</span></div>
<div class="c" style="left:548px;top:610px;width:76px;height:17px;line-height:19px;color:#3333ff;text-align:left;padding-left:3px;"><span style="transform:scaleX(1.204);transform-origin:0 50%">HGHZ40071</span></div>
<div class="c" style="left:625px;top:610px;width:76px;height:17px;line-height:19px;color:#3333ff;text-align:left;padding-left:3px;"><span style="transform:scaleX(1.126);transform-origin:0 50%">MB1HTGFD</span></div>
<div class="c" style="left:702px;top:610px;width:86px;height:17px;line-height:19px;color:#3333ff;text-align:right;padding-right:3px;"><span style="transform:scaleX(1.284);transform-origin:100% 50%">62</span></div>
<div class="c" style="left:789px;top:610px;width:111px;height:17px;line-height:19px;color:#3333ff;text-align:right;padding-right:3px;"><span style="transform:scaleX(1.434);transform-origin:100% 50%">1/30/2017</span></div>
<div class="c" style="left:901px;top:610px;width:109px;height:17px;line-height:19px;color:#3333ff;text-align:left;padding-left:3px;"><span style="transform:scaleX(1.174);transform-origin:0 50%">SHOP NO 5 6 LAXMI</span></div>
<div class="c" style="left:1011px;top:610px;width:75px;height:17px;line-height:19px;color:#3333ff;text-align:left;padding-left:3px;"><span style="transform:scaleX(1.115);transform-origin:0 50%">THANE</span></div>
<div class="c" style="left:1087px;top:610px;width:84px;height:17px;line-height:19px;color:#3333ff;text-align:right;padding-right:3px;"><span style="transform:scaleX(1.284);transform-origin:100% 50%">421306</span></div>
<div class="c" style="left:1172px;top:610px;width:90px;height:17px;line-height:19px;color:#3333ff;text-align:right;padding-right:3px;"><span style="transform:scaleX(1.284);transform-origin:100% 50%">3299831</span></div>
<div class="c" style="left:1448px;top:610px;width:75px;height:17px;line-height:19px;color:#3333ff;text-align:left;padding-left:3px;"><span style="transform:scaleX(1.110);transform-origin:0 50%">GYANPRAKASH</span></div>
<div class="c" style="left:1524px;top:610px;width:75px;height:17px;line-height:19px;color:#3333ff;text-align:left;padding-left:3px;"><span style="transform:scaleX(1.151);transform-origin:0 50%">SHOP NO 5</span></div>
<div class="c" style="left:1600px;top:610px;width:75px;height:17px;line-height:19px;color:#3333ff;text-align:left;padding-left:3px;"><span style="transform:scaleX(1.118);transform-origin:0 50%">APARTMENT</span></div>
<div class="c" style="left:1676px;top:610px;width:151px;height:17px;line-height:19px;color:#3333ff;text-align:left;padding-left:3px;"><span style="transform:scaleX(1.132);transform-origin:0 50%">SCHOOL POONA LINK</span></div>
<div class="c" style="left:1828px;top:610px;width:75px;height:17px;line-height:19px;color:#3333ff;text-align:left;padding-left:3px;"><span style="transform:scaleX(1.115);transform-origin:0 50%">THANE</span></div>
<div class="rn" style="top:628px">47</div>
<div class="b" style="left:0;top:645px;width:33px;height:1px;background:#d0d0d0"></div>
<div class="c" style="left:34px;top:628px;width:168px;height:17px;line-height:19px;color:#3333ff;text-align:left;padding-left:3px;"><span style="transform:scaleX(1.232);transform-origin:0 50%">LVTNE00035265920</span></div>
<div class="c" style="left:203px;top:628px;width:93px;height:17px;line-height:19px;color:#3333ff;text-align:right;padding-right:3px;"><span style="transform:scaleX(1.284);transform-origin:100% 50%">3200635</span></div>
<div class="c" style="left:297px;top:628px;width:39px;height:17px;line-height:19px;color:#3333ff;text-align:left;padding-left:3px;"><span style="transform:scaleX(1.075);transform-origin:0 50%">CV</span></div>
<div class="c" style="left:337px;top:628px;width:58px;height:17px;line-height:19px;color:#3333ff;text-align:center;"><span style="transform:scaleX(1.109);transform-origin:50% 50%">Y</span></div>
<div class="c" style="left:396px;top:628px;width:75px;height:17px;line-height:19px;color:#3333ff;text-align:left;padding-left:3px;"><span style="transform:scaleX(1.210);transform-origin:0 50%">AL 2518</span></div>
<div class="c" style="left:472px;top:628px;width:75px;height:17px;line-height:19px;color:#3333ff;text-align:left;padding-left:3px;"><span style="transform:scaleX(1.210);transform-origin:0 50%">AL 2518</span></div>
<div class="c" style="left:548px;top:628px;width:76px;height:17px;line-height:19px;color:#3333ff;text-align:left;padding-left:3px;"><span style="transform:scaleX(1.204);transform-origin:0 50%">HGHZ40081</span></div>
<div class="c" style="left:625px;top:628px;width:76px;height:17px;line-height:19px;color:#3333ff;text-align:left;padding-left:3px;"><span style="transform:scaleX(1.126);transform-origin:0 50%">MB1HTGFD</span></div>
<div class="c" style="left:702px;top:628px;width:86px;height:17px;line-height:19px;color:#3333ff;text-align:right;padding-right:3px;"><span style="transform:scaleX(1.284);transform-origin:100% 50%">58</span></div>
<div class="c" style="left:789px;top:628px;width:111px;height:17px;line-height:19px;color:#3333ff;text-align:right;padding-right:3px;"><span style="transform:scaleX(1.434);transform-origin:100% 50%">1/30/2017</span></div>
<div class="c" style="left:901px;top:628px;width:109px;height:17px;line-height:19px;color:#3333ff;text-align:left;padding-left:3px;"><span style="transform:scaleX(1.174);transform-origin:0 50%">SHOP NO 5 6 LAXMI</span></div>
<div class="c" style="left:1011px;top:628px;width:75px;height:17px;line-height:19px;color:#3333ff;text-align:left;padding-left:3px;"><span style="transform:scaleX(1.115);transform-origin:0 50%">THANE</span></div>
<div class="c" style="left:1087px;top:628px;width:84px;height:17px;line-height:19px;color:#3333ff;text-align:right;padding-right:3px;"><span style="transform:scaleX(1.284);transform-origin:100% 50%">421306</span></div>
<div class="c" style="left:1172px;top:628px;width:90px;height:17px;line-height:19px;color:#3333ff;text-align:right;padding-right:3px;"><span style="transform:scaleX(1.284);transform-origin:100% 50%">3299831</span></div>
<div class="c" style="left:1448px;top:628px;width:75px;height:17px;line-height:19px;color:#3333ff;text-align:left;padding-left:3px;"><span style="transform:scaleX(1.110);transform-origin:0 50%">GYANPRAKASH</span></div>
<div class="c" style="left:1524px;top:628px;width:75px;height:17px;line-height:19px;color:#3333ff;text-align:left;padding-left:3px;"><span style="transform:scaleX(1.151);transform-origin:0 50%">SHOP NO 5</span></div>
<div class="c" style="left:1600px;top:628px;width:75px;height:17px;line-height:19px;color:#3333ff;text-align:left;padding-left:3px;"><span style="transform:scaleX(1.118);transform-origin:0 50%">APARTMENT</span></div>
<div class="c" style="left:1676px;top:628px;width:151px;height:17px;line-height:19px;color:#3333ff;text-align:left;padding-left:3px;"><span style="transform:scaleX(1.132);transform-origin:0 50%">SCHOOL POONA LINK</span></div>
<div class="c" style="left:1828px;top:628px;width:75px;height:17px;line-height:19px;color:#3333ff;text-align:left;padding-left:3px;"><span style="transform:scaleX(1.115);transform-origin:0 50%">THANE</span></div>
<div class="rn" style="top:646px">48</div>
<div class="b" style="left:0;top:663px;width:33px;height:1px;background:#d0d0d0"></div>
<div class="c" style="left:34px;top:646px;width:168px;height:17px;line-height:19px;color:#3333ff;text-align:left;padding-left:3px;"><span style="transform:scaleX(1.232);transform-origin:0 50%">LVTNE00035265930</span></div>
<div class="c" style="left:203px;top:646px;width:93px;height:17px;line-height:19px;color:#3333ff;text-align:right;padding-right:3px;"><span style="transform:scaleX(1.284);transform-origin:100% 50%">3200635</span></div>
<div class="c" style="left:297px;top:646px;width:39px;height:17px;line-height:19px;color:#3333ff;text-align:left;padding-left:3px;"><span style="transform:scaleX(1.075);transform-origin:0 50%">CV</span></div>
<div class="c" style="left:337px;top:646px;width:58px;height:17px;line-height:19px;color:#3333ff;text-align:center;"><span style="transform:scaleX(1.109);transform-origin:50% 50%">Y</span></div>
<div class="c" style="left:396px;top:646px;width:75px;height:17px;line-height:19px;color:#3333ff;text-align:left;padding-left:3px;"><span style="transform:scaleX(1.210);transform-origin:0 50%">AL 2518</span></div>
<div class="c" style="left:472px;top:646px;width:75px;height:17px;line-height:19px;color:#3333ff;text-align:left;padding-left:3px;"><span style="transform:scaleX(1.210);transform-origin:0 50%">AL 2518</span></div>
<div class="c" style="left:548px;top:646px;width:76px;height:17px;line-height:19px;color:#3333ff;text-align:left;padding-left:3px;"><span style="transform:scaleX(1.204);transform-origin:0 50%">HGHZ40161</span></div>
<div class="c" style="left:625px;top:646px;width:76px;height:17px;line-height:19px;color:#3333ff;text-align:left;padding-left:3px;"><span style="transform:scaleX(1.126);transform-origin:0 50%">MB1HTGFD</span></div>
<div class="c" style="left:702px;top:646px;width:86px;height:17px;line-height:19px;color:#3333ff;text-align:right;padding-right:3px;"><span style="transform:scaleX(1.284);transform-origin:100% 50%">58</span></div>
<div class="c" style="left:789px;top:646px;width:111px;height:17px;line-height:19px;color:#3333ff;text-align:right;padding-right:3px;"><span style="transform:scaleX(1.434);transform-origin:100% 50%">1/30/2017</span></div>
<div class="c" style="left:901px;top:646px;width:109px;height:17px;line-height:19px;color:#3333ff;text-align:left;padding-left:3px;"><span style="transform:scaleX(1.174);transform-origin:0 50%">SHOP NO 5 6 LAXMI</span></div>
<div class="c" style="left:1011px;top:646px;width:75px;height:17px;line-height:19px;color:#3333ff;text-align:left;padding-left:3px;"><span style="transform:scaleX(1.115);transform-origin:0 50%">THANE</span></div>
<div class="c" style="left:1087px;top:646px;width:84px;height:17px;line-height:19px;color:#3333ff;text-align:right;padding-right:3px;"><span style="transform:scaleX(1.284);transform-origin:100% 50%">421306</span></div>
<div class="c" style="left:1172px;top:646px;width:90px;height:17px;line-height:19px;color:#3333ff;text-align:right;padding-right:3px;"><span style="transform:scaleX(1.284);transform-origin:100% 50%">3299831</span></div>
<div class="c" style="left:1448px;top:646px;width:75px;height:17px;line-height:19px;color:#3333ff;text-align:left;padding-left:3px;"><span style="transform:scaleX(1.110);transform-origin:0 50%">GYANPRAKASH</span></div>
<div class="c" style="left:1524px;top:646px;width:75px;height:17px;line-height:19px;color:#3333ff;text-align:left;padding-left:3px;"><span style="transform:scaleX(1.151);transform-origin:0 50%">SHOP NO 5</span></div>
<div class="c" style="left:1600px;top:646px;width:75px;height:17px;line-height:19px;color:#3333ff;text-align:left;padding-left:3px;"><span style="transform:scaleX(1.118);transform-origin:0 50%">APARTMENT</span></div>
<div class="c" style="left:1676px;top:646px;width:151px;height:17px;line-height:19px;color:#3333ff;text-align:left;padding-left:3px;"><span style="transform:scaleX(1.132);transform-origin:0 50%">SCHOOL POONA LINK</span></div>
<div class="c" style="left:1828px;top:646px;width:75px;height:17px;line-height:19px;color:#3333ff;text-align:left;padding-left:3px;"><span style="transform:scaleX(1.115);transform-origin:0 50%">THANE</span></div>
<div class="rn" style="top:664px">50</div>
<div class="b" style="left:0;top:681px;width:33px;height:1px;background:#d0d0d0"></div>
<div class="c" style="left:34px;top:664px;width:168px;height:17px;line-height:19px;color:#3333ff;text-align:left;padding-left:3px;"><span style="transform:scaleX(1.234);transform-origin:0 50%">LVMUM00035610730</span></div>
<div class="c" style="left:203px;top:664px;width:93px;height:17px;line-height:19px;color:#3333ff;text-align:right;padding-right:3px;"><span style="transform:scaleX(1.284);transform-origin:100% 50%">141654009</span></div>
<div class="c" style="left:297px;top:664px;width:39px;height:17px;line-height:19px;color:#3333ff;text-align:left;padding-left:3px;"><span style="transform:scaleX(1.075);transform-origin:0 50%">CV</span></div>
<div class="c" style="left:337px;top:664px;width:58px;height:17px;line-height:19px;color:#3333ff;text-align:center;"><span style="transform:scaleX(1.109);transform-origin:50% 50%">Y</span></div>
<div class="c" style="left:396px;top:664px;width:75px;height:17px;line-height:19px;color:#3333ff;text-align:left;padding-left:3px;"><span style="transform:scaleX(1.123);transform-origin:0 50%">EICHER PRO</span></div>
<div class="c" style="left:472px;top:664px;width:75px;height:17px;line-height:19px;color:#3333ff;text-align:left;padding-left:3px;"><span style="transform:scaleX(1.123);transform-origin:0 50%">EICHER PRO</span></div>
<div class="c" style="left:548px;top:664px;width:76px;height:17px;line-height:19px;color:#3333ff;text-align:left;padding-left:3px;"><span style="transform:scaleX(1.144);transform-origin:0 50%">E424CDHE</span></div>
<div class="c" style="left:625px;top:664px;width:76px;height:17px;line-height:19px;color:#3333ff;text-align:left;padding-left:3px;"><span style="transform:scaleX(1.122);transform-origin:0 50%">MC2F8HRC</span></div>
<div class="c" style="left:702px;top:664px;width:86px;height:17px;line-height:19px;color:#3333ff;text-align:right;padding-right:3px;"><span style="transform:scaleX(1.284);transform-origin:100% 50%">54</span></div>
<div class="c" style="left:789px;top:664px;width:111px;height:17px;line-height:19px;color:#3333ff;text-align:right;padding-right:3px;"><span style="transform:scaleX(1.434);transform-origin:100% 50%">4/28/2017</span></div>
<div class="c" style="left:901px;top:664px;width:109px;height:17px;line-height:19px;color:#3333ff;text-align:left;padding-left:3px;"><span style="transform:scaleX(1.209);transform-origin:0 50%">JIVDANI V MANDIR</span></div>
<div class="c" style="left:1011px;top:664px;width:75px;height:17px;line-height:19px;color:#3333ff;text-align:left;padding-left:3px;"><span style="transform:scaleX(1.170);transform-origin:0 50%">MUMBAI</span></div>
<div class="c" style="left:1087px;top:664px;width:84px;height:17px;line-height:19px;color:#3333ff;text-align:right;padding-right:3px;"><span style="transform:scaleX(1.284);transform-origin:100% 50%">400101</span></div>
<div class="c" style="left:1172px;top:664px;width:90px;height:17px;line-height:19px;color:#3333ff;text-align:right;padding-right:3px;"><span style="transform:scaleX(1.284);transform-origin:100% 50%">21212121</span></div>
<div class="rn" style="top:682px">58</div>
<div class="b" style="left:0;top:699px;width:33px;height:1px;background:#d0d0d0"></div>
<div class="c" style="left:34px;top:682px;width:168px;height:17px;line-height:19px;color:#ff00ff;text-align:left;padding-left:3px;"><span style="transform:scaleX(1.234);transform-origin:0 50%">LVMUM00036700470</span></div>
<div class="c" style="left:203px;top:682px;width:93px;height:17px;line-height:19px;color:#ff00ff;text-align:right;padding-right:3px;"><span style="transform:scaleX(1.284);transform-origin:100% 50%">148581725</span></div>
<div class="c" style="left:297px;top:682px;width:39px;height:17px;line-height:19px;color:#ff00ff;text-align:left;padding-left:3px;"><span style="transform:scaleX(1.075);transform-origin:0 50%">CV</span></div>
<div class="c" style="left:337px;top:682px;width:58px;height:17px;line-height:19px;color:#ff00ff;text-align:center;"><span style="transform:scaleX(1.109);transform-origin:50% 50%">Y</span></div>
<div class="c" style="left:396px;top:682px;width:75px;height:17px;line-height:19px;color:#ff00ff;text-align:left;padding-left:3px;"><span style="transform:scaleX(1.123);transform-origin:0 50%">EICHER PRO</span></div>
<div class="c" style="left:472px;top:682px;width:75px;height:17px;line-height:19px;color:#ff00ff;text-align:left;padding-left:3px;"><span style="transform:scaleX(1.123);transform-origin:0 50%">EICHER PRO</span></div>
<div class="c" style="left:548px;top:682px;width:76px;height:17px;line-height:19px;color:#ff00ff;text-align:left;padding-left:3px;"><span style="transform:scaleX(1.148);transform-origin:0 50%">E414CDHL</span></div>
<div class="c" style="left:625px;top:682px;width:76px;height:17px;line-height:19px;color:#ff00ff;text-align:left;padding-left:3px;"><span style="transform:scaleX(1.103);transform-origin:0 50%">MC2B7ERC</span></div>
<div class="c" style="left:702px;top:682px;width:86px;height:17px;line-height:19px;color:#ff00ff;text-align:right;padding-right:3px;"><span style="transform:scaleX(1.284);transform-origin:100% 50%">63</span></div>
<div class="c" style="left:789px;top:682px;width:111px;height:17px;line-height:19px;color:#ff00ff;text-align:right;padding-right:3px;"><span style="transform:scaleX(1.433);transform-origin:100% 50%">11/20/2017</span></div>
<div class="c" style="left:901px;top:682px;width:109px;height:17px;line-height:19px;color:#ff00ff;text-align:left;padding-left:3px;"><span style="transform:scaleX(1.106);transform-origin:0 50%">1ST FLR BARSANA</span></div>
<div class="c" style="left:1011px;top:682px;width:75px;height:17px;line-height:19px;color:#ff00ff;text-align:left;padding-left:3px;"><span style="transform:scaleX(1.170);transform-origin:0 50%">MUMBAI</span></div>
<div class="c" style="left:1087px;top:682px;width:84px;height:17px;line-height:19px;color:#ff00ff;text-align:right;padding-right:3px;"><span style="transform:scaleX(1.284);transform-origin:100% 50%">400053</span></div>
<div class="c" style="left:1172px;top:682px;width:90px;height:17px;line-height:19px;color:#ff00ff;text-align:right;padding-right:3px;"><span style="transform:scaleX(1.284);transform-origin:100% 50%">21212121</span></div>
<div class="c" style="left:1448px;top:682px;width:75px;height:17px;line-height:19px;color:#ff00ff;text-align:left;padding-left:3px;"><span style="transform:scaleX(1.185);transform-origin:0 50%">JAIKISHAN</span></div>
<div class="c" style="left:1524px;top:682px;width:75px;height:17px;line-height:19px;color:#ff00ff;text-align:left;padding-left:3px;"><span style="transform:scaleX(1.144);transform-origin:0 50%">ROOM NO 1</span></div>
<div class="c" style="left:1600px;top:682px;width:75px;height:17px;line-height:19px;color:#ff00ff;text-align:left;padding-left:3px;"><span style="transform:scaleX(1.093);transform-origin:0 50%">SHREE GAN</span></div>
<div class="c" style="left:1676px;top:682px;width:151px;height:17px;line-height:19px;color:#ff00ff;text-align:left;padding-left:3px;"><span style="transform:scaleX(1.097);transform-origin:0 50%">GOREGAON WEST</span></div>
<div class="c" style="left:1828px;top:682px;width:75px;height:17px;line-height:19px;color:#ff00ff;text-align:left;padding-left:3px;"><span style="transform:scaleX(1.170);transform-origin:0 50%">MUMBAI</span></div>
<div class="rn" style="top:700px">66</div>
<div class="b" style="left:0;top:717px;width:33px;height:1px;background:#d0d0d0"></div>
<div class="c" style="left:34px;top:700px;width:168px;height:17px;line-height:19px;color:#3333ff;text-align:left;padding-left:3px;"><span style="transform:scaleX(1.226);transform-origin:0 50%">UVTNE00041889574</span></div>
<div class="c" style="left:203px;top:700px;width:93px;height:17px;line-height:19px;color:#3333ff;text-align:right;padding-right:3px;"><span style="transform:scaleX(1.284);transform-origin:100% 50%">162319643</span></div>
<div class="c" style="left:297px;top:700px;width:39px;height:17px;line-height:19px;color:#3333ff;text-align:left;padding-left:3px;"><span style="transform:scaleX(1.075);transform-origin:0 50%">CV</span></div>
<div class="c" style="left:337px;top:700px;width:58px;height:17px;line-height:19px;color:#3333ff;text-align:center;"><span style="transform:scaleX(1.109);transform-origin:50% 50%">Y</span></div>
<div class="c" style="left:396px;top:700px;width:151px;height:17px;line-height:19px;color:#3333ff;text-align:left;padding-left:3px;"><span style="transform:scaleX(1.145);transform-origin:0 50%">ECOMET1412</span></div>
<div class="c" style="left:702px;top:700px;width:86px;height:17px;line-height:19px;color:#3333ff;text-align:right;padding-right:3px;"><span style="transform:scaleX(1.284);transform-origin:100% 50%">48</span></div>
<div class="c" style="left:789px;top:700px;width:111px;height:17px;line-height:19px;color:#3333ff;text-align:right;padding-right:3px;"><span style="transform:scaleX(1.456);transform-origin:100% 50%">8/7/2020</span></div>
<div class="c" style="left:901px;top:700px;width:109px;height:17px;line-height:19px;color:#3333ff;text-align:left;padding-left:3px;"><span style="transform:scaleX(1.177);transform-origin:0 50%">SR NO 96 NR SAI</span></div>
<div class="c" style="left:1011px;top:700px;width:75px;height:17px;line-height:19px;color:#3333ff;text-align:left;padding-left:3px;"><span style="transform:scaleX(1.115);transform-origin:0 50%">THANE</span></div>
<div class="c" style="left:1087px;top:700px;width:84px;height:17px;line-height:19px;color:#3333ff;text-align:right;padding-right:3px;"><span style="transform:scaleX(1.284);transform-origin:100% 50%">401208</span></div>
<div class="c" style="left:1172px;top:700px;width:90px;height:17px;line-height:19px;color:#3333ff;text-align:right;padding-right:3px;"><span style="transform:scaleX(1.284);transform-origin:100% 50%">2121212</span></div>
<div class="c" style="left:1448px;top:700px;width:75px;height:17px;line-height:19px;color:#3333ff;text-align:left;padding-left:3px;"><span style="transform:scaleX(1.088);transform-origin:0 50%">RAJKUMAR</span></div>
<div class="c" style="left:1524px;top:700px;width:75px;height:17px;line-height:19px;color:#3333ff;text-align:left;padding-left:3px;"><span style="transform:scaleX(1.144);transform-origin:0 50%">ROOM NO 1</span></div>
<div class="c" style="left:1600px;top:700px;width:75px;height:17px;line-height:19px;color:#3333ff;text-align:left;padding-left:3px;"><span style="transform:scaleX(1.113);transform-origin:0 50%">KAMAN ROAD</span></div>
<div class="c" style="left:1676px;top:700px;width:151px;height:17px;line-height:19px;color:#3333ff;text-align:left;padding-left:3px;"><span style="transform:scaleX(1.147);transform-origin:0 50%">KAMAN VASAI E</span></div>
<div class="c" style="left:1828px;top:700px;width:75px;height:17px;line-height:19px;color:#3333ff;text-align:left;padding-left:3px;"><span style="transform:scaleX(1.115);transform-origin:0 50%">THANE</span></div>
<div class="rn" style="top:718px">69</div>
<div class="b" style="left:0;top:735px;width:33px;height:1px;background:#d0d0d0"></div>
<div class="c" style="left:34px;top:718px;width:168px;height:17px;line-height:19px;color:#ff00ff;text-align:left;padding-left:3px;"><span style="transform:scaleX(1.234);transform-origin:0 50%">LVMUM00036341969</span></div>
<div class="c" style="left:203px;top:718px;width:93px;height:17px;line-height:19px;color:#ff00ff;text-align:right;padding-right:3px;"><span style="transform:scaleX(1.284);transform-origin:100% 50%">147809638</span></div>
<div class="c" style="left:297px;top:718px;width:39px;height:17px;line-height:19px;color:#ff00ff;text-align:left;padding-left:3px;"><span style="transform:scaleX(1.075);transform-origin:0 50%">CV</span></div>
<div class="c" style="left:337px;top:718px;width:58px;height:17px;line-height:19px;color:#ff00ff;text-align:center;"><span style="transform:scaleX(1.109);transform-origin:50% 50%">Y</span></div>
<div class="c" style="left:396px;top:718px;width:75px;height:17px;line-height:19px;color:#ff00ff;text-align:left;padding-left:3px;"><span style="transform:scaleX(1.194);transform-origin:0 50%">PRO 3009</span></div>
<div class="c" style="left:472px;top:718px;width:75px;height:17px;line-height:19px;color:#ff00ff;text-align:left;padding-left:3px;"><span style="transform:scaleX(1.194);transform-origin:0 50%">PRO 3009</span></div>
<div class="c" style="left:548px;top:718px;width:76px;height:17px;line-height:19px;color:#ff00ff;text-align:left;padding-left:3px;"><span style="transform:scaleX(1.136);transform-origin:0 50%">DUMMY</span></div>
<div class="c" style="left:625px;top:718px;width:76px;height:17px;line-height:19px;color:#ff00ff;text-align:left;padding-left:3px;"><span style="transform:scaleX(1.136);transform-origin:0 50%">DUMMY</span></div>
<div class="c" style="left:702px;top:718px;width:86px;height:17px;line-height:19px;color:#ff00ff;text-align:right;padding-right:3px;"><span style="transform:scaleX(1.284);transform-origin:100% 50%">72</span></div>
<div class="c" style="left:789px;top:718px;width:111px;height:17px;line-height:19px;color:#ff00ff;text-align:right;padding-right:3px;"><span style="transform:scaleX(1.434);transform-origin:100% 50%">9/27/2017</span></div>
<div class="c" style="left:901px;top:718px;width:109px;height:17px;line-height:19px;color:#ff00ff;text-align:left;padding-left:3px;"><span style="transform:scaleX(1.162);transform-origin:0 50%">HIRALAL YADAV</span></div>
<div class="c" style="left:1011px;top:718px;width:75px;height:17px;line-height:19px;color:#ff00ff;text-align:left;padding-left:3px;"><span style="transform:scaleX(1.170);transform-origin:0 50%">MUMBAI</span></div>
<div class="c" style="left:1087px;top:718px;width:84px;height:17px;line-height:19px;color:#ff00ff;text-align:right;padding-right:3px;"><span style="transform:scaleX(1.284);transform-origin:100% 50%">400068</span></div>
<div class="c" style="left:1172px;top:718px;width:90px;height:17px;line-height:19px;color:#ff00ff;text-align:right;padding-right:3px;"><span style="transform:scaleX(1.284);transform-origin:100% 50%">21212121</span></div>
<div class="c" style="left:1339px;top:718px;width:108px;height:17px;line-height:19px;color:#ff00ff;text-align:right;padding-right:3px;"><span style="transform:scaleX(1.284);transform-origin:100% 50%">9892241603</span></div>
<div class="c" style="left:1448px;top:718px;width:75px;height:17px;line-height:19px;color:#ff00ff;text-align:left;padding-left:3px;"><span style="transform:scaleX(1.151);transform-origin:0 50%">KRISHNASH</span></div>
<div class="c" style="left:1524px;top:718px;width:75px;height:17px;line-height:19px;color:#ff00ff;text-align:left;padding-left:3px;"><span style="transform:scaleX(1.160);transform-origin:0 50%">HIRALAL YA</span></div>
<div class="c" style="left:1600px;top:718px;width:75px;height:17px;line-height:19px;color:#ff00ff;text-align:left;padding-left:3px;"><span style="transform:scaleX(1.157);transform-origin:0 50%">SHIVVALLA</span></div>
<div class="c" style="left:1676px;top:718px;width:151px;height:17px;line-height:19px;color:#ff00ff;text-align:left;padding-left:3px;"><span style="transform:scaleX(1.180);transform-origin:0 50%">BUILDING NO 5 RAWAL</span></div>
<div class="c" style="left:1828px;top:718px;width:75px;height:17px;line-height:19px;color:#ff00ff;text-align:left;padding-left:3px;"><span style="transform:scaleX(1.170);transform-origin:0 50%">MUMBAI</span></div>
<div class="rn" style="top:736px">70</div>
<div class="b" style="left:0;top:753px;width:33px;height:1px;background:#d0d0d0"></div>
<div class="c" style="left:34px;top:736px;width:168px;height:17px;line-height:19px;color:#3333ff;text-align:left;padding-left:3px;"><span style="transform:scaleX(1.228);transform-origin:0 50%">UVMUM00042007785</span></div>
<div class="c" style="left:203px;top:736px;width:93px;height:17px;line-height:19px;color:#3333ff;text-align:right;padding-right:3px;"><span style="transform:scaleX(1.284);transform-origin:100% 50%">165266148</span></div>
<div class="c" style="left:297px;top:736px;width:39px;height:17px;line-height:19px;color:#3333ff;text-align:left;padding-left:3px;"><span style="transform:scaleX(1.075);transform-origin:0 50%">CV</span></div>
<div class="c" style="left:337px;top:736px;width:58px;height:17px;line-height:19px;color:#3333ff;text-align:center;"><span style="transform:scaleX(1.109);transform-origin:50% 50%">Y</span></div>
<div class="c" style="left:396px;top:736px;width:151px;height:17px;line-height:19px;color:#3333ff;text-align:left;padding-left:3px;"><span style="transform:scaleX(1.099);transform-origin:0 50%">DUMMY FOR ECLGS</span></div>
<div class="c" style="left:702px;top:736px;width:86px;height:17px;line-height:19px;color:#3333ff;text-align:right;padding-right:3px;"><span style="transform:scaleX(1.284);transform-origin:100% 50%">48</span></div>
<div class="c" style="left:789px;top:736px;width:111px;height:17px;line-height:19px;color:#3333ff;text-align:right;padding-right:3px;"><span style="transform:scaleX(1.456);transform-origin:100% 50%">9/2/2020</span></div>
<div class="c" style="left:1448px;top:736px;width:75px;height:17px;line-height:19px;color:#3333ff;text-align:left;padding-left:3px;"><span style="transform:scaleX(1.106);transform-origin:0 50%">SHAHABAD</span></div>
<div class="c" style="left:1524px;top:736px;width:75px;height:17px;line-height:19px;color:#3333ff;text-align:left;padding-left:3px;"><span style="transform:scaleX(1.224);transform-origin:0 50%">B 204 SHIV</span></div>
<div class="c" style="left:1600px;top:736px;width:75px;height:17px;line-height:19px;color:#3333ff;text-align:left;padding-left:3px;"><span style="transform:scaleX(1.099);transform-origin:0 50%">GANESH NAGAR</span></div>
<div class="c" style="left:1676px;top:736px;width:75px;height:17px;line-height:19px;color:#3333ff;text-align:left;padding-left:3px;"><span style="transform:scaleX(1.170);transform-origin:0 50%">MUMBAI</span></div>
<div class="c" style="left:1828px;top:736px;width:75px;height:17px;line-height:19px;color:#3333ff;text-align:left;padding-left:3px;"><span style="transform:scaleX(1.170);transform-origin:0 50%">MUMBAI</span></div>
<div class="rn" style="top:754px">71</div>
<div class="b" style="left:0;top:771px;width:33px;height:1px;background:#d0d0d0"></div>
<div class="c" style="left:34px;top:754px;width:168px;height:17px;line-height:19px;color:#3333ff;text-align:left;padding-left:3px;"><span style="transform:scaleX(1.237);transform-origin:0 50%">LVNMU00039480800</span></div>
<div class="c" style="left:203px;top:754px;width:93px;height:17px;line-height:19px;color:#3333ff;text-align:right;padding-right:3px;"><span style="transform:scaleX(1.284);transform-origin:100% 50%">166012937</span></div>
<div class="c" style="left:297px;top:754px;width:39px;height:17px;line-height:19px;color:#3333ff;text-align:left;padding-left:3px;"><span style="transform:scaleX(1.075);transform-origin:0 50%">CV</span></div>
<div class="c" style="left:396px;top:754px;width:75px;height:17px;line-height:19px;color:#3333ff;text-align:left;padding-left:3px;"><span style="transform:scaleX(1.226);transform-origin:0 50%">SIGNA 4018</span></div>
<div class="c" style="left:472px;top:754px;width:75px;height:17px;line-height:19px;color:#3333ff;text-align:left;padding-left:3px;"><span style="transform:scaleX(1.226);transform-origin:0 50%">SIGNA 4018</span></div>
<div class="c" style="left:548px;top:754px;width:76px;height:17px;line-height:19px;color:#3333ff;text-align:left;padding-left:3px;"><span style="transform:scaleX(1.136);transform-origin:0 50%">DUMMY</span></div>
<div class="c" style="left:625px;top:754px;width:76px;height:17px;line-height:19px;color:#3333ff;text-align:left;padding-left:3px;"><span style="transform:scaleX(1.136);transform-origin:0 50%">DUMMY</span></div>
<div class="c" style="left:702px;top:754px;width:86px;height:17px;line-height:19px;color:#3333ff;text-align:right;padding-right:3px;"><span style="transform:scaleX(1.284);transform-origin:100% 50%">58</span></div>
<div class="c" style="left:789px;top:754px;width:111px;height:17px;line-height:19px;color:#3333ff;text-align:right;padding-right:3px;"><span style="transform:scaleX(1.434);transform-origin:100% 50%">6/25/2019</span></div>
<div class="c" style="left:901px;top:754px;width:109px;height:17px;line-height:19px;color:#3333ff;text-align:left;padding-left:3px;"><span style="transform:scaleX(1.153);transform-origin:0 50%">FLAT NO 606 PLOT</span></div>
<div class="c" style="left:1011px;top:754px;width:75px;height:17px;line-height:19px;color:#3333ff;text-align:left;padding-left:3px;"><span style="transform:scaleX(1.208);transform-origin:0 50%">NAVI MUMBAI</span></div>
<div class="c" style="left:1087px;top:754px;width:84px;height:17px;line-height:19px;color:#3333ff;text-align:right;padding-right:3px;"><span style="transform:scaleX(1.284);transform-origin:100% 50%">410218</span></div>
<div class="c" style="left:1172px;top:754px;width:90px;height:17px;line-height:19px;color:#3333ff;text-align:right;padding-right:3px;"><span style="transform:scaleX(1.284);transform-origin:100% 50%">21212121</span></div>
<div class="c" style="left:1339px;top:754px;width:108px;height:17px;line-height:19px;color:#3333ff;text-align:right;padding-right:3px;"><span style="transform:scaleX(1.284);transform-origin:100% 50%">9594101313</span></div>
<div class="c" style="left:1448px;top:754px;width:75px;height:17px;line-height:19px;color:#3333ff;text-align:left;padding-left:3px;"><span style="transform:scaleX(1.128);transform-origin:0 50%">MAMTA &nbsp;RAJ</span></div>
<div class="c" style="left:1524px;top:754px;width:75px;height:17px;line-height:19px;color:#3333ff;text-align:left;padding-left:3px;"><span style="transform:scaleX(1.194);transform-origin:0 50%">606 PLOT 14</span></div>
<div class="c" style="left:1600px;top:754px;width:75px;height:17px;line-height:19px;color:#3333ff;text-align:left;padding-left:3px;"><span style="transform:scaleX(1.145);transform-origin:0 50%">MARUTI CHS</span></div>
<div class="c" style="left:1676px;top:754px;width:151px;height:17px;line-height:19px;color:#3333ff;text-align:left;padding-left:3px;"><span style="transform:scaleX(1.150);transform-origin:0 50%">14 KALAMBOLI</span></div>
<div class="c" style="left:1828px;top:754px;width:75px;height:17px;line-height:19px;color:#3333ff;text-align:left;padding-left:3px;"><span style="transform:scaleX(1.208);transform-origin:0 50%">NAVI MUMBAI</span></div>
<div class="rn" style="top:772px">72</div>
<div class="b" style="left:0;top:789px;width:33px;height:1px;background:#d0d0d0"></div>
<div class="c" style="left:34px;top:772px;width:168px;height:17px;line-height:19px;color:#3333ff;text-align:left;padding-left:3px;"><span style="transform:scaleX(1.234);transform-origin:0 50%">LVMUM00036991577</span></div>
<div class="c" style="left:203px;top:772px;width:93px;height:17px;line-height:19px;color:#3333ff;text-align:right;padding-right:3px;"><span style="transform:scaleX(1.284);transform-origin:100% 50%">104031229</span></div>
<div class="c" style="left:297px;top:772px;width:39px;height:17px;line-height:19px;color:#3333ff;text-align:left;padding-left:3px;"><span style="transform:scaleX(1.075);transform-origin:0 50%">CV</span></div>
<div class="c" style="left:337px;top:772px;width:58px;height:17px;line-height:19px;color:#3333ff;text-align:center;"><span style="transform:scaleX(1.109);transform-origin:50% 50%">Y</span></div>
<div class="c" style="left:396px;top:772px;width:75px;height:17px;line-height:19px;color:#3333ff;text-align:left;padding-left:3px;"><span style="transform:scaleX(1.185);transform-origin:0 50%">AL TF 1812</span></div>
<div class="c" style="left:472px;top:772px;width:75px;height:17px;line-height:19px;color:#3333ff;text-align:left;padding-left:3px;"><span style="transform:scaleX(1.185);transform-origin:0 50%">AL TF 1812</span></div>
<div class="c" style="left:548px;top:772px;width:76px;height:17px;line-height:19px;color:#3333ff;text-align:left;padding-left:3px;"><span style="transform:scaleX(1.136);transform-origin:0 50%">DUMMY</span></div>
<div class="c" style="left:625px;top:772px;width:76px;height:17px;line-height:19px;color:#3333ff;text-align:left;padding-left:3px;"><span style="transform:scaleX(1.136);transform-origin:0 50%">DUMMY</span></div>
<div class="c" style="left:702px;top:772px;width:86px;height:17px;line-height:19px;color:#3333ff;text-align:right;padding-right:3px;"><span style="transform:scaleX(1.284);transform-origin:100% 50%">65</span></div>
<div class="c" style="left:789px;top:772px;width:111px;height:17px;line-height:19px;color:#3333ff;text-align:right;padding-right:3px;"><span style="transform:scaleX(1.434);transform-origin:100% 50%">1/30/2018</span></div>
<div class="c" style="left:901px;top:772px;width:109px;height:17px;line-height:19px;color:#3333ff;text-align:left;padding-left:3px;"><span style="transform:scaleX(1.148);transform-origin:0 50%">14 3RD FLOOR</span></div>
<div class="c" style="left:1011px;top:772px;width:75px;height:17px;line-height:19px;color:#3333ff;text-align:left;padding-left:3px;"><span style="transform:scaleX(1.170);transform-origin:0 50%">MUMBAI</span></div>
<div class="c" style="left:1087px;top:772px;width:84px;height:17px;line-height:19px;color:#3333ff;text-align:right;padding-right:3px;"><span style="transform:scaleX(1.284);transform-origin:100% 50%">400031</span></div>
<div class="c" style="left:1172px;top:772px;width:90px;height:17px;line-height:19px;color:#3333ff;text-align:right;padding-right:3px;"><span style="transform:scaleX(1.284);transform-origin:100% 50%">21212121</span></div>
<div class="c" style="left:1339px;top:772px;width:108px;height:17px;line-height:19px;color:#3333ff;text-align:right;padding-right:3px;"><span style="transform:scaleX(1.284);transform-origin:100% 50%">9653171885</span></div>
<div class="c" style="left:1448px;top:772px;width:75px;height:17px;line-height:19px;color:#3333ff;text-align:left;padding-left:3px;"><span style="transform:scaleX(1.136);transform-origin:0 50%">SAMBHAJI</span></div>
<div class="c" style="left:1524px;top:772px;width:75px;height:17px;line-height:19px;color:#3333ff;text-align:left;padding-left:3px;"><span style="transform:scaleX(1.229);transform-origin:0 50%">34 14 3RD</span></div>
<div class="c" style="left:1600px;top:772px;width:227px;height:17px;line-height:19px;color:#3333ff;text-align:left;padding-left:3px;"><span style="transform:scaleX(1.121);transform-origin:0 50%">NAIGAON CROSS ROAD</span></div>
<div class="c" style="left:1828px;top:772px;width:75px;height:17px;line-height:19px;color:#3333ff;text-align:left;padding-left:3px;"><span style="transform:scaleX(1.170);transform-origin:0 50%">MUMBAI</span></div>
<div class="b" style="left:34px;top:105px;width:1865px;height:1px;background:#a6a6a6"></div>
<div class="b" style="left:34px;top:123px;width:1865px;height:1px;background:#000"></div>
<div class="b" style="left:34px;top:141px;width:1865px;height:1px;background:#000"></div>
<div class="b" style="left:34px;top:159px;width:1865px;height:1px;background:#000"></div>
<div class="b" style="left:34px;top:177px;width:1865px;height:1px;background:#000"></div>
<div class="b" style="left:34px;top:195px;width:1865px;height:1px;background:#000"></div>
<div class="b" style="left:34px;top:213px;width:1865px;height:1px;background:#000"></div>
<div class="b" style="left:34px;top:231px;width:1865px;height:1px;background:#000"></div>
<div class="b" style="left:34px;top:249px;width:1865px;height:1px;background:#000"></div>
<div class="b" style="left:34px;top:267px;width:1865px;height:1px;background:#000"></div>
<div class="b" style="left:34px;top:285px;width:1865px;height:1px;background:#000"></div>
<div class="b" style="left:34px;top:303px;width:1865px;height:1px;background:#000"></div>
<div class="b" style="left:34px;top:321px;width:1865px;height:1px;background:#000"></div>
<div class="b" style="left:34px;top:339px;width:1865px;height:1px;background:#000"></div>
<div class="b" style="left:34px;top:357px;width:1865px;height:1px;background:#000"></div>
<div class="b" style="left:34px;top:375px;width:1865px;height:1px;background:#000"></div>
<div class="b" style="left:34px;top:393px;width:1865px;height:1px;background:#000"></div>
<div class="b" style="left:34px;top:411px;width:1865px;height:1px;background:#000"></div>
<div class="b" style="left:34px;top:429px;width:1865px;height:1px;background:#000"></div>
<div class="b" style="left:34px;top:447px;width:1865px;height:1px;background:#000"></div>
<div class="b" style="left:34px;top:465px;width:1865px;height:1px;background:#000"></div>
<div class="b" style="left:34px;top:483px;width:1865px;height:1px;background:#000"></div>
<div class="b" style="left:34px;top:501px;width:1865px;height:1px;background:#000"></div>
<div class="b" style="left:34px;top:519px;width:1865px;height:1px;background:#000"></div>
<div class="b" style="left:34px;top:537px;width:1865px;height:1px;background:#000"></div>
<div class="b" style="left:34px;top:555px;width:1865px;height:1px;background:#000"></div>
<div class="b" style="left:34px;top:573px;width:1865px;height:1px;background:#000"></div>
<div class="b" style="left:34px;top:591px;width:1865px;height:1px;background:#000"></div>
<div class="b" style="left:34px;top:609px;width:1865px;height:1px;background:#000"></div>
<div class="b" style="left:34px;top:627px;width:1865px;height:1px;background:#000"></div>
<div class="b" style="left:34px;top:645px;width:1865px;height:1px;background:#000"></div>
<div class="b" style="left:34px;top:663px;width:1865px;height:1px;background:#000"></div>
<div class="b" style="left:34px;top:681px;width:1865px;height:1px;background:#000"></div>
<div class="b" style="left:34px;top:699px;width:1865px;height:1px;background:#000"></div>
<div class="b" style="left:34px;top:717px;width:1865px;height:1px;background:#000"></div>
<div class="b" style="left:34px;top:735px;width:1865px;height:1px;background:#000"></div>
<div class="b" style="left:34px;top:753px;width:1865px;height:1px;background:#000"></div>
<div class="b" style="left:34px;top:771px;width:1865px;height:1px;background:#000"></div>
<div class="b" style="left:34px;top:789px;width:1865px;height:1px;background:#000"></div>
<div class="b" style="left:202px;top:105px;width:1px;height:685px;background:#000"></div>
<div class="b" style="left:296px;top:105px;width:1px;height:685px;background:#000"></div>
<div class="b" style="left:336px;top:105px;width:1px;height:685px;background:#000"></div>
<div class="b" style="left:395px;top:105px;width:1px;height:685px;background:#8c8c8c"></div>
<div class="b" style="left:471px;top:105px;width:1px;height:199px;background:#000"></div>
<div class="b" style="left:471px;top:321px;width:1px;height:379px;background:#000"></div>
<div class="b" style="left:471px;top:717px;width:1px;height:19px;background:#000"></div>
<div class="b" style="left:471px;top:753px;width:1px;height:37px;background:#000"></div>
<div class="b" style="left:547px;top:105px;width:1px;height:685px;background:#000"></div>
<div class="b" style="left:624px;top:105px;width:1px;height:685px;background:#000"></div>
<div class="b" style="left:701px;top:105px;width:1px;height:685px;background:#000"></div>
<div class="b" style="left:788px;top:105px;width:1px;height:685px;background:#000"></div>
<div class="b" style="left:900px;top:105px;width:1px;height:685px;background:#000"></div>
<div class="b" style="left:1010px;top:105px;width:1px;height:307px;background:#000"></div>
<div class="b" style="left:1010px;top:429px;width:1px;height:361px;background:#000"></div>
<div class="b" style="left:1086px;top:105px;width:1px;height:307px;background:#000"></div>
<div class="b" style="left:1086px;top:429px;width:1px;height:361px;background:#000"></div>
<div class="b" style="left:1171px;top:105px;width:1px;height:307px;background:#000"></div>
<div class="b" style="left:1171px;top:429px;width:1px;height:361px;background:#000"></div>
<div class="b" style="left:1262px;top:105px;width:1px;height:307px;background:#000"></div>
<div class="b" style="left:1262px;top:429px;width:1px;height:361px;background:#000"></div>
<div class="b" style="left:1338px;top:105px;width:1px;height:685px;background:#000"></div>
<div class="b" style="left:1447px;top:105px;width:1px;height:685px;background:#000"></div>
<div class="b" style="left:1523px;top:105px;width:1px;height:685px;background:#000"></div>
<div class="b" style="left:1599px;top:105px;width:1px;height:325px;background:#000"></div>
<div class="b" style="left:1599px;top:447px;width:1px;height:343px;background:#000"></div>
<div class="b" style="left:1675px;top:105px;width:1px;height:145px;background:#000"></div>
<div class="b" style="left:1675px;top:285px;width:1px;height:55px;background:#000"></div>
<div class="b" style="left:1675px;top:357px;width:1px;height:37px;background:#000"></div>
<div class="b" style="left:1675px;top:411px;width:1px;height:19px;background:#000"></div>
<div class="b" style="left:1675px;top:447px;width:1px;height:19px;background:#000"></div>
<div class="b" style="left:1675px;top:501px;width:1px;height:19px;background:#000"></div>
<div class="b" style="left:1675px;top:537px;width:1px;height:235px;background:#000"></div>
<div class="b" style="left:1751px;top:105px;width:1px;height:19px;background:#000"></div>
<div class="b" style="left:1751px;top:213px;width:1px;height:19px;background:#000"></div>
<div class="b" style="left:1751px;top:321px;width:1px;height:55px;background:#000"></div>
<div class="b" style="left:1751px;top:447px;width:1px;height:19px;background:#000"></div>
<div class="b" style="left:1751px;top:537px;width:1px;height:19px;background:#000"></div>
<div class="b" style="left:1751px;top:573px;width:1px;height:19px;background:#000"></div>
<div class="b" style="left:1751px;top:663px;width:1px;height:19px;background:#000"></div>
<div class="b" style="left:1751px;top:735px;width:1px;height:19px;background:#000"></div>
<div class="b" style="left:1827px;top:105px;width:1px;height:685px;background:#000"></div>
<div class="b" style="left:1903px;top:105px;width:1px;height:685px;background:#9b9b9b"></div>
<div class="b" style="left:1898px;top:23px;width:1px;height:760px;background:#9b9b9b"></div>
<div class="b" style="left:899px;top:302px;width:109px;height:17px;border:2px solid #217346"></div>
<div class="b" style="left:1007px;top:318px;width:5px;height:5px;background:#217346;border:1px solid #fff"></div>
</div>
<span class="t" style="top:216.8px;font-size:15px;line-height:21px;color:#444;left:113.0px;transform-origin:50% 50%;transform:scaleX(0.970);">A</span>
<span class="t" style="top:216.8px;font-size:15px;line-height:21px;color:#444;left:244.5px;transform-origin:50% 50%;transform:scaleX(0.970);">B</span>
<span class="t" style="top:216.8px;font-size:15px;line-height:21px;color:#444;left:311.1px;transform-origin:50% 50%;transform:scaleX(0.970);">C</span>
<span class="t" style="top:216.8px;font-size:15px;line-height:21px;color:#444;left:360.6px;transform-origin:50% 50%;transform:scaleX(0.970);">D</span>
<span class="t" style="top:216.8px;font-size:15px;line-height:21px;color:#444;left:423.9px;transform-origin:50% 50%;transform:scaleX(0.970);">BZ</span>
<span class="t" style="top:216.8px;font-size:15px;line-height:21px;color:#444;left:499.1px;transform-origin:50% 50%;transform:scaleX(0.970);">CA</span>
<span class="t" style="top:216.8px;font-size:15px;line-height:21px;color:#444;left:575.6px;transform-origin:50% 50%;transform:scaleX(0.970);">CB</span>
<span class="t" style="top:216.8px;font-size:15px;line-height:21px;color:#444;left:652.2px;transform-origin:50% 50%;transform:scaleX(0.970);">CC</span>
<span class="t" style="top:216.8px;font-size:15px;line-height:21px;color:#444;left:734.2px;transform-origin:50% 50%;transform:scaleX(0.970);">CD</span>
<span class="t" style="top:216.8px;font-size:15px;line-height:21px;color:#444;left:834.1px;transform-origin:50% 50%;transform:scaleX(0.970);">CE</span>
<span class="t" style="top:216.8px;font-size:15px;line-height:21px;color:#217346;font-weight:bold;left:945.5px;transform-origin:50% 50%;transform:scaleX(0.950);">CF</span>
<span class="t" style="top:216.8px;font-size:15px;line-height:21px;color:#444;left:1037.2px;transform-origin:50% 50%;transform:scaleX(0.970);">CG</span>
<span class="t" style="top:216.8px;font-size:15px;line-height:21px;color:#444;left:1118.2px;transform-origin:50% 50%;transform:scaleX(0.970);">CH</span>
<span class="t" style="top:216.8px;font-size:15px;line-height:21px;color:#444;left:1209.5px;transform-origin:50% 50%;transform:scaleX(0.970);">CI</span>
<span class="t" style="top:216.8px;font-size:15px;line-height:21px;color:#444;left:1291.3px;transform-origin:50% 50%;transform:scaleX(0.970);">CJ</span>
<span class="t" style="top:216.8px;font-size:15px;line-height:21px;color:#444;left:1382.6px;transform-origin:50% 50%;transform:scaleX(0.970);">CK</span>
<span class="t" style="top:216.8px;font-size:15px;line-height:21px;color:#444;left:1475.9px;transform-origin:50% 50%;transform:scaleX(0.970);">CL</span>
<span class="t" style="top:216.8px;font-size:15px;line-height:21px;color:#444;left:1549.8px;transform-origin:50% 50%;transform:scaleX(0.970);">CM</span>
<span class="t" style="top:216.8px;font-size:15px;line-height:21px;color:#444;left:1626.7px;transform-origin:50% 50%;transform:scaleX(0.970);">CN</span>
<span class="t" style="top:216.8px;font-size:15px;line-height:21px;color:#444;left:1702.2px;transform-origin:50% 50%;transform:scaleX(0.970);">CO</span>
<span class="t" style="top:216.8px;font-size:15px;line-height:21px;color:#444;left:1779.1px;transform-origin:50% 50%;transform:scaleX(0.970);">CP</span>
<span class="t" style="top:216.8px;font-size:15px;line-height:21px;color:#444;left:1854.2px;transform-origin:50% 50%;transform:scaleX(0.970);">CQ</span>
<div class="b" style="left:1900px;top:215px;width:20px;height:775px;background:#fff;"></div>
<div class="b" style="left:1902px;top:232px;width:15px;height:744px;background:#f0f0f0;"></div>
<div class="b" style="left:1902px;top:217px;width:13px;height:14px;background:#fff;border:1px solid #ababab;"></div>
<svg class="b" style="left:1906px;top:222px;" width="7" height="4" viewBox="0 0 7 4"><path d="M0 4H7L3.5 0Z" fill="#777"/></svg>
<div class="b" style="left:1902px;top:233px;width:13px;height:505px;background:#fff;border:1px solid #ababab;"></div>
<div class="b" style="left:1902px;top:975px;width:13px;height:13px;background:#fff;border:1px solid #ababab;"></div>
<svg class="b" style="left:1906px;top:980px;" width="7" height="4" viewBox="0 0 7 4"><path d="M0 0H7L3.5 4Z" fill="#777"/></svg>
<div class="b" style="left:0px;top:990px;width:1920px;height:28px;background:#f3f3f3;"></div>
<div class="b" style="left:0px;top:990px;width:1900px;height:1px;background:#c6c6c6;"></div>
<svg class="b" style="left:27px;top:998px;" width="5" height="10" viewBox="0 0 5 10"><path d="M5 0V10L0 5Z" fill="#c6c6c6"/></svg>
<svg class="b" style="left:56px;top:998px;" width="5" height="10" viewBox="0 0 5 10"><path d="M0 0V10L5 5Z" fill="#c6c6c6"/></svg>
<div class="b" style="left:100px;top:995px;width:1px;height:18px;background:#ababab;"></div>
<span class="t" style="top:995.8px;font-size:12px;line-height:17px;color:#444;left:114.0px;transform-origin:0 50%;transform:scaleX(0.964);">PIVOT</span>
<div class="b" style="left:163px;top:991px;width:59px;height:22px;background:#fff;border-left:1px solid #c6c6c6;border-right:1px solid #c6c6c6"></div>
<div class="b" style="left:163px;top:1012px;width:60px;height:2px;background:#217346;"></div>
<span class="t" style="top:995.0px;font-size:12.5px;line-height:18px;color:#217346;font-weight:bold;left:175.7px;transform-origin:0 50%;transform:scaleX(1.074);">MAIN</span>
<span class="t" style="top:995.8px;font-size:12px;line-height:17px;color:#444;left:235.3px;transform-origin:0 50%;">Sheet1</span>
<div class="b" style="left:286px;top:995px;width:1px;height:18px;background:#ababab;"></div>
<svg class="b" style="left:319px;top:995px;" width="17" height="17" viewBox="0 0 17 17"><circle cx="8.5" cy="8.5" r="7.5" fill="none" stroke="#777" stroke-width="1.2"/><path d="M8.5 4.5V12.5M4.5 8.5H12.5" stroke="#777" stroke-width="1.6"/></svg>
<div class="b" style="left:1152px;top:999px;width:2px;height:2px;background:#ababab;border-radius:1px"></div>
<div class="b" style="left:1152px;top:1003px;width:2px;height:2px;background:#ababab;border-radius:1px"></div>
<div class="b" style="left:1152px;top:1007px;width:2px;height:2px;background:#ababab;border-radius:1px"></div>
<div class="b" style="left:1183px;top:997px;width:699px;height:15px;background:#e6e6e6;"></div>
<div class="b" style="left:1169px;top:997px;width:13px;height:13px;background:#fff;border:1px solid #ababab;"></div>
<svg class="b" style="left:1173px;top:1000px;" width="4" height="8" viewBox="0 0 4 8"><path d="M4 0V8L0 4Z" fill="#555"/></svg>
<div class="b" style="left:1484px;top:997px;width:76px;height:13px;background:#fff;border:1px solid #ababab;"></div>
<div class="b" style="left:1882px;top:997px;width:13px;height:13px;background:#fff;border:1px solid #ababab;"></div>
<svg class="b" style="left:1888px;top:1000px;" width="4" height="8" viewBox="0 0 4 8"><path d="M0 0V8L4 4Z" fill="#555"/></svg>
<div class="b" style="left:0px;top:1018px;width:1920px;height:22px;background:#217346;"></div>
<span class="t" style="top:1021.8px;font-size:11px;line-height:15px;color:#fff;left:7.3px;transform-origin:0 50%;transform:scaleX(0.863);">READY</span>
<span class="t" style="top:1021.8px;font-size:11px;line-height:15px;color:#fff;left:56.0px;transform-origin:0 50%;transform:scaleX(0.930);">FILTER MODE</span>
<div class="b" style="left:1628px;top:1018px;width:38px;height:22px;background:#185c37;"></div>
<svg class="b" style="left:1640px;top:1022px;" width="14" height="14" viewBox="0 0 14 14"><rect x="0.5" y="0.5" width="12" height="12" fill="none" stroke="#fff"/><path d="M0.5 4.5H12.5M0.5 8.5H12.5M4.5 0.5V12.5M8.5 0.5V12.5" stroke="#fff"/></svg>
<svg class="b" style="left:1678px;top:1022px;" width="14" height="14" viewBox="0 0 14 14"><rect x="0.5" y="0.5" width="13" height="12" fill="none" stroke="#fff"/><rect x="3.5" y="3.5" width="7" height="7" fill="none" stroke="#fff"/><path d="M5 6H9M5 8H9" stroke="#fff"/></svg>
<svg class="b" style="left:1716px;top:1022px;" width="14" height="14" viewBox="0 0 14 14"><rect x="0.5" y="0.5" width="13" height="12" fill="none" stroke="#fff"/><rect x="2" y="2" width="4" height="5" fill="#fff"/><rect x="7.5" y="2" width="4.5" height="8" fill="#fff"/></svg>
<div class="b" style="left:1747px;top:1028px;width:6px;height:2px;background:#fff;"></div>
<div class="b" style="left:1757px;top:1028px;width:100px;height:1px;background:#fff;"></div>
<div class="b" style="left:1807px;top:1023px;width:4px;height:12px;background:#fff;"></div>
<div class="b" style="left:1861px;top:1028px;width:8px;height:2px;background:#fff;"></div>
<div class="b" style="left:1864px;top:1025px;width:2px;height:8px;background:#fff;"></div>
<span class="t" style="top:1021.8px;font-size:11px;line-height:15px;color:#fff;left:1885.0px;transform-origin:0 50%;transform:scaleX(0.941);">118%</span>
<div class="b" style="left:0px;top:1040px;width:1920px;height:40px;background:linear-gradient(90deg,#1f2e38 0%,#213640 25%,#213440 50%,#1f2d42 75%,#1c2745 100%)"></div>
<div class="b" style="left:1915px;top:1040px;width:1px;height:40px;background:#5b6678;"></div>
<svg class="b" style="left:16px;top:1052px;" width="16" height="16" viewBox="0 0 16 16"><path d="M0 2.3L6.6 1.4V7.6H0ZM7.4 1.3L16 0V7.6H7.4ZM0 8.4H6.6V14.6L0 13.7ZM7.4 8.4H16V16L7.4 14.7Z" fill="#fff"/></svg>
<div class="b" style="left:48px;top:1040px;width:344px;height:40px;background:#f2f2f2;"></div>
<svg class="b" style="left:60px;top:1052px;" width="17" height="17" viewBox="0 0 17 17"><circle cx="10.5" cy="6.5" r="5.2" fill="none" stroke="#222" stroke-width="1.4"/><path d="M6.8 10.2L1 16" stroke="#222" stroke-width="1.6"/></svg>
<span class="t" style="top:1050.0px;font-size:15px;line-height:21px;color:#444;left:88.3px;transform-origin:0 50%;transform:scaleX(0.963);">Type here to search</span>
<svg class="b" style="left:407px;top:1052px;" width="17" height="17" viewBox="0 0 17 17"><circle cx="8.5" cy="8.5" r="6.8" fill="none" stroke="#fff" stroke-width="2"/></svg>
<svg class="b" style="left:455px;top:1052px;" width="18" height="16" viewBox="0 0 18 16"><rect x="2.5" y="3.5" width="9" height="9" fill="none" stroke="#fff" stroke-width="1.3"/><path d="M2 1H12M2 15H12" stroke="#fff" stroke-width="1.3"/><path d="M15 3V7M15 9V13" stroke="#fff" stroke-width="1.6"/></svg>
<svg class="b" style="left:503px;top:1048px;" width="25" height="25" viewBox="0 0 25 25"><defs><linearGradient id="eg" x1="0" y1="0" x2="1" y2="1"><stop offset="0" stop-color="#35c1f1"/><stop offset="0.5" stop-color="#1b9de2"/><stop offset="1" stop-color="#0c59a4"/></linearGradient></defs><circle cx="12.5" cy="12.5" r="12" fill="url(#eg)"/><path d="M3 10C6 3 18 2 22 9C24 13 21 16 17 15C19 12 16 8 12 9C7 10 6 17 11 21C5 20 1 15 3 10Z" fill="#4fd672" opacity="0.85"/><path d="M10 11C13 9 17 11 16 14C15 16 13 16 12 15C10 18 14 22 20 20C16 25 7 24 6 17C5.5 14 7.5 12 10 11Z" fill="#0b4f99"/></svg>
<svg class="b" style="left:552px;top:1050px;" width="23" height="20" viewBox="0 0 23 20"><path d="M0 2.5H8L10 5H23V19H0Z" fill="#f7c64a"/><path d="M0 7H23V19H0Z" fill="#fbd970"/><rect x="6.5" y="12" width="10" height="7" fill="#4a90d9"/><rect x="9" y="14.5" width="5" height="4.5" fill="#fbd970"/></svg>
<div class="b" style="left:541px;top:1078px;width:43px;height:2px;background:#76b9ed;"></div>
<svg class="b" style="left:601px;top:1048px;" width="24" height="24" viewBox="0 0 24 24"><circle cx="12" cy="12" r="11.5" fill="#fff"/><path d="M12 0.5A11.5 11.5 0 0 1 22 6.3H12A5.7 5.7 0 0 0 7 9.2L2.2 5.5A11.5 11.5 0 0 1 12 0.5Z" fill="#ea4335"/><path d="M22 6.3A11.5 11.5 0 0 1 11 23.4L16.2 14.7A5.7 5.7 0 0 0 16.5 8.5L17 6.3Z" fill="#fbbc05"/><path d="M2.2 5.5L7.2 14.9A5.7 5.7 0 0 0 13.5 17.5L11 23.4A11.5 11.5 0 0 1 2.2 5.5Z" fill="#34a853"/><circle cx="12" cy="12" r="5.2" fill="#fff"/><circle cx="12" cy="12" r="4.2" fill="#4285f4"/></svg>
<div class="b" style="left:593px;top:1078px;width:40px;height:2px;background:#76b9ed;"></div>
<div class="b" style="left:638px;top:1040px;width:48px;height:40px;background:rgba(255,255,255,0.13);"></div>
<div class="b" style="left:682px;top:1040px;width:4px;height:40px;background:rgba(255,255,255,0.08);"></div>
<svg class="b" style="left:650px;top:1049px;" width="24" height="22" viewBox="0 0 24 22"><path d="M0 2.5L13 0V22L0 19.5Z" fill="#1e7145"/><rect x="13" y="3" width="10" height="16" fill="#fff" stroke="#1e7145"/><path d="M15 6H21M15 9H21M15 12H21M15 15H21M18 4V18" stroke="#1e7145"/><path d="M3.5 6.5L9.5 15.5M9.5 6.5L3.5 15.5" stroke="#fff" stroke-width="2"/></svg>
<div class="b" style="left:638px;top:1078px;width:44px;height:2px;background:#76b9ed;"></div>
<svg class="b" style="left:699px;top:1050px;" width="23" height="19" viewBox="0 0 23 19"><rect x="0" y="0" width="23" height="19" fill="#000" stroke="#bbb" stroke-width="0.8"/><rect x="0.5" y="0.5" width="22" height="2.5" fill="#ddd"/><path d="M3 7.5H8M10 10H16" stroke="#ddd"/></svg>
<div class="b" style="left:691px;top:1078px;width:40px;height:2px;background:#76b9ed;"></div>
<svg class="b" style="left:1548px;top:1051px;" width="25" height="18" viewBox="0 0 25 18"><rect x="1" y="1" width="20" height="15" rx="1.5" fill="none" stroke="#fff" stroke-width="1.4"/><path d="M21 4H23.5V14.5C23.5 16 21 16 21 14.5" fill="none" stroke="#fff" stroke-width="1.2"/><rect x="4" y="6" width="6" height="6" fill="none" stroke="#fff" stroke-width="1.2"/><path d="M12 6.5H18M12 9H18M12 11.5H18M4 4H18" stroke="#fff" stroke-width="1.2"/></svg>
<span class="t" style="top:1050.3px;font-size:14.5px;line-height:20px;color:#fff;left:1580.0px;transform-origin:0 50%;transform:scaleX(0.935);">33°C &nbsp;Smoke</span>
<svg class="b" style="left:1676px;top:1055px;" width="13" height="9" viewBox="0 0 13 9"><path d="M1 8L6.5 2L12 8" fill="none" stroke="#fff" stroke-width="1.5"/></svg>
<svg class="b" style="left:1700px;top:1051px;" width="16" height="18" viewBox="0 0 16 18"><rect x="2" y="4.5" width="8" height="8" rx="2" fill="none" stroke="#fff" stroke-width="1.2"/><path d="M10 8L13.5 6V11L10 9.5M2 3C4 0.5 10 0.5 12 3M2 14.5C4 17 10 17 12 14.5" fill="none" stroke="#fff" stroke-width="1.1"/></svg>
<svg class="b" style="left:1722px;top:1053px;" width="18" height="15" viewBox="0 0 18 15"><rect x="3.5" y="0.8" width="13" height="8.5" fill="none" stroke="#fff" stroke-width="1.2"/><path d="M10 9.5V13M5.5 13.5H14.5" stroke="#fff" stroke-width="1.2"/><rect x="0.5" y="3.5" width="3.5" height="7" fill="#22333f" stroke="#fff"/></svg>
<svg class="b" style="left:1746px;top:1053px;" width="18" height="15" viewBox="0 0 18 15"><path d="M1 5.5H4L8 2V13L4 9.5H1Z" fill="none" stroke="#fff" stroke-width="1.2"/><path d="M10.5 5C12 6.5 12 8.5 10.5 10M12.8 3C15.3 5.5 15.3 9.5 12.8 12M15 1.3C18.3 5 18.3 10 15 13.7" fill="none" stroke="#fff" stroke-width="1.1"/></svg>
<span class="t" style="top:1043.9px;font-size:12px;line-height:17px;color:#fff;left:1771.5px;transform-origin:50% 50%;transform:scaleX(0.865);">ENG</span>
<span class="t" style="top:1060.9px;font-size:12px;line-height:17px;color:#fff;left:1776.7px;transform-origin:50% 50%;transform:scaleX(0.840);">US</span>
<span class="t" style="top:1043.5px;font-size:12px;line-height:17px;color:#fff;left:1812.7px;transform-origin:50% 50%;transform:scaleX(0.940);">3:59 PM</span>
<span class="t" style="top:1061.1px;font-size:12px;line-height:17px;color:#fff;left:1808.3px;transform-origin:50% 50%;transform:scaleX(0.974);">7/19/2022</span>
<svg class="b" style="left:1878px;top:1051px;" width="24" height="24" viewBox="0 0 24 24"><path d="M1.5 1H17.5V13H9L5 17V13H1.5Z" fill="#fff"/><path d="M4 4.5H15M4 7H15M4 9.5H12" stroke="#1d2c44"/><circle cx="16.5" cy="16" r="7.3" fill="#33373f" stroke="#8a8f99" stroke-width="0.8"/><text x="16.3" y="20" text-anchor="middle" font-size="11" font-weight="bold" fill="#fff" font-family="Liberation Sans">1</text></svg>
<span class="t" style="top:944.0px;font-size:20px;line-height:28px;color:rgba(140,140,140,0.5);left:1600.4px;transform-origin:0 50%;transform:scaleX(0.982);">Activate Windows</span>
<span class="t" style="top:971.5px;font-size:14px;line-height:20px;color:rgba(140,140,140,0.5);left:1600.4px;transform-origin:0 50%;transform:scaleX(1.057);">Go to Settings to activate Windows.</span>
</body></html>
